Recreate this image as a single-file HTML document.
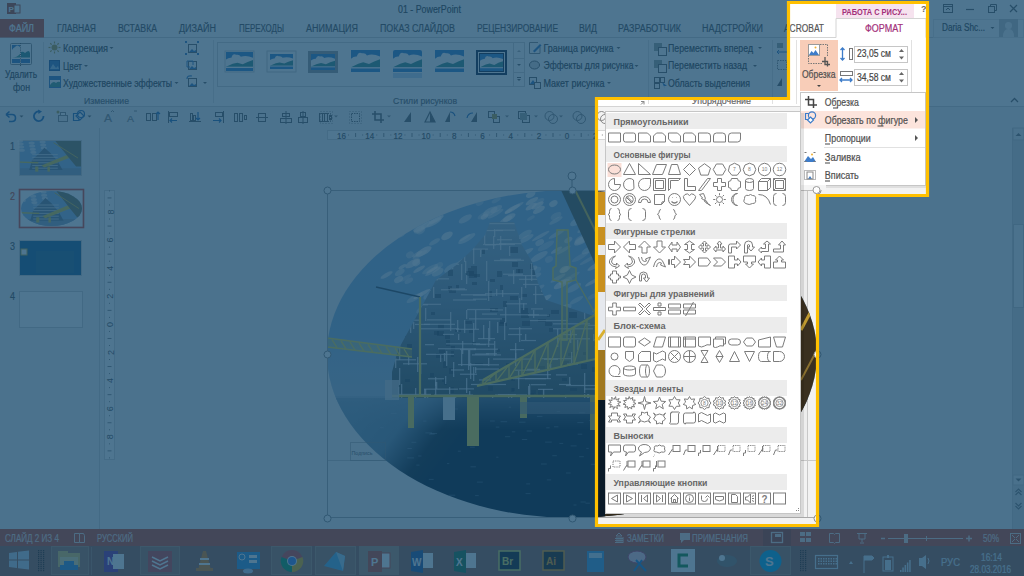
<!DOCTYPE html>
<html><head><meta charset="utf-8"><style>
html,body{margin:0;padding:0;width:1024px;height:576px;overflow:hidden;background:#4e7590}
svg{display:block}
</style></head><body>
<svg width="1024" height="576" viewBox="0 0 1024 576">
<defs>
<clipPath id="ell"><ellipse cx="572" cy="354" rx="245" ry="164"/></clipPath>
<linearGradient id="sky" x1="0" y1="0" x2="0" y2="1"><stop offset="0" stop-color="#86b2dc"/><stop offset="0.7" stop-color="#8ab2d6"/><stop offset="1" stop-color="#9cbcd6"/></linearGradient>
<linearGradient id="haze" x1="0" y1="0" x2="0" y2="1"><stop offset="0" stop-color="#b0c4d8" stop-opacity="0"/><stop offset="1" stop-color="#a8bcd0" stop-opacity="0.7"/></linearGradient>
<linearGradient id="sea" gradientUnits="userSpaceOnUse" x1="360" y1="405" x2="440" y2="465"><stop offset="0" stop-color="#7898b0"/><stop offset="0.45" stop-color="#6a88a0"/><stop offset="0.8" stop-color="#16222c"/><stop offset="1" stop-color="#0a1a28"/></linearGradient>
<linearGradient id="haze2" x1="0" y1="0" x2="0" y2="1"><stop offset="0" stop-color="#90a8c0" stop-opacity="0.55"/><stop offset="1" stop-color="#7890a8" stop-opacity="0"/></linearGradient>
<linearGradient id="towerg" x1="0" y1="0" x2="0" y2="1"><stop offset="0" stop-color="#98b0c4"/><stop offset="0.45" stop-color="#7a8ea0"/><stop offset="1" stop-color="#4a5450"/></linearGradient>
</defs>
<rect x="0" y="0" width="1024" height="576" fill="#e6e6e6" />
<rect x="0" y="0" width="1024" height="107" fill="#ffffff" />
<line x1="0" y1="37.5" x2="1024" y2="37.5" stroke="#d4d4d4" stroke-width="1" />
<line x1="0" y1="106.5" x2="1024" y2="106.5" stroke="#d4d4d4" stroke-width="1" />
<rect x="0" y="107" width="1024" height="21" fill="#f3f3f3" />
<rect x="0" y="128" width="100" height="401" fill="#f2f2f2" />
<line x1="99.5" y1="128" x2="99.5" y2="529" stroke="#d4d4d4" stroke-width="1" />
<rect x="100" y="128" width="924" height="401" fill="#f2f2f2" />
<rect x="7" y="3" width="9" height="11" fill="#b7472a" />
<rect x="14" y="5" width="6" height="8" fill="#ffffff" stroke="#b7472a" stroke-width="1" />
<text x="8.5" y="12" font-family="Liberation Sans" font-size="8" fill="#ffffff" font-weight="700" >P</text>
<text x="398" y="12.9" font-family="Liberation Sans" font-size="11" fill="#444444" textLength="63" lengthAdjust="spacingAndGlyphs" stroke="#444444" stroke-width="0.2" >01 - PowerPoint</text>
<text x="921" y="12" font-family="Liberation Sans" font-size="9" fill="#666" font-weight="700" >?</text>
<rect x="943.5" y="4.5" width="9" height="8" fill="none" stroke="#666" stroke-width="1" />
<line x1="943.5" y1="6.5" x2="952.5" y2="6.5" stroke="#666" stroke-width="1" />
<path d="M946,10 L948,8 L950,10" fill="none" stroke="#666" stroke-width="1" />
<line x1="966" y1="9.5" x2="974" y2="9.5" stroke="#666" stroke-width="1.2" />
<rect x="988.5" y="6.5" width="6" height="6" fill="none" stroke="#666" stroke-width="1" />
<path d="M990.5,6.5 V4.5 H996.5 V10.5 H994.5" fill="none" stroke="#666" stroke-width="1" />
<path d="M1010,5 L1017,12 M1017,5 L1010,12" fill="none" stroke="#666" stroke-width="1.3" />
<rect x="0" y="19" width="44" height="18.5" fill="#d24726" />
<text x="9" y="31.5" font-family="Liberation Sans" font-size="10" fill="#ffffff" textLength="25" lengthAdjust="spacingAndGlyphs" stroke="#ffffff" stroke-width="0.2" >ФАЙЛ</text>
<text x="57" y="31.5" font-family="Liberation Sans" font-size="10" fill="#555555" textLength="39" lengthAdjust="spacingAndGlyphs" stroke="#555555" stroke-width="0.2" >ГЛАВНАЯ</text>
<text x="118" y="31.5" font-family="Liberation Sans" font-size="10" fill="#555555" textLength="39" lengthAdjust="spacingAndGlyphs" stroke="#555555" stroke-width="0.2" >ВСТАВКА</text>
<text x="179" y="31.5" font-family="Liberation Sans" font-size="10" fill="#555555" textLength="37" lengthAdjust="spacingAndGlyphs" stroke="#555555" stroke-width="0.2" >ДИЗАЙН</text>
<text x="239" y="31.5" font-family="Liberation Sans" font-size="10" fill="#555555" textLength="45" lengthAdjust="spacingAndGlyphs" stroke="#555555" stroke-width="0.2" >ПЕРЕХОДЫ</text>
<text x="306" y="31.5" font-family="Liberation Sans" font-size="10" fill="#555555" textLength="52" lengthAdjust="spacingAndGlyphs" stroke="#555555" stroke-width="0.2" >АНИМАЦИЯ</text>
<text x="380" y="31.5" font-family="Liberation Sans" font-size="10" fill="#555555" textLength="75" lengthAdjust="spacingAndGlyphs" stroke="#555555" stroke-width="0.2" >ПОКАЗ СЛАЙДОВ</text>
<text x="477" y="31.5" font-family="Liberation Sans" font-size="10" fill="#555555" textLength="81" lengthAdjust="spacingAndGlyphs" stroke="#555555" stroke-width="0.2" >РЕЦЕНЗИРОВАНИЕ</text>
<text x="579" y="31.5" font-family="Liberation Sans" font-size="10" fill="#555555" textLength="18" lengthAdjust="spacingAndGlyphs" stroke="#555555" stroke-width="0.2" >ВИД</text>
<text x="618" y="31.5" font-family="Liberation Sans" font-size="10" fill="#555555" textLength="63" lengthAdjust="spacingAndGlyphs" stroke="#555555" stroke-width="0.2" >РАЗРАБОТЧИК</text>
<text x="702" y="31.5" font-family="Liberation Sans" font-size="10" fill="#555555" textLength="61" lengthAdjust="spacingAndGlyphs" stroke="#555555" stroke-width="0.2" >НАДСТРОЙКИ</text>
<text x="784" y="31.5" font-family="Liberation Sans" font-size="10" fill="#555555" textLength="40" lengthAdjust="spacingAndGlyphs" stroke="#555555" stroke-width="0.2" >ACROBAT</text>
<rect x="836" y="4" width="78" height="14.5" fill="#f6e3ef" />
<text x="842" y="15" font-family="Liberation Sans" font-size="8.5" fill="#a3307a" font-weight="700" textLength="65" lengthAdjust="spacingAndGlyphs" >РАБОТА С РИСУ...</text>
<path d="M836,37.5 V18.5 H926 V37.5" fill="#ffffff" stroke="#d4d4d4" stroke-width="1" />
<line x1="836.5" y1="37.5" x2="925.5" y2="37.5" stroke="#ffffff" stroke-width="1" />
<text x="865" y="31.5" font-family="Liberation Sans" font-size="10" fill="#a3307a" textLength="38" lengthAdjust="spacingAndGlyphs" stroke="#a3307a" stroke-width="0.2" >ФОРМАТ</text>
<rect x="933.5" y="19.5" width="90" height="18" fill="none" stroke="#e8e8e8" stroke-width="1" />
<text x="942" y="31" font-family="Liberation Sans" font-size="10" fill="#444444" textLength="43" lengthAdjust="spacingAndGlyphs" stroke="#444444" stroke-width="0.2" >Daria Shc...</text>
<path d="M990.5,27 L994.5,27 L992.5,29 Z" fill="#666" />
<rect x="999" y="19" width="19" height="18" fill="#c8c8c8" />
<path d="M1003,37 Q1003,29 1008.5,29 Q1014,29 1014,37 Z" fill="#f4f4f4" />
<circle cx="1008.5" cy="25.5" r="3.5" fill="#f4f4f4"/>
<rect x="10.5" y="43.5" width="21" height="21" fill="#ffffff" stroke="#8a8a8a" stroke-width="1" rx="1" />
<path d="M12,45 H20 V47 Q17,44 15,47 Q13,48 12,50 Z" fill="#3c7cc0" />
<path d="M12,57.5 Q17,57.5 20,54 V57.5 Z" fill="#4c9a8c" />
<path d="M21,57.5 V52 Q23,51 25,53 Q27,51 29,51 L30,53 V57.5 Z" fill="#3a8a8a" />
<rect x="12" y="59" width="8" height="4" fill="#3c7cc0" />
<rect x="21" y="59" width="9" height="4" fill="#3c7cc0" />
<line x1="20.5" y1="43" x2="20.5" y2="66" stroke="#555" stroke-width="1" stroke-dasharray="1,1.2"/>
<text x="5" y="78" font-family="Liberation Sans" font-size="10.5" fill="#444444" textLength="32" lengthAdjust="spacingAndGlyphs" stroke="#444444" stroke-width="0.2" >Удалить</text>
<text x="13" y="91" font-family="Liberation Sans" font-size="10.5" fill="#444444" textLength="17" lengthAdjust="spacingAndGlyphs" stroke="#444444" stroke-width="0.2" >фон</text>
<line x1="43.5" y1="42" x2="43.5" y2="103" stroke="#e1e1e1" stroke-width="1" />
<circle cx="54.5" cy="47.5" r="3" fill="#b5a14a"/>
<line x1="58.5" y1="47.5" x2="60.5" y2="47.5" stroke="#b5a14a" stroke-width="1.2" />
<line x1="57.32842712474619" y1="50.32842712474619" x2="58.742640687119284" y2="51.742640687119284" stroke="#b5a14a" stroke-width="1.2" />
<line x1="54.5" y1="51.5" x2="54.5" y2="53.5" stroke="#b5a14a" stroke-width="1.2" />
<line x1="51.67157287525381" y1="50.32842712474619" x2="50.257359312880716" y2="51.742640687119284" stroke="#b5a14a" stroke-width="1.2" />
<line x1="50.5" y1="47.5" x2="48.5" y2="47.5" stroke="#b5a14a" stroke-width="1.2" />
<line x1="51.67157287525381" y1="44.67157287525381" x2="50.257359312880716" y2="43.257359312880716" stroke="#b5a14a" stroke-width="1.2" />
<line x1="54.5" y1="43.5" x2="54.5" y2="41.5" stroke="#b5a14a" stroke-width="1.2" />
<line x1="57.32842712474619" y1="44.67157287525381" x2="58.742640687119284" y2="43.257359312880716" stroke="#b5a14a" stroke-width="1.2" />
<text x="63" y="52" font-family="Liberation Sans" font-size="10" fill="#444444" textLength="45" lengthAdjust="spacingAndGlyphs" stroke="#444444" stroke-width="0.2" >Коррекция</text>
<path d="M109.5,47 L113.5,47 L111.5,49 Z" fill="#666" />
<rect x="49.5" y="60.5" width="10" height="10" fill="#3c7cc0" stroke="#2a5c9a" stroke-width="1" />
<path d="M50,69 L53,64 L56,68 L58,66 L59,69 Z" fill="#9cc7ea" />
<text x="63" y="69.5" font-family="Liberation Sans" font-size="10" fill="#444444" textLength="19" lengthAdjust="spacingAndGlyphs" stroke="#444444" stroke-width="0.2" >Цвет</text>
<path d="M84,65 L88,65 L86,67 Z" fill="#666" />
<rect x="49.5" y="76.5" width="11" height="11" fill="#ffffff" stroke="#3c7cc0" stroke-width="1" />
<path d="M50,85 Q53,80 56,83 Q58,81 60,82 V87 H50 Z" fill="#4c9a8c" />
<rect x="50" y="77" width="10" height="3" fill="#3c7cc0" />
<text x="63" y="87" font-family="Liberation Sans" font-size="10" fill="#444444" textLength="109" lengthAdjust="spacingAndGlyphs" stroke="#444444" stroke-width="0.2" >Художественные эффекты</text>
<path d="M174.5,82 L178.5,82 L176.5,84 Z" fill="#666" />
<rect x="188.5" y="44.5" width="8" height="8" fill="#ffffff" stroke="#666" stroke-width="1" />
<path d="M189,52 L192,49 L194,51 L196,50 V52 Z" fill="#3c7cc0" />
<rect x="188.5" y="61.5" width="8" height="8" fill="#ffffff" stroke="#666" stroke-width="1" />
<path d="M189,69 L192,66 L194,68 L196,67 V69 Z" fill="#3c7cc0" />
<rect x="188.5" y="78.5" width="8" height="8" fill="#ffffff" stroke="#666" stroke-width="1" />
<path d="M189,86 L192,83 L194,85 L196,84 V86 Z" fill="#3c7cc0" />
<rect x="185" y="41" width="2" height="2" fill="#3c7cc0" />
<rect x="197" y="41" width="2" height="2" fill="#3c7cc0" />
<rect x="185" y="53" width="2" height="2" fill="#3c7cc0" />
<rect x="197" y="53" width="2" height="2" fill="#3c7cc0" />
<path d="M187,61 h6 v4 M187,61 v6 h3" fill="none" stroke="#3c7cc0" stroke-width="1" />
<path d="M187,79 q0,-4 5,-3" fill="none" stroke="#3c7cc0" stroke-width="1.2" />
<path d="M203,82 L207,82 L205,84 Z" fill="#666" />
<text x="84" y="103.5" font-family="Liberation Sans" font-size="9.5" fill="#666666" textLength="45" lengthAdjust="spacingAndGlyphs" stroke="#666666" stroke-width="0.2" >Изменение</text>
<line x1="213.5" y1="40" x2="213.5" y2="103" stroke="#e1e1e1" stroke-width="1" />
<rect x="217.5" y="42.5" width="307" height="44" fill="#ffffff" stroke="#d4d4d4" stroke-width="1" />
<rect x="225" y="51" width="29" height="21" fill="#ffffff" stroke="#d0d0d0" stroke-width="1" />
<rect x="226" y="52" width="27" height="19" fill="#3a86d0" />
<path d="M226,59.6 Q228.7,57.32 231.4,57.7 Q232.75,52.95 236.26,54.85 Q239.5,54.28 240.85,56.75 Q246.25,54.85 253,57.7 V66.82 H226 Z" fill="#ffffff" />
<path d="M226,66.82 L232.75,63.78 L237.34,62.64 L242.74,64.16 L247.6,61.88 L253,59.98 V66.82 Z" fill="#3f8f8a" />
<rect x="226" y="66.82" width="27" height="1.33" fill="#ffffff" />
<rect x="226" y="68.15" width="27" height="2.85" fill="#3a86d0" />
<rect x="267" y="51" width="29" height="21" fill="#ffffff" stroke="#c8c8c8" stroke-width="1" />
<rect x="270" y="54" width="23" height="15" fill="#3a86d0" />
<path d="M270,60.0 Q272.3,58.2 274.6,58.5 Q275.75,54.75 278.74,56.25 Q281.5,55.8 282.65,57.75 Q287.25,56.25 293,58.5 V65.7 H270 Z" fill="#ffffff" />
<path d="M270,65.7 L275.75,63.3 L279.66,62.4 L284.26,63.6 L288.4,61.8 L293,60.3 V65.7 Z" fill="#3f8f8a" />
<rect x="270" y="65.7" width="23" height="1.05" fill="#ffffff" />
<rect x="270" y="66.75" width="23" height="2.25" fill="#3a86d0" />
<rect x="308" y="51" width="30" height="22" fill="#9a9a9a" />
<rect x="311" y="54" width="24" height="16" fill="#3a86d0" />
<path d="M311,60.4 Q313.4,58.480000000000004 315.8,58.8 Q317.0,54.8 320.12,56.4 Q323.0,55.92 324.2,58.0 Q329.0,56.4 335,58.8 V66.48 H311 Z" fill="#ffffff" />
<path d="M311,66.48 L317.0,63.92 L321.08,62.96 L325.88,64.24 L330.2,62.32 L335,60.72 V66.48 Z" fill="#3f8f8a" />
<rect x="311" y="66.48" width="24" height="1.12" fill="#ffffff" />
<rect x="311" y="67.6" width="24" height="2.4" fill="#3a86d0" />
<rect x="351" y="50" width="29" height="22" fill="#3a86d0" />
<path d="M351,58.8 Q353.9,56.16 356.8,56.6 Q358.25,51.1 362.02,53.3 Q365.5,52.64 366.95,55.5 Q372.75,53.3 380,56.6 V67.16 H351 Z" fill="#ffffff" />
<path d="M351,67.16 L358.25,63.64 L363.18,62.32 L368.98,64.08 L374.2,61.44 L380,59.24 V67.16 Z" fill="#3f8f8a" />
<rect x="351" y="67.16" width="29" height="1.54" fill="#ffffff" />
<rect x="351" y="68.7" width="29" height="3.3" fill="#3a86d0" />
<rect x="393" y="73" width="29" height="5" fill="#3a86d0" opacity="0.3"/>
<rect x="393" y="50" width="29" height="22" fill="#3a86d0" rx="2" />
<path d="M393,58.8 Q395.9,56.16 398.8,56.6 Q400.25,51.1 404.02,53.3 Q407.5,52.64 408.95,55.5 Q414.75,53.3 422,56.6 V67.16 H393 Z" fill="#ffffff" />
<path d="M393,67.16 L400.25,63.64 L405.18,62.32 L410.98,64.08 L416.2,61.44 L422,59.24 V67.16 Z" fill="#3f8f8a" />
<rect x="393" y="67.16" width="29" height="1.54" fill="#ffffff" />
<rect x="393" y="68.7" width="29" height="3.3" fill="#3a86d0" />
<rect x="435" y="50" width="29" height="22" fill="#3a86d0" />
<path d="M435,58.8 Q437.9,56.16 440.8,56.6 Q442.25,51.1 446.02,53.3 Q449.5,52.64 450.95,55.5 Q456.75,53.3 464,56.6 V67.16 H435 Z" fill="#ffffff" />
<path d="M435,67.16 L442.25,63.64 L447.18,62.32 L452.98,64.08 L458.2,61.44 L464,59.24 V67.16 Z" fill="#3f8f8a" />
<rect x="435" y="67.16" width="29" height="1.54" fill="#ffffff" />
<rect x="435" y="68.7" width="29" height="3.3" fill="#3a86d0" />
<rect x="476" y="50" width="31" height="25" fill="#142440" />
<rect x="478" y="52" width="27" height="21" fill="#ffffff" />
<rect x="479" y="53" width="25" height="19" fill="#142440" />
<rect x="480" y="54" width="23" height="17" fill="#3a86d0" />
<path d="M480,60.8 Q482.3,58.76 484.6,59.1 Q485.75,54.85 488.74,56.55 Q491.5,56.04 492.65,58.25 Q497.25,56.55 503,59.1 V67.26 H480 Z" fill="#ffffff" />
<path d="M480,67.26 L485.75,64.53999999999999 L489.66,63.52 L494.26,64.88 L498.4,62.84 L503,61.14 V67.26 Z" fill="#3f8f8a" />
<rect x="480" y="67.26" width="23" height="1.1900000000000002" fill="#ffffff" />
<rect x="480" y="68.45" width="23" height="2.55" fill="#3a86d0" />
<line x1="513.5" y1="42.5" x2="513.5" y2="86.5" stroke="#d4d4d4" stroke-width="1" />
<line x1="513.5" y1="58.5" x2="524.5" y2="58.5" stroke="#d4d4d4" stroke-width="1" />
<line x1="513.5" y1="72.5" x2="524.5" y2="72.5" stroke="#d4d4d4" stroke-width="1" />
<path d="M517,52 L519,50 L521,52 Z" fill="#aaa" />
<path d="M517,64 L521,64 L519,66 Z" fill="#666" />
<line x1="517" y1="77.5" x2="521" y2="77.5" stroke="#666" stroke-width="1" />
<path d="M517,79 L521,79 L519,81 Z" fill="#666" />
<text x="393" y="103.5" font-family="Liberation Sans" font-size="9.5" fill="#666666" textLength="64" lengthAdjust="spacingAndGlyphs" stroke="#666666" stroke-width="0.2" >Стили рисунков</text>
<path d="M529.5,53.5 V42.5 H538 M540,47 V53.5 H529.5" fill="none" stroke="#888" stroke-width="1" />
<path d="M533,51 L540,44 L541.5,45.5 L534.5,52.5 Z" fill="#3c7cc0" />
<text x="543.5" y="51.7" font-family="Liberation Sans" font-size="10" fill="#444444" textLength="70" lengthAdjust="spacingAndGlyphs" stroke="#444444" stroke-width="0.2" >Граница рисунка</text>
<path d="M616.5,47 L620.5,47 L618.5,49 Z" fill="#666" />
<ellipse cx="534.5" cy="65" rx="5" ry="4" fill="#dcdcdc" stroke="#666"/>
<text x="543.5" y="69.2" font-family="Liberation Sans" font-size="10" fill="#444444" textLength="90" lengthAdjust="spacingAndGlyphs" stroke="#444444" stroke-width="0.2" >Эффекты для рисунка</text>
<path d="M634.5,65 L638.5,65 L636.5,67 Z" fill="#666" />
<rect x="529.5" y="77.5" width="7" height="7" fill="#ffffff" stroke="#666" stroke-width="1" />
<path d="M530,84 L533,80 L536,84 Z" fill="#3c7cc0" />
<rect x="534.5" y="82.5" width="6" height="6" fill="#ffffff" stroke="#666" stroke-width="1" />
<text x="543.5" y="86.6" font-family="Liberation Sans" font-size="10" fill="#444444" textLength="61" lengthAdjust="spacingAndGlyphs" stroke="#444444" stroke-width="0.2" >Макет рисунка</text>
<path d="M607,82 L611,82 L609,84 Z" fill="#666" />
<line x1="648.5" y1="40" x2="648.5" y2="104" stroke="#e1e1e1" stroke-width="1" />
<rect x="654" y="43" width="8" height="8" fill="#a0a8a0" />
<rect x="658.5" y="47.5" width="8" height="8" fill="#ffffff" stroke="#666" stroke-width="1" />
<text x="668" y="51.7" font-family="Liberation Sans" font-size="10" fill="#444444" textLength="85" lengthAdjust="spacingAndGlyphs" stroke="#444444" stroke-width="0.2" >Переместить вперед</text>
<path d="M758,47 L762,47 L760,49 Z" fill="#666" />
<rect x="654" y="60" width="8" height="8" fill="#a0a8a0" />
<rect x="658.5" y="64.5" width="8" height="8" fill="#ffffff" stroke="#666" stroke-width="1" />
<text x="668" y="69.2" font-family="Liberation Sans" font-size="10" fill="#444444" textLength="79" lengthAdjust="spacingAndGlyphs" stroke="#444444" stroke-width="0.2" >Переместить назад</text>
<path d="M753,65 L757,65 L755,67 Z" fill="#666" />
<rect x="654.5" y="77.5" width="5" height="5" fill="none" stroke="#666" stroke-width="1" />
<rect x="654.5" y="83.5" width="5" height="5" fill="none" stroke="#666" stroke-width="1" />
<rect x="660.5" y="77.5" width="4" height="5" fill="none" stroke="#666" stroke-width="1" />
<path d="M662,82 L667,86 L664,86 L665,89 Z" fill="#3c7cc0" />
<text x="668" y="86.6" font-family="Liberation Sans" font-size="10" fill="#444444" textLength="82" lengthAdjust="spacingAndGlyphs" stroke="#444444" stroke-width="0.2" >Область выделения</text>
<text x="692" y="103.5" font-family="Liberation Sans" font-size="9.5" fill="#666666" textLength="59" lengthAdjust="spacingAndGlyphs" stroke="#666666" stroke-width="0.2" >Упорядочение</text>
<path d="M641,101.5 h3 v3" fill="none" stroke="#888" stroke-width="1" />
<line x1="641" y1="104.5" x2="644" y2="101.5" stroke="#888" stroke-width="1" />
<line x1="772.5" y1="40" x2="772.5" y2="104" stroke="#e1e1e1" stroke-width="1" />
<rect x="777" y="43" width="6" height="5" fill="#a0a8a0" />
<path d="M777,52 h10 M779,54 l-2,-2 2,-2" fill="none" stroke="#3c7cc0" stroke-width="1" />
<rect x="777.5" y="60.5" width="9" height="9" fill="none" stroke="#888" stroke-width="1" stroke-dasharray="1.5,1"/>
<path d="M777,86 L782,78 L782,86 Z" fill="#666" />
<path d="M6,114.5 L9.5,111.5 M6,114.5 L9.5,117.5 M6,114.5 H12 Q15.5,114.5 15.5,118 Q15.5,121.5 12,121.5 H9" fill="none" stroke="#2f6fb5" stroke-width="1.6" />
<path d="M19.5,115.5 L23.5,115.5 L21.5,117.5 Z" fill="#666666" />
<path d="M43.5,116 A4.8,4.8 0 1 1 39.5,111.5" fill="none" stroke="#2f6fb5" stroke-width="1.8" />
<path d="M38,109.5 L42,111.5 L38.5,114 Z" fill="#2f6fb5" />
<rect x="58.5" y="115.5" width="9" height="6" fill="#f0f0f0" stroke="#888" stroke-width="1" />
<rect x="60.5" y="112.5" width="5" height="3" fill="#ffffff" stroke="#888" stroke-width="1" />
<circle cx="58" cy="112" r="1.5" fill="#b5a14a"/>
<path d="M73.5,113.5 H79 V120.5 H73.5 Z" fill="none" stroke="#2f6fb5" stroke-width="1.2" />
<path d="M80,112 L84,116 L80,120 L76,116 Z" fill="#ffffff" stroke="#2f6fb5" stroke-width="1.2" />
<circle cx="81" cy="114" r="3.5" fill="none" stroke="#2f6fb5" stroke-width="1.2"/>
<path d="M87.5,115.5 L91.5,115.5 L89.5,117.5 Z" fill="#666666" />
<text x="104" y="121.5" font-family="Liberation Sans" font-size="11" fill="#888" textLength="8" lengthAdjust="spacingAndGlyphs" stroke="#888" stroke-width="0.2" >A</text>
<path d="M111,112 L112.5,110.5 L114,112" fill="none" stroke="#888" stroke-width="1" />
<text x="127" y="122" font-family="Liberation Sans" font-size="9" fill="#888" textLength="7" lengthAdjust="spacingAndGlyphs" stroke="#888" stroke-width="0.2" >A</text>
<path d="M134,111 h3" fill="none" stroke="#888" stroke-width="1" />
<rect x="146.5" y="113.5" width="4" height="7" fill="none" stroke="#666666" stroke-width="1" />
<rect x="152.5" y="113.5" width="4" height="7" fill="none" stroke="#666666" stroke-width="1" />
<path d="M158,120 V112 M156,114 L158,112 L160,114" fill="none" stroke="#2f6fb5" stroke-width="1.2" />
<line x1="168.5" y1="111" x2="168.5" y2="123" stroke="#666666" stroke-width="1" />
<rect x="169.5" y="112.5" width="8" height="4" fill="none" stroke="#666666" stroke-width="1" />
<path d="M177,120.5 H170 M172,118.5 L170,120.5 L172,122.5" fill="none" stroke="#2f6fb5" stroke-width="1.2" />
<line x1="189" y1="121.5" x2="201" y2="121.5" stroke="#666666" stroke-width="1" />
<rect x="190.5" y="113.5" width="2" height="7" fill="none" stroke="#666666" stroke-width="1" />
<rect x="193.5" y="115.5" width="2" height="5" fill="none" stroke="#666666" stroke-width="1" />
<path d="M198,112 V120 M196,118 L198,120 L200,118" fill="none" stroke="#2f6fb5" stroke-width="1.2" />
<line x1="223.5" y1="111" x2="223.5" y2="123" stroke="#666666" stroke-width="1" />
<rect x="215.5" y="112.5" width="7" height="4" fill="none" stroke="#666666" stroke-width="1" />
<path d="M213,120.5 H221 M219,118.5 L221,120.5 L219,122.5" fill="none" stroke="#2f6fb5" stroke-width="1.2" />
<rect x="234.5" y="113.5" width="3" height="8" fill="none" stroke="#666666" stroke-width="1" />
<rect x="239.5" y="113.5" width="3" height="8" fill="none" stroke="#666666" stroke-width="1" />
<rect x="244.5" y="115.5" width="2" height="4" fill="none" stroke="#666666" stroke-width="1" />
<line x1="256" y1="117.5" x2="268" y2="117.5" stroke="#666666" stroke-width="1" />
<rect x="258.5" y="113.5" width="7" height="8" fill="none" stroke="#666666" stroke-width="1" />
<line x1="286" y1="111" x2="286" y2="124" stroke="#666666" stroke-width="1" />
<rect x="282.5" y="113.5" width="7" height="3" fill="none" stroke="#666666" stroke-width="1" />
<rect x="280.5" y="118.5" width="11" height="4" fill="none" stroke="#666666" stroke-width="1" />
<line x1="303" y1="111" x2="303" y2="124" stroke="#666666" stroke-width="1" />
<rect x="300.5" y="112.5" width="5" height="4" fill="none" stroke="#666666" stroke-width="1" />
<rect x="298.5" y="117.5" width="9" height="5" fill="none" stroke="#666666" stroke-width="1" />
<rect x="319.5" y="113.5" width="3" height="8" fill="none" stroke="#666666" stroke-width="1" />
<rect x="324.5" y="113.5" width="3" height="8" fill="none" stroke="#666666" stroke-width="1" />
<rect x="329.5" y="115.5" width="2" height="4" fill="none" stroke="#666666" stroke-width="1" />
<rect x="322.5" y="113.5" width="8" height="8" fill="none" stroke="#666666" stroke-width="1" stroke-dasharray="1.5,1"/>
<rect x="320.5" y="111.5" width="12" height="12" fill="none" stroke="#999" stroke-width="1" stroke-dasharray="1,2"/>
<rect x="351.5" y="113.5" width="8" height="8" fill="none" stroke="#666666" stroke-width="1" stroke-dasharray="1.5,1"/>
<rect x="349.5" y="111.5" width="12" height="12" fill="none" stroke="#999" stroke-width="1" stroke-dasharray="1,2"/>
<path d="M375,111 V120 H384 M372,114 H381 V123" fill="none" stroke="#666666" stroke-width="1.6" />
<path d="M404,122 L411,112 L411,122 Z" fill="#666666" />
<path d="M425,122 L430,112 L435,122 Z" fill="none" stroke="#666666" stroke-width="1.2" />
<path d="M430,112 L430,122 L435,122 Z" fill="#666666" />
<path d="M445,122 L450,112 L450,122 Z" fill="#666666" />
<path d="M450,112 Q454,112 455,116" fill="none" stroke="#2f6fb5" stroke-width="1.2" />
<path d="M471,122 L477,112 L477,122 Z" fill="#666666" />
<path d="M467,118 Q468,113 473,113" fill="none" stroke="#2f6fb5" stroke-width="1.2" />
<rect x="488.5" y="111.5" width="6" height="6" fill="none" stroke="#666666" stroke-width="1" />
<rect x="493.5" y="116.5" width="6" height="6" fill="none" stroke="#666666" stroke-width="1" />
<rect x="492" y="114" width="5" height="5" fill="#b5a14a" />
<rect x="518.5" y="111.5" width="7" height="7" fill="none" stroke="#666666" stroke-width="1" />
<rect x="522.5" y="115.5" width="7" height="7" fill="none" stroke="#666666" stroke-width="1" />
<rect x="520" y="113" width="7" height="7" fill="#a0a8a0" />
<circle cx="549.5" cy="116" r="4.5" fill="none" stroke="#888"/>
<circle cx="553" cy="119" r="4.5" fill="none" stroke="#888"/>
<circle cx="577.5" cy="116" r="4.5" fill="none" stroke="#888"/>
<circle cx="581" cy="119" r="4.5" fill="none" stroke="#888"/>
<circle cx="601.5" cy="116" r="4.5" fill="none" stroke="#888"/>
<circle cx="605" cy="119" r="4.5" fill="none" stroke="#888"/>
<path d="M334,115.5 L338,115.5 L336,117.5 Z" fill="#888" />
<path d="M387,115.5 L391,115.5 L389,117.5 Z" fill="#888" />
<path d="M505,115.5 L509,115.5 L507,117.5 Z" fill="#888" />
<path d="M534,115.5 L538,115.5 L536,117.5 Z" fill="#888" />
<path d="M559,115.5 L563,115.5 L561,117.5 Z" fill="#888" />
<text x="10" y="150" font-family="Liberation Sans" font-size="11" fill="#555" textLength="5" lengthAdjust="spacingAndGlyphs" stroke="#555" stroke-width="0.2" >1</text>
<rect x="19.5" y="140.5" width="62" height="35" fill="#ffffff" stroke="#d0d0d0" stroke-width="1" />
<g >
<rect x="20" y="141" width="61" height="34" fill="#90b8e0" />
<ellipse cx="20.0" cy="141.0" rx="3" ry="1.5" fill="#ffffff" opacity="0.6"/>
<ellipse cx="42.6" cy="142.0" rx="3" ry="1.5" fill="#ffffff" opacity="0.6"/>
<ellipse cx="31.6" cy="143.0" rx="3" ry="1.5" fill="#ffffff" opacity="0.6"/>
<ellipse cx="20.6" cy="144.1" rx="3" ry="1.5" fill="#ffffff" opacity="0.6"/>
<ellipse cx="43.2" cy="145.1" rx="3" ry="1.5" fill="#ffffff" opacity="0.6"/>
<ellipse cx="32.2" cy="146.1" rx="3" ry="1.5" fill="#ffffff" opacity="0.6"/>
<ellipse cx="21.2" cy="147.1" rx="3" ry="1.5" fill="#ffffff" opacity="0.6"/>
<ellipse cx="43.8" cy="148.1" rx="3" ry="1.5" fill="#ffffff" opacity="0.6"/>
<ellipse cx="32.8" cy="149.2" rx="3" ry="1.5" fill="#ffffff" opacity="0.6"/>
<ellipse cx="21.8" cy="150.2" rx="3" ry="1.5" fill="#ffffff" opacity="0.6"/>
<ellipse cx="44.4" cy="151.2" rx="3" ry="1.5" fill="#ffffff" opacity="0.6"/>
<ellipse cx="33.4" cy="152.2" rx="3" ry="1.5" fill="#ffffff" opacity="0.6"/>
<rect x="20" y="168.2" width="61" height="6.800000000000001" fill="#8aa4bc" />
<path d="M29.15,169.9 L32.2,159.7 L39.519999999999996,152.9 L44.400000000000006,147.8 L50.5,152.9 L57.82,161.4 L62.699999999999996,169.9 Z" fill="#6a7e90" />
<line x1="32.2" y1="154.6" x2="57.82" y2="154.6" stroke="#dde6ee" stroke-width="0.8" />
<line x1="32.2" y1="157.32" x2="57.82" y2="157.32" stroke="#dde6ee" stroke-width="0.8" />
<line x1="32.2" y1="160.04" x2="57.82" y2="160.04" stroke="#dde6ee" stroke-width="0.8" />
<line x1="32.2" y1="162.76" x2="57.82" y2="162.76" stroke="#dde6ee" stroke-width="0.8" />
<line x1="32.2" y1="165.48" x2="57.82" y2="165.48" stroke="#dde6ee" stroke-width="0.8" />
<line x1="32.2" y1="168.2" x2="57.82" y2="168.2" stroke="#dde6ee" stroke-width="0.8" />
<path d="M20,161.4 L38.3,162.07999999999998 L38.3,163.44 L20,162.76 Z" fill="#e0cc40" />
<path d="M41.349999999999994,165.48 L71.85,152.9 L73.68,156.3 L44.400000000000006,167.52 Z" fill="#e0cc40" />
<path d="M55.379999999999995,141 L81,141 L81,166.5 L76.12,166.5 L67.58,156.3 Z" fill="#7a7858" />
<path d="M53.550000000000004,142.7 L77.94999999999999,158.0" fill="none" stroke="#d0b840" stroke-width="1" />
<rect x="35.25" y="166.5" width="3.0500000000000003" height="5.1" fill="#e0cc40" />
<rect x="47.45" y="166.5" width="2.44" height="5.1" fill="#e0cc40" />
</g>
<text x="10" y="200" font-family="Liberation Sans" font-size="11" fill="#d24726" textLength="5" lengthAdjust="spacingAndGlyphs" stroke="#d24726" stroke-width="0.2" >2</text>
<rect x="19.5" y="189.5" width="64" height="38" fill="none" stroke="#e04a30" stroke-width="1.6" />
<rect x="21" y="191" width="61" height="35" fill="#ffffff" />
<clipPath id="e21191"><ellipse cx="51.5" cy="208.5" rx="30.5" ry="17.5"/></clipPath>
<g clip-path="url(#e21191)">
<rect x="21" y="191" width="61" height="35" fill="#90b8e0" />
<ellipse cx="21.0" cy="191.0" rx="3" ry="1.5" fill="#ffffff" opacity="0.6"/>
<ellipse cx="43.6" cy="192.1" rx="3" ry="1.5" fill="#ffffff" opacity="0.6"/>
<ellipse cx="32.6" cy="193.1" rx="3" ry="1.5" fill="#ffffff" opacity="0.6"/>
<ellipse cx="21.6" cy="194.2" rx="3" ry="1.5" fill="#ffffff" opacity="0.6"/>
<ellipse cx="44.2" cy="195.2" rx="3" ry="1.5" fill="#ffffff" opacity="0.6"/>
<ellipse cx="33.2" cy="196.2" rx="3" ry="1.5" fill="#ffffff" opacity="0.6"/>
<ellipse cx="22.2" cy="197.3" rx="3" ry="1.5" fill="#ffffff" opacity="0.6"/>
<ellipse cx="44.8" cy="198.3" rx="3" ry="1.5" fill="#ffffff" opacity="0.6"/>
<ellipse cx="33.8" cy="199.4" rx="3" ry="1.5" fill="#ffffff" opacity="0.6"/>
<ellipse cx="22.8" cy="200.4" rx="3" ry="1.5" fill="#ffffff" opacity="0.6"/>
<ellipse cx="45.4" cy="201.5" rx="3" ry="1.5" fill="#ffffff" opacity="0.6"/>
<ellipse cx="34.4" cy="202.6" rx="3" ry="1.5" fill="#ffffff" opacity="0.6"/>
<rect x="21" y="219.0" width="61" height="7.0" fill="#8aa4bc" />
<path d="M30.15,220.75 L33.2,210.25 L40.519999999999996,203.25 L45.400000000000006,198.0 L51.5,203.25 L58.82,212.0 L63.699999999999996,220.75 Z" fill="#6a7e90" />
<line x1="33.2" y1="205.0" x2="58.82" y2="205.0" stroke="#dde6ee" stroke-width="0.8" />
<line x1="33.2" y1="207.8" x2="58.82" y2="207.8" stroke="#dde6ee" stroke-width="0.8" />
<line x1="33.2" y1="210.6" x2="58.82" y2="210.6" stroke="#dde6ee" stroke-width="0.8" />
<line x1="33.2" y1="213.4" x2="58.82" y2="213.4" stroke="#dde6ee" stroke-width="0.8" />
<line x1="33.2" y1="216.2" x2="58.82" y2="216.2" stroke="#dde6ee" stroke-width="0.8" />
<line x1="33.2" y1="219.0" x2="58.82" y2="219.0" stroke="#dde6ee" stroke-width="0.8" />
<path d="M21,212.0 L39.3,212.7 L39.3,214.1 L21,213.4 Z" fill="#e0cc40" />
<path d="M42.349999999999994,216.2 L72.85,203.25 L74.68,206.75 L45.400000000000006,218.3 Z" fill="#e0cc40" />
<path d="M56.379999999999995,191 L82,191 L82,217.25 L77.12,217.25 L68.58,206.75 Z" fill="#7a7858" />
<path d="M54.550000000000004,192.75 L78.94999999999999,208.5" fill="none" stroke="#d0b840" stroke-width="1" />
<rect x="36.25" y="217.25" width="3.0500000000000003" height="5.25" fill="#e0cc40" />
<rect x="48.45" y="217.25" width="2.44" height="5.25" fill="#e0cc40" />
</g>
<text x="10" y="250" font-family="Liberation Sans" font-size="11" fill="#555" textLength="5" lengthAdjust="spacingAndGlyphs" stroke="#555" stroke-width="0.2" >3</text>
<rect x="19.5" y="240.5" width="62" height="35" fill="#1f5f8e" stroke="#d0d0d0" stroke-width="1" />
<rect x="36" y="251" width="38" height="22" fill="#2a6a8a" />
<rect x="21" y="249" width="6" height="6" fill="#ffffff" stroke="#c8b040" stroke-width="1" />
<text x="10" y="300" font-family="Liberation Sans" font-size="11" fill="#555" textLength="5" lengthAdjust="spacingAndGlyphs" stroke="#555" stroke-width="0.2" >4</text>
<rect x="19.5" y="291.5" width="63" height="36" fill="#ffffff" stroke="#d0d0d0" stroke-width="1" />
<rect x="327.5" y="130.5" width="490" height="9" fill="#ffffff" stroke="#d8d8d8" stroke-width="1" />
<text x="341.5" y="138.5" font-family="Liberation Sans" font-size="9" fill="#555" text-anchor="middle" textLength="9" lengthAdjust="spacingAndGlyphs" stroke="#555" stroke-width="0.2" >16</text>
<line x1="348.55" y1="134.5" x2="348.55" y2="135.5" stroke="#888" stroke-width="1" />
<line x1="355.6" y1="133" x2="355.6" y2="137" stroke="#888" stroke-width="1" />
<line x1="362.65" y1="134.5" x2="362.65" y2="135.5" stroke="#888" stroke-width="1" />
<text x="369.7" y="138.5" font-family="Liberation Sans" font-size="9" fill="#555" text-anchor="middle" textLength="9" lengthAdjust="spacingAndGlyphs" stroke="#555" stroke-width="0.2" >14</text>
<line x1="376.75" y1="134.5" x2="376.75" y2="135.5" stroke="#888" stroke-width="1" />
<line x1="383.8" y1="133" x2="383.8" y2="137" stroke="#888" stroke-width="1" />
<line x1="390.84999999999997" y1="134.5" x2="390.84999999999997" y2="135.5" stroke="#888" stroke-width="1" />
<text x="397.9" y="138.5" font-family="Liberation Sans" font-size="9" fill="#555" text-anchor="middle" textLength="9" lengthAdjust="spacingAndGlyphs" stroke="#555" stroke-width="0.2" >12</text>
<line x1="404.95" y1="134.5" x2="404.95" y2="135.5" stroke="#888" stroke-width="1" />
<line x1="412.0" y1="133" x2="412.0" y2="137" stroke="#888" stroke-width="1" />
<line x1="419.04999999999995" y1="134.5" x2="419.04999999999995" y2="135.5" stroke="#888" stroke-width="1" />
<text x="426.1" y="138.5" font-family="Liberation Sans" font-size="9" fill="#555" text-anchor="middle" textLength="9" lengthAdjust="spacingAndGlyphs" stroke="#555" stroke-width="0.2" >10</text>
<line x1="433.15000000000003" y1="134.5" x2="433.15000000000003" y2="135.5" stroke="#888" stroke-width="1" />
<line x1="440.20000000000005" y1="133" x2="440.20000000000005" y2="137" stroke="#888" stroke-width="1" />
<line x1="447.25" y1="134.5" x2="447.25" y2="135.5" stroke="#888" stroke-width="1" />
<text x="454.3" y="138.5" font-family="Liberation Sans" font-size="9" fill="#555" text-anchor="middle" textLength="4.5" lengthAdjust="spacingAndGlyphs" stroke="#555" stroke-width="0.2" >8</text>
<line x1="461.35" y1="134.5" x2="461.35" y2="135.5" stroke="#888" stroke-width="1" />
<line x1="468.40000000000003" y1="133" x2="468.40000000000003" y2="137" stroke="#888" stroke-width="1" />
<line x1="475.45" y1="134.5" x2="475.45" y2="135.5" stroke="#888" stroke-width="1" />
<text x="482.5" y="138.5" font-family="Liberation Sans" font-size="9" fill="#555" text-anchor="middle" textLength="4.5" lengthAdjust="spacingAndGlyphs" stroke="#555" stroke-width="0.2" >6</text>
<line x1="489.55" y1="134.5" x2="489.55" y2="135.5" stroke="#888" stroke-width="1" />
<line x1="496.6" y1="133" x2="496.6" y2="137" stroke="#888" stroke-width="1" />
<line x1="503.65" y1="134.5" x2="503.65" y2="135.5" stroke="#888" stroke-width="1" />
<text x="510.7" y="138.5" font-family="Liberation Sans" font-size="9" fill="#555" text-anchor="middle" textLength="4.5" lengthAdjust="spacingAndGlyphs" stroke="#555" stroke-width="0.2" >4</text>
<line x1="517.75" y1="134.5" x2="517.75" y2="135.5" stroke="#888" stroke-width="1" />
<line x1="524.8" y1="133" x2="524.8" y2="137" stroke="#888" stroke-width="1" />
<line x1="531.85" y1="134.5" x2="531.85" y2="135.5" stroke="#888" stroke-width="1" />
<text x="538.9" y="138.5" font-family="Liberation Sans" font-size="9" fill="#555" text-anchor="middle" textLength="4.5" lengthAdjust="spacingAndGlyphs" stroke="#555" stroke-width="0.2" >2</text>
<line x1="545.9499999999999" y1="134.5" x2="545.9499999999999" y2="135.5" stroke="#888" stroke-width="1" />
<line x1="553.0" y1="133" x2="553.0" y2="137" stroke="#888" stroke-width="1" />
<line x1="560.05" y1="134.5" x2="560.05" y2="135.5" stroke="#888" stroke-width="1" />
<text x="567.1" y="138.5" font-family="Liberation Sans" font-size="9" fill="#555" text-anchor="middle" textLength="4.5" lengthAdjust="spacingAndGlyphs" stroke="#555" stroke-width="0.2" >0</text>
<line x1="574.15" y1="134.5" x2="574.15" y2="135.5" stroke="#888" stroke-width="1" />
<line x1="581.2" y1="133" x2="581.2" y2="137" stroke="#888" stroke-width="1" />
<line x1="588.25" y1="134.5" x2="588.25" y2="135.5" stroke="#888" stroke-width="1" />
<text x="595.3" y="138.5" font-family="Liberation Sans" font-size="9" fill="#555" text-anchor="middle" textLength="4.5" lengthAdjust="spacingAndGlyphs" stroke="#555" stroke-width="0.2" >2</text>
<line x1="602.3499999999999" y1="134.5" x2="602.3499999999999" y2="135.5" stroke="#888" stroke-width="1" />
<line x1="609.4" y1="133" x2="609.4" y2="137" stroke="#888" stroke-width="1" />
<line x1="616.4499999999999" y1="134.5" x2="616.4499999999999" y2="135.5" stroke="#888" stroke-width="1" />
<text x="623.5" y="138.5" font-family="Liberation Sans" font-size="9" fill="#555" text-anchor="middle" textLength="4.5" lengthAdjust="spacingAndGlyphs" stroke="#555" stroke-width="0.2" >4</text>
<line x1="630.55" y1="134.5" x2="630.55" y2="135.5" stroke="#888" stroke-width="1" />
<line x1="637.6" y1="133" x2="637.6" y2="137" stroke="#888" stroke-width="1" />
<line x1="644.65" y1="134.5" x2="644.65" y2="135.5" stroke="#888" stroke-width="1" />
<text x="651.7" y="138.5" font-family="Liberation Sans" font-size="9" fill="#555" text-anchor="middle" textLength="4.5" lengthAdjust="spacingAndGlyphs" stroke="#555" stroke-width="0.2" >6</text>
<line x1="658.75" y1="134.5" x2="658.75" y2="135.5" stroke="#888" stroke-width="1" />
<line x1="665.8000000000001" y1="133" x2="665.8000000000001" y2="137" stroke="#888" stroke-width="1" />
<line x1="672.85" y1="134.5" x2="672.85" y2="135.5" stroke="#888" stroke-width="1" />
<text x="679.9" y="138.5" font-family="Liberation Sans" font-size="9" fill="#555" text-anchor="middle" textLength="4.5" lengthAdjust="spacingAndGlyphs" stroke="#555" stroke-width="0.2" >8</text>
<line x1="686.9499999999999" y1="134.5" x2="686.9499999999999" y2="135.5" stroke="#888" stroke-width="1" />
<line x1="694.0" y1="133" x2="694.0" y2="137" stroke="#888" stroke-width="1" />
<line x1="701.05" y1="134.5" x2="701.05" y2="135.5" stroke="#888" stroke-width="1" />
<text x="708.0999999999999" y="138.5" font-family="Liberation Sans" font-size="9" fill="#555" text-anchor="middle" textLength="9" lengthAdjust="spacingAndGlyphs" stroke="#555" stroke-width="0.2" >10</text>
<line x1="715.1499999999999" y1="134.5" x2="715.1499999999999" y2="135.5" stroke="#888" stroke-width="1" />
<line x1="722.1999999999999" y1="133" x2="722.1999999999999" y2="137" stroke="#888" stroke-width="1" />
<line x1="729.2499999999999" y1="134.5" x2="729.2499999999999" y2="135.5" stroke="#888" stroke-width="1" />
<text x="736.3" y="138.5" font-family="Liberation Sans" font-size="9" fill="#555" text-anchor="middle" textLength="9" lengthAdjust="spacingAndGlyphs" stroke="#555" stroke-width="0.2" >12</text>
<line x1="743.3499999999999" y1="134.5" x2="743.3499999999999" y2="135.5" stroke="#888" stroke-width="1" />
<line x1="750.4" y1="133" x2="750.4" y2="137" stroke="#888" stroke-width="1" />
<line x1="757.4499999999999" y1="134.5" x2="757.4499999999999" y2="135.5" stroke="#888" stroke-width="1" />
<text x="764.5" y="138.5" font-family="Liberation Sans" font-size="9" fill="#555" text-anchor="middle" textLength="9" lengthAdjust="spacingAndGlyphs" stroke="#555" stroke-width="0.2" >14</text>
<line x1="771.55" y1="134.5" x2="771.55" y2="135.5" stroke="#888" stroke-width="1" />
<line x1="778.6" y1="133" x2="778.6" y2="137" stroke="#888" stroke-width="1" />
<line x1="785.65" y1="134.5" x2="785.65" y2="135.5" stroke="#888" stroke-width="1" />
<text x="792.7" y="138.5" font-family="Liberation Sans" font-size="9" fill="#555" text-anchor="middle" textLength="9" lengthAdjust="spacingAndGlyphs" stroke="#555" stroke-width="0.2" >16</text>
<line x1="799.75" y1="134.5" x2="799.75" y2="135.5" stroke="#888" stroke-width="1" />
<line x1="806.8000000000001" y1="133" x2="806.8000000000001" y2="137" stroke="#888" stroke-width="1" />
<line x1="813.85" y1="134.5" x2="813.85" y2="135.5" stroke="#888" stroke-width="1" />
<rect x="104.5" y="190.5" width="10" height="269" fill="#ffffff" stroke="#d8d8d8" stroke-width="1" />
<text x="110.5" y="212.0" font-family="Liberation Sans" font-size="9" fill="#555" text-anchor="middle" transform="rotate(-90 110.5 212.0) translate(0 3)">8</text>
<line x1="109" y1="219.03" x2="110" y2="219.03" stroke="#888" stroke-width="1" />
<line x1="107.5" y1="226.06" x2="111.5" y2="226.06" stroke="#888" stroke-width="1" />
<line x1="109" y1="233.09" x2="110" y2="233.09" stroke="#888" stroke-width="1" />
<text x="110.5" y="240.1" font-family="Liberation Sans" font-size="9" fill="#555" text-anchor="middle" transform="rotate(-90 110.5 240.1) translate(0 3)">6</text>
<line x1="109" y1="247.13" x2="110" y2="247.13" stroke="#888" stroke-width="1" />
<line x1="107.5" y1="254.16" x2="111.5" y2="254.16" stroke="#888" stroke-width="1" />
<line x1="109" y1="261.19" x2="110" y2="261.19" stroke="#888" stroke-width="1" />
<text x="110.5" y="268.2" font-family="Liberation Sans" font-size="9" fill="#555" text-anchor="middle" transform="rotate(-90 110.5 268.2) translate(0 3)">4</text>
<line x1="109" y1="275.22999999999996" x2="110" y2="275.22999999999996" stroke="#888" stroke-width="1" />
<line x1="107.5" y1="282.26" x2="111.5" y2="282.26" stroke="#888" stroke-width="1" />
<line x1="109" y1="289.28999999999996" x2="110" y2="289.28999999999996" stroke="#888" stroke-width="1" />
<text x="110.5" y="296.3" font-family="Liberation Sans" font-size="9" fill="#555" text-anchor="middle" transform="rotate(-90 110.5 296.3) translate(0 3)">2</text>
<line x1="109" y1="303.33" x2="110" y2="303.33" stroke="#888" stroke-width="1" />
<line x1="107.5" y1="310.36" x2="111.5" y2="310.36" stroke="#888" stroke-width="1" />
<line x1="109" y1="317.39" x2="110" y2="317.39" stroke="#888" stroke-width="1" />
<text x="110.5" y="324.4" font-family="Liberation Sans" font-size="9" fill="#555" text-anchor="middle" transform="rotate(-90 110.5 324.4) translate(0 3)">0</text>
<line x1="109" y1="331.42999999999995" x2="110" y2="331.42999999999995" stroke="#888" stroke-width="1" />
<line x1="107.5" y1="338.46" x2="111.5" y2="338.46" stroke="#888" stroke-width="1" />
<line x1="109" y1="345.48999999999995" x2="110" y2="345.48999999999995" stroke="#888" stroke-width="1" />
<text x="110.5" y="352.5" font-family="Liberation Sans" font-size="9" fill="#555" text-anchor="middle" transform="rotate(-90 110.5 352.5) translate(0 3)">2</text>
<line x1="109" y1="359.53" x2="110" y2="359.53" stroke="#888" stroke-width="1" />
<line x1="107.5" y1="366.56" x2="111.5" y2="366.56" stroke="#888" stroke-width="1" />
<line x1="109" y1="373.59" x2="110" y2="373.59" stroke="#888" stroke-width="1" />
<text x="110.5" y="380.6" font-family="Liberation Sans" font-size="9" fill="#555" text-anchor="middle" transform="rotate(-90 110.5 380.6) translate(0 3)">4</text>
<line x1="109" y1="387.63" x2="110" y2="387.63" stroke="#888" stroke-width="1" />
<line x1="107.5" y1="394.66" x2="111.5" y2="394.66" stroke="#888" stroke-width="1" />
<line x1="109" y1="401.69" x2="110" y2="401.69" stroke="#888" stroke-width="1" />
<text x="110.5" y="408.70000000000005" font-family="Liberation Sans" font-size="9" fill="#555" text-anchor="middle" transform="rotate(-90 110.5 408.70000000000005) translate(0 3)">6</text>
<line x1="109" y1="415.73" x2="110" y2="415.73" stroke="#888" stroke-width="1" />
<line x1="107.5" y1="422.76000000000005" x2="111.5" y2="422.76000000000005" stroke="#888" stroke-width="1" />
<line x1="109" y1="429.79" x2="110" y2="429.79" stroke="#888" stroke-width="1" />
<text x="110.5" y="436.8" font-family="Liberation Sans" font-size="9" fill="#555" text-anchor="middle" transform="rotate(-90 110.5 436.8) translate(0 3)">8</text>
<line x1="109" y1="443.83" x2="110" y2="443.83" stroke="#888" stroke-width="1" />
<line x1="107.5" y1="450.86" x2="111.5" y2="450.86" stroke="#888" stroke-width="1" />
<line x1="109" y1="457.89" x2="110" y2="457.89" stroke="#888" stroke-width="1" />
<line x1="109" y1="204.97" x2="110" y2="204.97" stroke="#888" stroke-width="1" />
<line x1="107.5" y1="197.94" x2="111.5" y2="197.94" stroke="#888" stroke-width="1" />
<line x1="109" y1="190.91" x2="110" y2="190.91" stroke="#888" stroke-width="1" />
<rect x="327" y="190" width="480" height="270" fill="#ededed" />
<line x1="327" y1="460.5" x2="817" y2="460.5" stroke="#c8c8c8" stroke-width="1" />
<line x1="807.5" y1="190" x2="807.5" y2="518" stroke="#c8c8c8" stroke-width="1" />
<clipPath id="tower"><path d="M490,222 L514,222 L522,245 L532,262 L538,283 L546,300 L600,318 L600,398 L392,398 L392,372 L398,350 L420,310 L436,280 L455,266 L472,250 L485,235 Z"/></clipPath>
<g clip-path="url(#ell)">
<rect x="327" y="190" width="490" height="210" fill="url(#sky)" />
<ellipse cx="479.5" cy="269.2" rx="9.5" ry="2.4" fill="#ffffff" opacity="0.50" transform="rotate(-30 479.5 269.2)"/>
<ellipse cx="509.2" cy="217.5" rx="7.1" ry="2.8" fill="#ffffff" opacity="0.62" transform="rotate(-30 509.2 217.5)"/>
<ellipse cx="400.7" cy="233.9" rx="4.5" ry="3.1" fill="#ffffff" opacity="0.58" transform="rotate(-30 400.7 233.9)"/>
<ellipse cx="592.2" cy="282.2" rx="7.7" ry="1.8" fill="#ffffff" opacity="0.31" transform="rotate(-30 592.2 282.2)"/>
<ellipse cx="496.2" cy="200.2" rx="5.1" ry="2.0" fill="#ffffff" opacity="0.31" transform="rotate(-30 496.2 200.2)"/>
<ellipse cx="482.1" cy="252.8" rx="9.1" ry="2.5" fill="#ffffff" opacity="0.56" transform="rotate(-30 482.1 252.8)"/>
<ellipse cx="490.0" cy="283.4" rx="6.7" ry="2.1" fill="#ffffff" opacity="0.70" transform="rotate(-30 490.0 283.4)"/>
<ellipse cx="599.1" cy="307.9" rx="8.2" ry="2.1" fill="#ffffff" opacity="0.39" transform="rotate(-30 599.1 307.9)"/>
<ellipse cx="443.6" cy="201.7" rx="8.6" ry="2.3" fill="#ffffff" opacity="0.64" transform="rotate(-30 443.6 201.7)"/>
<ellipse cx="465.0" cy="324.2" rx="9.1" ry="1.5" fill="#ffffff" opacity="0.38" transform="rotate(-30 465.0 324.2)"/>
<ellipse cx="580.3" cy="256.9" rx="9.9" ry="2.3" fill="#ffffff" opacity="0.33" transform="rotate(-30 580.3 256.9)"/>
<ellipse cx="518.5" cy="299.4" rx="5.6" ry="1.7" fill="#ffffff" opacity="0.43" transform="rotate(-30 518.5 299.4)"/>
<ellipse cx="592.1" cy="296.6" rx="4.7" ry="2.0" fill="#ffffff" opacity="0.34" transform="rotate(-30 592.1 296.6)"/>
<ellipse cx="419.1" cy="269.2" rx="6.7" ry="1.9" fill="#ffffff" opacity="0.59" transform="rotate(-30 419.1 269.2)"/>
<ellipse cx="408.8" cy="280.8" rx="4.7" ry="2.3" fill="#ffffff" opacity="0.39" transform="rotate(-30 408.8 280.8)"/>
<ellipse cx="556.8" cy="234.0" rx="9.3" ry="1.9" fill="#ffffff" opacity="0.46" transform="rotate(-30 556.8 234.0)"/>
<ellipse cx="568.0" cy="280.6" rx="4.6" ry="3.5" fill="#ffffff" opacity="0.39" transform="rotate(-30 568.0 280.6)"/>
<ellipse cx="436.8" cy="298.6" rx="6.0" ry="2.1" fill="#ffffff" opacity="0.33" transform="rotate(-30 436.8 298.6)"/>
<ellipse cx="399.8" cy="272.4" rx="5.5" ry="2.7" fill="#ffffff" opacity="0.45" transform="rotate(-30 399.8 272.4)"/>
<ellipse cx="479.7" cy="324.4" rx="6.9" ry="2.6" fill="#ffffff" opacity="0.65" transform="rotate(-30 479.7 324.4)"/>
<ellipse cx="420.2" cy="213.3" rx="9.5" ry="3.1" fill="#ffffff" opacity="0.40" transform="rotate(-30 420.2 213.3)"/>
<ellipse cx="421.8" cy="294.0" rx="9.6" ry="1.9" fill="#ffffff" opacity="0.68" transform="rotate(-30 421.8 294.0)"/>
<ellipse cx="574.1" cy="275.3" rx="6.5" ry="1.7" fill="#ffffff" opacity="0.32" transform="rotate(-30 574.1 275.3)"/>
<ellipse cx="591.8" cy="224.9" rx="8.2" ry="2.0" fill="#ffffff" opacity="0.63" transform="rotate(-30 591.8 224.9)"/>
<ellipse cx="511.2" cy="232.5" rx="5.1" ry="2.9" fill="#ffffff" opacity="0.33" transform="rotate(-30 511.2 232.5)"/>
<ellipse cx="430.2" cy="269.2" rx="9.1" ry="2.7" fill="#ffffff" opacity="0.41" transform="rotate(-30 430.2 269.2)"/>
<ellipse cx="581.8" cy="220.1" rx="4.1" ry="2.0" fill="#ffffff" opacity="0.48" transform="rotate(-30 581.8 220.1)"/>
<ellipse cx="393.3" cy="216.3" rx="6.2" ry="2.6" fill="#ffffff" opacity="0.35" transform="rotate(-30 393.3 216.3)"/>
<ellipse cx="459.7" cy="314.9" rx="9.9" ry="2.8" fill="#ffffff" opacity="0.58" transform="rotate(-30 459.7 314.9)"/>
<ellipse cx="508.6" cy="211.4" rx="4.2" ry="1.5" fill="#ffffff" opacity="0.66" transform="rotate(-30 508.6 211.4)"/>
<ellipse cx="534.2" cy="324.9" rx="4.1" ry="2.8" fill="#ffffff" opacity="0.49" transform="rotate(-30 534.2 324.9)"/>
<ellipse cx="540.7" cy="236.0" rx="10.0" ry="1.7" fill="#ffffff" opacity="0.52" transform="rotate(-30 540.7 236.0)"/>
<ellipse cx="542.1" cy="316.2" rx="8.4" ry="2.9" fill="#ffffff" opacity="0.62" transform="rotate(-30 542.1 316.2)"/>
<ellipse cx="581.3" cy="240.6" rx="8.1" ry="3.3" fill="#ffffff" opacity="0.65" transform="rotate(-30 581.3 240.6)"/>
<ellipse cx="471.8" cy="301.1" rx="9.2" ry="2.6" fill="#ffffff" opacity="0.55" transform="rotate(-30 471.8 301.1)"/>
<ellipse cx="464.1" cy="272.4" rx="7.7" ry="1.7" fill="#ffffff" opacity="0.56" transform="rotate(-30 464.1 272.4)"/>
<ellipse cx="598.5" cy="313.4" rx="8.4" ry="2.3" fill="#ffffff" opacity="0.59" transform="rotate(-30 598.5 313.4)"/>
<ellipse cx="507.8" cy="252.8" rx="9.0" ry="1.7" fill="#ffffff" opacity="0.60" transform="rotate(-30 507.8 252.8)"/>
<ellipse cx="386.6" cy="275.0" rx="6.9" ry="2.0" fill="#ffffff" opacity="0.58" transform="rotate(-30 386.6 275.0)"/>
<ellipse cx="489.4" cy="276.8" rx="9.5" ry="2.0" fill="#ffffff" opacity="0.30" transform="rotate(-30 489.4 276.8)"/>
<ellipse cx="446.2" cy="285.6" rx="5.2" ry="1.8" fill="#ffffff" opacity="0.66" transform="rotate(-30 446.2 285.6)"/>
<ellipse cx="525.2" cy="253.0" rx="9.4" ry="2.2" fill="#ffffff" opacity="0.57" transform="rotate(-30 525.2 253.0)"/>
<ellipse cx="423.7" cy="251.5" rx="8.8" ry="3.3" fill="#ffffff" opacity="0.65" transform="rotate(-30 423.7 251.5)"/>
<ellipse cx="464.6" cy="272.5" rx="5.9" ry="1.8" fill="#ffffff" opacity="0.50" transform="rotate(-30 464.6 272.5)"/>
<ellipse cx="564.2" cy="309.1" rx="8.3" ry="3.4" fill="#ffffff" opacity="0.41" transform="rotate(-30 564.2 309.1)"/>
<ellipse cx="417.2" cy="254.2" rx="5.7" ry="1.9" fill="#ffffff" opacity="0.47" transform="rotate(-30 417.2 254.2)"/>
<ellipse cx="517.7" cy="260.2" rx="5.9" ry="3.2" fill="#ffffff" opacity="0.69" transform="rotate(-30 517.7 260.2)"/>
<ellipse cx="479.5" cy="202.3" rx="4.2" ry="3.2" fill="#ffffff" opacity="0.32" transform="rotate(-30 479.5 202.3)"/>
<ellipse cx="535.9" cy="270.7" rx="5.9" ry="3.1" fill="#ffffff" opacity="0.31" transform="rotate(-30 535.9 270.7)"/>
<ellipse cx="409.9" cy="254.8" rx="4.1" ry="3.2" fill="#ffffff" opacity="0.39" transform="rotate(-30 409.9 254.8)"/>
<ellipse cx="411.0" cy="198.5" rx="7.8" ry="2.4" fill="#ffffff" opacity="0.55" transform="rotate(-30 411.0 198.5)"/>
<ellipse cx="524.1" cy="303.4" rx="9.8" ry="2.9" fill="#ffffff" opacity="0.38" transform="rotate(-30 524.1 303.4)"/>
<ellipse cx="484.5" cy="216.7" rx="4.1" ry="2.4" fill="#ffffff" opacity="0.59" transform="rotate(-30 484.5 216.7)"/>
<ellipse cx="419.4" cy="229.6" rx="6.1" ry="2.9" fill="#ffffff" opacity="0.51" transform="rotate(-30 419.4 229.6)"/>
<ellipse cx="515.2" cy="296.4" rx="6.4" ry="3.1" fill="#ffffff" opacity="0.66" transform="rotate(-30 515.2 296.4)"/>
<ellipse cx="538.9" cy="209.9" rx="6.7" ry="2.8" fill="#ffffff" opacity="0.66" transform="rotate(-30 538.9 209.9)"/>
<ellipse cx="462.9" cy="270.5" rx="9.3" ry="3.1" fill="#ffffff" opacity="0.68" transform="rotate(-30 462.9 270.5)"/>
<ellipse cx="482.0" cy="281.9" rx="5.2" ry="2.9" fill="#ffffff" opacity="0.63" transform="rotate(-30 482.0 281.9)"/>
<ellipse cx="521.2" cy="291.0" rx="5.3" ry="3.3" fill="#ffffff" opacity="0.69" transform="rotate(-30 521.2 291.0)"/>
<ellipse cx="595.0" cy="266.1" rx="8.7" ry="2.1" fill="#ffffff" opacity="0.66" transform="rotate(-30 595.0 266.1)"/>
<ellipse cx="568.3" cy="240.1" rx="4.5" ry="2.4" fill="#ffffff" opacity="0.52" transform="rotate(-30 568.3 240.1)"/>
<ellipse cx="549.0" cy="259.3" rx="4.2" ry="3.1" fill="#ffffff" opacity="0.33" transform="rotate(-30 549.0 259.3)"/>
<ellipse cx="556.0" cy="215.9" rx="6.0" ry="3.1" fill="#ffffff" opacity="0.36" transform="rotate(-30 556.0 215.9)"/>
<ellipse cx="412.7" cy="263.3" rx="8.3" ry="3.2" fill="#ffffff" opacity="0.58" transform="rotate(-30 412.7 263.3)"/>
<ellipse cx="588.1" cy="260.0" rx="9.7" ry="1.7" fill="#ffffff" opacity="0.39" transform="rotate(-30 588.1 260.0)"/>
<ellipse cx="495.9" cy="232.0" rx="8.4" ry="2.8" fill="#ffffff" opacity="0.51" transform="rotate(-30 495.9 232.0)"/>
<ellipse cx="565.6" cy="269.3" rx="5.9" ry="2.3" fill="#ffffff" opacity="0.64" transform="rotate(-30 565.6 269.3)"/>
<ellipse cx="578.1" cy="220.7" rx="9.1" ry="3.4" fill="#ffffff" opacity="0.51" transform="rotate(-30 578.1 220.7)"/>
<ellipse cx="506.1" cy="219.7" rx="7.2" ry="2.5" fill="#ffffff" opacity="0.54" transform="rotate(-30 506.1 219.7)"/>
<ellipse cx="493.5" cy="247.3" rx="8.8" ry="2.6" fill="#ffffff" opacity="0.50" transform="rotate(-30 493.5 247.3)"/>
<ellipse cx="532.0" cy="201.1" rx="7.2" ry="2.3" fill="#ffffff" opacity="0.68" transform="rotate(-30 532.0 201.1)"/>
<ellipse cx="583.2" cy="229.2" rx="6.8" ry="1.8" fill="#ffffff" opacity="0.47" transform="rotate(-30 583.2 229.2)"/>
<ellipse cx="559.5" cy="316.3" rx="6.9" ry="2.1" fill="#ffffff" opacity="0.38" transform="rotate(-30 559.5 316.3)"/>
<ellipse cx="515.9" cy="319.7" rx="4.8" ry="3.1" fill="#ffffff" opacity="0.31" transform="rotate(-30 515.9 319.7)"/>
<ellipse cx="422.7" cy="223.4" rx="8.1" ry="2.1" fill="#ffffff" opacity="0.44" transform="rotate(-30 422.7 223.4)"/>
<ellipse cx="516.3" cy="206.5" rx="8.4" ry="1.7" fill="#ffffff" opacity="0.50" transform="rotate(-30 516.3 206.5)"/>
<ellipse cx="435.1" cy="219.3" rx="7.2" ry="2.4" fill="#ffffff" opacity="0.45" transform="rotate(-30 435.1 219.3)"/>
<ellipse cx="470.9" cy="265.0" rx="5.0" ry="1.9" fill="#ffffff" opacity="0.55" transform="rotate(-30 470.9 265.0)"/>
<ellipse cx="520.5" cy="265.1" rx="9.1" ry="2.7" fill="#ffffff" opacity="0.64" transform="rotate(-30 520.5 265.1)"/>
<ellipse cx="431.2" cy="294.2" rx="8.9" ry="3.3" fill="#ffffff" opacity="0.43" transform="rotate(-30 431.2 294.2)"/>
<ellipse cx="449.3" cy="319.3" rx="5.3" ry="3.5" fill="#ffffff" opacity="0.66" transform="rotate(-30 449.3 319.3)"/>
<ellipse cx="409.5" cy="225.0" rx="8.4" ry="2.0" fill="#ffffff" opacity="0.34" transform="rotate(-30 409.5 225.0)"/>
<ellipse cx="563.1" cy="250.2" rx="8.7" ry="1.8" fill="#ffffff" opacity="0.46" transform="rotate(-30 563.1 250.2)"/>
<ellipse cx="530.7" cy="194.5" rx="5.2" ry="2.9" fill="#ffffff" opacity="0.66" transform="rotate(-30 530.7 194.5)"/>
<ellipse cx="593.0" cy="207.9" rx="7.0" ry="3.0" fill="#ffffff" opacity="0.50" transform="rotate(-30 593.0 207.9)"/>
<ellipse cx="530.9" cy="218.1" rx="4.4" ry="1.7" fill="#ffffff" opacity="0.31" transform="rotate(-30 530.9 218.1)"/>
<ellipse cx="501.4" cy="263.0" rx="7.4" ry="1.8" fill="#ffffff" opacity="0.37" transform="rotate(-30 501.4 263.0)"/>
<ellipse cx="424.9" cy="307.9" rx="9.9" ry="3.4" fill="#ffffff" opacity="0.34" transform="rotate(-30 424.9 307.9)"/>
<ellipse cx="481.7" cy="297.5" rx="6.0" ry="2.4" fill="#ffffff" opacity="0.51" transform="rotate(-30 481.7 297.5)"/>
<ellipse cx="474.6" cy="274.9" rx="4.1" ry="2.9" fill="#ffffff" opacity="0.64" transform="rotate(-30 474.6 274.9)"/>
<ellipse cx="419.9" cy="254.6" rx="8.4" ry="2.3" fill="#ffffff" opacity="0.38" transform="rotate(-30 419.9 254.6)"/>
<ellipse cx="416.3" cy="262.7" rx="4.1" ry="3.3" fill="#ffffff" opacity="0.62" transform="rotate(-30 416.3 262.7)"/>
<ellipse cx="535.0" cy="310.8" rx="7.8" ry="2.3" fill="#ffffff" opacity="0.54" transform="rotate(-30 535.0 310.8)"/>
<ellipse cx="490.9" cy="327.6" rx="8.8" ry="2.0" fill="#ffffff" opacity="0.66" transform="rotate(-30 490.9 327.6)"/>
<ellipse cx="543.8" cy="299.4" rx="8.9" ry="2.3" fill="#ffffff" opacity="0.66" transform="rotate(-30 543.8 299.4)"/>
<ellipse cx="573.6" cy="287.9" rx="8.6" ry="3.0" fill="#ffffff" opacity="0.46" transform="rotate(-30 573.6 287.9)"/>
<ellipse cx="539.0" cy="201.7" rx="6.1" ry="2.4" fill="#ffffff" opacity="0.30" transform="rotate(-30 539.0 201.7)"/>
<ellipse cx="458.2" cy="280.1" rx="7.7" ry="2.0" fill="#ffffff" opacity="0.68" transform="rotate(-30 458.2 280.1)"/>
<ellipse cx="526.5" cy="238.6" rx="8.0" ry="2.6" fill="#ffffff" opacity="0.51" transform="rotate(-30 526.5 238.6)"/>
<ellipse cx="465.7" cy="330.0" rx="7.9" ry="2.9" fill="#ffffff" opacity="0.60" transform="rotate(-30 465.7 330.0)"/>
<ellipse cx="595.6" cy="195.1" rx="7.7" ry="3.0" fill="#ffffff" opacity="0.40" transform="rotate(-30 595.6 195.1)"/>
<ellipse cx="468.3" cy="199.0" rx="5.2" ry="2.3" fill="#ffffff" opacity="0.34" transform="rotate(-30 468.3 199.0)"/>
<ellipse cx="435.2" cy="317.0" rx="7.3" ry="2.5" fill="#ffffff" opacity="0.69" transform="rotate(-30 435.2 317.0)"/>
<ellipse cx="505.0" cy="329.3" rx="7.8" ry="3.1" fill="#ffffff" opacity="0.33" transform="rotate(-30 505.0 329.3)"/>
<ellipse cx="511.5" cy="296.8" rx="4.3" ry="3.4" fill="#ffffff" opacity="0.36" transform="rotate(-30 511.5 296.8)"/>
<ellipse cx="483.8" cy="215.3" rx="7.0" ry="2.7" fill="#ffffff" opacity="0.32" transform="rotate(-30 483.8 215.3)"/>
<ellipse cx="588.0" cy="250.1" rx="7.2" ry="2.7" fill="#ffffff" opacity="0.45" transform="rotate(-30 588.0 250.1)"/>
<ellipse cx="442.9" cy="282.4" rx="7.4" ry="2.1" fill="#ffffff" opacity="0.59" transform="rotate(-30 442.9 282.4)"/>
<ellipse cx="445.1" cy="193.9" rx="5.5" ry="1.6" fill="#ffffff" opacity="0.36" transform="rotate(-30 445.1 193.9)"/>
<ellipse cx="546.0" cy="245.8" rx="9.4" ry="3.0" fill="#ffffff" opacity="0.32" transform="rotate(-30 546.0 245.8)"/>
<ellipse cx="597.5" cy="322.3" rx="4.4" ry="3.3" fill="#ffffff" opacity="0.47" transform="rotate(-30 597.5 322.3)"/>
<ellipse cx="485.1" cy="326.3" rx="5.5" ry="2.5" fill="#ffffff" opacity="0.67" transform="rotate(-30 485.1 326.3)"/>
<ellipse cx="539.0" cy="256.6" rx="9.9" ry="3.1" fill="#ffffff" opacity="0.54" transform="rotate(-30 539.0 256.6)"/>
<ellipse cx="405.3" cy="278.1" rx="6.7" ry="1.9" fill="#ffffff" opacity="0.32" transform="rotate(-30 405.3 278.1)"/>
<ellipse cx="496.2" cy="209.2" rx="6.7" ry="2.8" fill="#ffffff" opacity="0.48" transform="rotate(-30 496.2 209.2)"/>
<ellipse cx="437.7" cy="272.3" rx="6.5" ry="3.1" fill="#ffffff" opacity="0.51" transform="rotate(-30 437.7 272.3)"/>
<ellipse cx="599.5" cy="323.5" rx="8.4" ry="2.0" fill="#ffffff" opacity="0.35" transform="rotate(-30 599.5 323.5)"/>
<ellipse cx="576.4" cy="300.2" rx="7.7" ry="2.2" fill="#ffffff" opacity="0.41" transform="rotate(-30 576.4 300.2)"/>
<ellipse cx="530.7" cy="270.0" rx="7.6" ry="2.8" fill="#ffffff" opacity="0.60" transform="rotate(-30 530.7 270.0)"/>
<ellipse cx="421.8" cy="226.4" rx="9.9" ry="3.3" fill="#ffffff" opacity="0.65" transform="rotate(-30 421.8 226.4)"/>
<ellipse cx="388.7" cy="200.4" rx="5.6" ry="2.4" fill="#ffffff" opacity="0.55" transform="rotate(-30 388.7 200.4)"/>
<ellipse cx="402.5" cy="266.7" rx="4.4" ry="1.7" fill="#ffffff" opacity="0.57" transform="rotate(-30 402.5 266.7)"/>
<ellipse cx="501.1" cy="279.1" rx="6.2" ry="2.5" fill="#ffffff" opacity="0.38" transform="rotate(-30 501.1 279.1)"/>
<ellipse cx="455.6" cy="294.8" rx="9.0" ry="1.6" fill="#ffffff" opacity="0.35" transform="rotate(-30 455.6 294.8)"/>
<ellipse cx="558.0" cy="278.1" rx="8.6" ry="1.9" fill="#ffffff" opacity="0.47" transform="rotate(-30 558.0 278.1)"/>
<ellipse cx="436.8" cy="303.8" rx="6.2" ry="2.8" fill="#ffffff" opacity="0.70" transform="rotate(-30 436.8 303.8)"/>
<ellipse cx="451.6" cy="267.7" rx="8.5" ry="3.3" fill="#ffffff" opacity="0.47" transform="rotate(-30 451.6 267.7)"/>
<ellipse cx="461.2" cy="205.4" rx="9.3" ry="1.7" fill="#ffffff" opacity="0.33" transform="rotate(-30 461.2 205.4)"/>
<ellipse cx="504.1" cy="258.9" rx="8.1" ry="2.1" fill="#ffffff" opacity="0.61" transform="rotate(-30 504.1 258.9)"/>
<ellipse cx="396.7" cy="221.4" rx="8.0" ry="1.7" fill="#ffffff" opacity="0.42" transform="rotate(-30 396.7 221.4)"/>
<ellipse cx="539.5" cy="287.8" rx="5.7" ry="1.8" fill="#ffffff" opacity="0.44" transform="rotate(-30 539.5 287.8)"/>
<ellipse cx="539.7" cy="242.6" rx="4.7" ry="2.9" fill="#ffffff" opacity="0.53" transform="rotate(-30 539.7 242.6)"/>
<ellipse cx="582.1" cy="321.7" rx="9.5" ry="2.4" fill="#ffffff" opacity="0.62" transform="rotate(-30 582.1 321.7)"/>
<ellipse cx="447.0" cy="235.8" rx="6.4" ry="3.4" fill="#ffffff" opacity="0.66" transform="rotate(-30 447.0 235.8)"/>
<ellipse cx="434.6" cy="241.9" rx="6.2" ry="2.2" fill="#ffffff" opacity="0.46" transform="rotate(-30 434.6 241.9)"/>
<ellipse cx="465.3" cy="218.9" rx="7.4" ry="3.1" fill="#ffffff" opacity="0.52" transform="rotate(-30 465.3 218.9)"/>
<ellipse cx="564.0" cy="269.7" rx="5.1" ry="3.0" fill="#ffffff" opacity="0.65" transform="rotate(-30 564.0 269.7)"/>
<ellipse cx="441.9" cy="195.1" rx="7.1" ry="2.6" fill="#ffffff" opacity="0.53" transform="rotate(-30 441.9 195.1)"/>
<ellipse cx="592.6" cy="281.9" rx="8.8" ry="1.6" fill="#ffffff" opacity="0.52" transform="rotate(-30 592.6 281.9)"/>
<ellipse cx="553.4" cy="203.6" rx="4.5" ry="3.0" fill="#ffffff" opacity="0.66" transform="rotate(-30 553.4 203.6)"/>
<ellipse cx="398.6" cy="279.5" rx="4.9" ry="3.0" fill="#ffffff" opacity="0.56" transform="rotate(-30 398.6 279.5)"/>
<ellipse cx="434.0" cy="222.4" rx="8.6" ry="2.5" fill="#ffffff" opacity="0.61" transform="rotate(-30 434.0 222.4)"/>
<ellipse cx="466.8" cy="238.6" rx="9.8" ry="2.8" fill="#ffffff" opacity="0.50" transform="rotate(-30 466.8 238.6)"/>
<ellipse cx="498.2" cy="291.5" rx="8.2" ry="3.3" fill="#ffffff" opacity="0.46" transform="rotate(-30 498.2 291.5)"/>
<ellipse cx="561.8" cy="284.0" rx="9.1" ry="3.1" fill="#ffffff" opacity="0.63" transform="rotate(-30 561.8 284.0)"/>
<ellipse cx="575.5" cy="324.2" rx="7.8" ry="2.5" fill="#ffffff" opacity="0.58" transform="rotate(-30 575.5 324.2)"/>
<ellipse cx="556.5" cy="250.2" rx="6.5" ry="1.8" fill="#ffffff" opacity="0.60" transform="rotate(-30 556.5 250.2)"/>
<ellipse cx="598.0" cy="243.8" rx="5.0" ry="1.9" fill="#ffffff" opacity="0.47" transform="rotate(-30 598.0 243.8)"/>
<ellipse cx="444.2" cy="325.8" rx="4.4" ry="2.1" fill="#ffffff" opacity="0.35" transform="rotate(-30 444.2 325.8)"/>
<ellipse cx="522.6" cy="299.1" rx="5.1" ry="1.6" fill="#ffffff" opacity="0.48" transform="rotate(-30 522.6 299.1)"/>
<ellipse cx="508.5" cy="317.5" rx="4.2" ry="1.7" fill="#ffffff" opacity="0.37" transform="rotate(-30 508.5 317.5)"/>
<ellipse cx="427.8" cy="224.5" rx="8.3" ry="2.7" fill="#ffffff" opacity="0.39" transform="rotate(-30 427.8 224.5)"/>
<ellipse cx="420.7" cy="230.8" rx="5.0" ry="3.0" fill="#ffffff" opacity="0.42" transform="rotate(-30 420.7 230.8)"/>
<ellipse cx="500.6" cy="304.8" rx="6.9" ry="2.0" fill="#ffffff" opacity="0.65" transform="rotate(-30 500.6 304.8)"/>
<ellipse cx="581.1" cy="239.2" rx="7.3" ry="3.4" fill="#ffffff" opacity="0.49" transform="rotate(-30 581.1 239.2)"/>
<ellipse cx="428.6" cy="198.9" rx="9.7" ry="3.1" fill="#ffffff" opacity="0.45" transform="rotate(-30 428.6 198.9)"/>
<ellipse cx="496.1" cy="263.2" rx="5.6" ry="3.5" fill="#ffffff" opacity="0.56" transform="rotate(-30 496.1 263.2)"/>
<ellipse cx="432.3" cy="193.5" rx="6.8" ry="2.2" fill="#ffffff" opacity="0.62" transform="rotate(-30 432.3 193.5)"/>
<ellipse cx="536.9" cy="275.6" rx="4.9" ry="1.8" fill="#ffffff" opacity="0.43" transform="rotate(-30 536.9 275.6)"/>
<ellipse cx="437.1" cy="312.0" rx="7.1" ry="2.8" fill="#ffffff" opacity="0.70" transform="rotate(-30 437.1 312.0)"/>
<ellipse cx="438.6" cy="265.8" rx="4.9" ry="3.0" fill="#ffffff" opacity="0.30" transform="rotate(-30 438.6 265.8)"/>
<ellipse cx="560.7" cy="308.8" rx="8.9" ry="1.7" fill="#ffffff" opacity="0.41" transform="rotate(-30 560.7 308.8)"/>
<ellipse cx="537.6" cy="205.4" rx="6.9" ry="2.4" fill="#ffffff" opacity="0.68" transform="rotate(-30 537.6 205.4)"/>
<ellipse cx="509.1" cy="310.3" rx="5.8" ry="3.1" fill="#ffffff" opacity="0.47" transform="rotate(-30 509.1 310.3)"/>
<ellipse cx="581.7" cy="204.6" rx="9.0" ry="1.9" fill="#ffffff" opacity="0.52" transform="rotate(-30 581.7 204.6)"/>
<ellipse cx="495.6" cy="213.7" rx="9.0" ry="2.1" fill="#ffffff" opacity="0.42" transform="rotate(-30 495.6 213.7)"/>
<ellipse cx="396.7" cy="234.2" rx="6.8" ry="2.9" fill="#ffffff" opacity="0.44" transform="rotate(-30 396.7 234.2)"/>
<ellipse cx="531.2" cy="206.6" rx="6.4" ry="2.4" fill="#ffffff" opacity="0.69" transform="rotate(-30 531.2 206.6)"/>
<ellipse cx="562.5" cy="282.2" rx="4.1" ry="2.3" fill="#ffffff" opacity="0.58" transform="rotate(-30 562.5 282.2)"/>
<ellipse cx="432.2" cy="269.8" rx="6.7" ry="1.5" fill="#ffffff" opacity="0.70" transform="rotate(-30 432.2 269.8)"/>
<ellipse cx="555.9" cy="220.5" rx="7.7" ry="2.1" fill="#ffffff" opacity="0.45" transform="rotate(-30 555.9 220.5)"/>
<ellipse cx="498.7" cy="233.2" rx="6.0" ry="2.3" fill="#ffffff" opacity="0.57" transform="rotate(-30 498.7 233.2)"/>
<ellipse cx="436.4" cy="219.6" rx="8.4" ry="2.2" fill="#ffffff" opacity="0.68" transform="rotate(-30 436.4 219.6)"/>
<ellipse cx="503.8" cy="291.9" rx="6.0" ry="3.2" fill="#ffffff" opacity="0.34" transform="rotate(-30 503.8 291.9)"/>
<ellipse cx="411.0" cy="205.0" rx="8.1" ry="2.9" fill="#ffffff" opacity="0.37" transform="rotate(-30 411.0 205.0)"/>
<ellipse cx="468.5" cy="307.5" rx="7.6" ry="1.7" fill="#ffffff" opacity="0.39" transform="rotate(-30 468.5 307.5)"/>
<ellipse cx="414.6" cy="209.1" rx="6.4" ry="1.6" fill="#ffffff" opacity="0.67" transform="rotate(-30 414.6 209.1)"/>
<ellipse cx="473.9" cy="262.6" rx="7.9" ry="3.0" fill="#ffffff" opacity="0.63" transform="rotate(-30 473.9 262.6)"/>
<ellipse cx="464.9" cy="237.7" rx="6.5" ry="1.5" fill="#ffffff" opacity="0.46" transform="rotate(-30 464.9 237.7)"/>
<ellipse cx="534.0" cy="327.5" rx="8.7" ry="2.8" fill="#ffffff" opacity="0.54" transform="rotate(-30 534.0 327.5)"/>
<ellipse cx="384.1" cy="237.7" rx="6.1" ry="2.8" fill="#ffffff" opacity="0.34" transform="rotate(-30 384.1 237.7)"/>
<ellipse cx="463.1" cy="262.3" rx="8.7" ry="3.2" fill="#ffffff" opacity="0.54" transform="rotate(-30 463.1 262.3)"/>
<ellipse cx="414.8" cy="297.8" rx="9.4" ry="2.6" fill="#ffffff" opacity="0.44" transform="rotate(-30 414.8 297.8)"/>
<ellipse cx="490.1" cy="211.6" rx="8.3" ry="3.5" fill="#ffffff" opacity="0.51" transform="rotate(-30 490.1 211.6)"/>
<ellipse cx="537.4" cy="307.3" rx="5.2" ry="3.4" fill="#ffffff" opacity="0.55" transform="rotate(-30 537.4 307.3)"/>
<ellipse cx="423.5" cy="203.5" rx="5.5" ry="2.7" fill="#ffffff" opacity="0.58" transform="rotate(-30 423.5 203.5)"/>
<ellipse cx="452.4" cy="320.2" rx="6.2" ry="2.4" fill="#ffffff" opacity="0.35" transform="rotate(-30 452.4 320.2)"/>
<ellipse cx="594.2" cy="210.7" rx="9.4" ry="2.6" fill="#ffffff" opacity="0.52" transform="rotate(-30 594.2 210.7)"/>
<ellipse cx="503.3" cy="228.5" rx="9.5" ry="3.5" fill="#ffffff" opacity="0.63" transform="rotate(-30 503.3 228.5)"/>
<ellipse cx="512.3" cy="208.9" rx="8.9" ry="2.1" fill="#ffffff" opacity="0.66" transform="rotate(-30 512.3 208.9)"/>
<ellipse cx="433.0" cy="271.2" rx="9.0" ry="1.9" fill="#ffffff" opacity="0.52" transform="rotate(-30 433.0 271.2)"/>
<ellipse cx="396.8" cy="196.4" rx="5.1" ry="3.5" fill="#ffffff" opacity="0.68" transform="rotate(-30 396.8 196.4)"/>
<ellipse cx="524.8" cy="234.5" rx="8.0" ry="3.0" fill="#ffffff" opacity="0.45" transform="rotate(-30 524.8 234.5)"/>
<ellipse cx="510.2" cy="302.9" rx="4.1" ry="1.9" fill="#ffffff" opacity="0.49" transform="rotate(-30 510.2 302.9)"/>
<rect x="327" y="330" width="490" height="70" fill="url(#haze)"/>
<rect x="327" y="398" width="490" height="130" fill="url(#sea)" />
<rect x="327" y="396" width="490" height="34" fill="url(#haze2)"/>
<rect x="411.5" y="441.8" width="4.8" height="1" fill="#9ab4d0" opacity="0.35"/>
<rect x="418.2" y="455.5" width="3.3" height="1" fill="#9ab4d0" opacity="0.35"/>
<rect x="505.0" y="436.2" width="5.2" height="1" fill="#9ab4d0" opacity="0.35"/>
<rect x="388.3" y="471.1" width="2.7" height="1" fill="#9ab4d0" opacity="0.35"/>
<rect x="591.1" y="463.8" width="4.3" height="1" fill="#9ab4d0" opacity="0.35"/>
<rect x="470.5" y="466.3" width="5.4" height="1" fill="#9ab4d0" opacity="0.35"/>
<rect x="546.8" y="479.4" width="4.4" height="1" fill="#9ab4d0" opacity="0.35"/>
<rect x="598.8" y="488.3" width="6.3" height="1" fill="#9ab4d0" opacity="0.35"/>
<rect x="470.0" y="446.7" width="4.8" height="1" fill="#9ab4d0" opacity="0.35"/>
<rect x="579.2" y="456.2" width="4.6" height="1" fill="#9ab4d0" opacity="0.35"/>
<rect x="475.1" y="495.1" width="3.6" height="1" fill="#9ab4d0" opacity="0.35"/>
<rect x="392.0" y="476.7" width="6.5" height="1" fill="#9ab4d0" opacity="0.35"/>
<rect x="541.0" y="463.5" width="5.8" height="1" fill="#9ab4d0" opacity="0.35"/>
<rect x="447.0" y="463.1" width="2.3" height="1" fill="#9ab4d0" opacity="0.35"/>
<rect x="407.4" y="448.0" width="4.5" height="1" fill="#9ab4d0" opacity="0.35"/>
<rect x="467.3" y="407.4" width="5.5" height="1" fill="#9ab4d0" opacity="0.35"/>
<rect x="495.8" y="426.6" width="3.5" height="1" fill="#9ab4d0" opacity="0.35"/>
<rect x="467.0" y="426.3" width="2.3" height="1" fill="#9ab4d0" opacity="0.35"/>
<rect x="580.5" y="501.5" width="5.3" height="1" fill="#9ab4d0" opacity="0.35"/>
<rect x="570.6" y="445.4" width="6.0" height="1" fill="#9ab4d0" opacity="0.35"/>
<rect x="428.8" y="478.9" width="4.8" height="1" fill="#9ab4d0" opacity="0.35"/>
<rect x="578.8" y="412.2" width="6.0" height="1" fill="#9ab4d0" opacity="0.35"/>
<rect x="407.2" y="457.4" width="6.8" height="1" fill="#9ab4d0" opacity="0.35"/>
<rect x="380.1" y="427.1" width="3.5" height="1" fill="#9ab4d0" opacity="0.35"/>
<rect x="451.4" y="408.5" width="6.5" height="1" fill="#9ab4d0" opacity="0.35"/>
<rect x="559.4" y="442.9" width="3.8" height="1" fill="#9ab4d0" opacity="0.35"/>
<rect x="508.8" y="406.7" width="2.2" height="1" fill="#9ab4d0" opacity="0.35"/>
<rect x="577.7" y="433.7" width="4.5" height="1" fill="#9ab4d0" opacity="0.35"/>
<rect x="585.5" y="502.7" width="4.4" height="1" fill="#9ab4d0" opacity="0.35"/>
<rect x="425.4" y="432.4" width="6.6" height="1" fill="#9ab4d0" opacity="0.35"/>
<rect x="577.3" y="422.1" width="6.2" height="1" fill="#9ab4d0" opacity="0.35"/>
<rect x="457.9" y="450.7" width="2.9" height="1" fill="#9ab4d0" opacity="0.35"/>
<rect x="573.5" y="504.5" width="3.0" height="1" fill="#9ab4d0" opacity="0.35"/>
<rect x="519.1" y="421.7" width="6.4" height="1" fill="#9ab4d0" opacity="0.35"/>
<rect x="391.0" y="412.9" width="5.6" height="1" fill="#9ab4d0" opacity="0.35"/>
<rect x="448.9" y="494.7" width="6.3" height="1" fill="#9ab4d0" opacity="0.35"/>
<rect x="536.9" y="415.9" width="5.5" height="1" fill="#9ab4d0" opacity="0.35"/>
<rect x="586.3" y="447.9" width="2.4" height="1" fill="#9ab4d0" opacity="0.35"/>
<rect x="429.1" y="433.6" width="5.6" height="1" fill="#9ab4d0" opacity="0.35"/>
<rect x="423.2" y="420.6" width="3.2" height="1" fill="#9ab4d0" opacity="0.35"/>
<rect x="526.2" y="483.4" width="3.9" height="1" fill="#9ab4d0" opacity="0.35"/>
<rect x="525.6" y="493.1" width="4.9" height="1" fill="#9ab4d0" opacity="0.35"/>
<rect x="430.4" y="433.0" width="6.6" height="1" fill="#9ab4d0" opacity="0.35"/>
<rect x="526.7" y="430.5" width="5.2" height="1" fill="#9ab4d0" opacity="0.35"/>
<rect x="399.8" y="503.3" width="4.2" height="1" fill="#9ab4d0" opacity="0.35"/>
<rect x="496.2" y="456.7" width="2.2" height="1" fill="#9ab4d0" opacity="0.35"/>
<rect x="511.9" y="431.3" width="3.3" height="1" fill="#9ab4d0" opacity="0.35"/>
<rect x="556.7" y="411.0" width="3.4" height="1" fill="#9ab4d0" opacity="0.35"/>
<rect x="546.2" y="427.3" width="3.4" height="1" fill="#9ab4d0" opacity="0.35"/>
<rect x="500.6" y="421.2" width="6.5" height="1" fill="#9ab4d0" opacity="0.35"/>
<rect x="597.3" y="405.5" width="4.3" height="1" fill="#9ab4d0" opacity="0.35"/>
<rect x="545.1" y="441.6" width="6.6" height="1" fill="#9ab4d0" opacity="0.35"/>
<rect x="490.0" y="420.5" width="4.8" height="1" fill="#9ab4d0" opacity="0.35"/>
<rect x="521.9" y="439.0" width="5.3" height="1" fill="#9ab4d0" opacity="0.35"/>
<rect x="552.3" y="455.2" width="4.5" height="1" fill="#9ab4d0" opacity="0.35"/>
<rect x="566.0" y="472.5" width="4.6" height="1" fill="#9ab4d0" opacity="0.35"/>
<rect x="589.3" y="419.9" width="5.9" height="1" fill="#9ab4d0" opacity="0.35"/>
<rect x="416.3" y="464.6" width="3.2" height="1" fill="#9ab4d0" opacity="0.35"/>
<rect x="476.9" y="481.6" width="5.9" height="1" fill="#9ab4d0" opacity="0.35"/>
<rect x="554.0" y="426.3" width="4.4" height="1" fill="#9ab4d0" opacity="0.35"/>
<g clip-path="url(#tower)">
<rect x="392" y="222" width="208" height="176" fill="url(#towerg)" />
<rect x="438" y="324" width="6" height="5" fill="#283440" opacity="0.45"/>
<rect x="399" y="327" width="8" height="3" fill="#283440" opacity="0.45"/>
<rect x="511" y="376" width="4" height="5" fill="#283440" opacity="0.45"/>
<rect x="424" y="225" width="6" height="6" fill="#283440" opacity="0.45"/>
<rect x="497" y="349" width="3" height="3" fill="#283440" opacity="0.45"/>
<rect x="416" y="253" width="8" height="4" fill="#283440" opacity="0.45"/>
<rect x="522" y="232" width="6" height="3" fill="#283440" opacity="0.45"/>
<rect x="537" y="366" width="8" height="5" fill="#283440" opacity="0.45"/>
<rect x="551" y="310" width="8" height="4" fill="#283440" opacity="0.45"/>
<rect x="471" y="266" width="6" height="6" fill="#283440" opacity="0.45"/>
<rect x="405" y="294" width="5" height="4" fill="#283440" opacity="0.45"/>
<rect x="538" y="390" width="4" height="6" fill="#283440" opacity="0.45"/>
<rect x="549" y="328" width="4" height="4" fill="#283440" opacity="0.45"/>
<rect x="547" y="314" width="3" height="3" fill="#283440" opacity="0.45"/>
<rect x="442" y="379" width="4" height="3" fill="#283440" opacity="0.45"/>
<rect x="474" y="274" width="6" height="3" fill="#283440" opacity="0.45"/>
<rect x="594" y="342" width="8" height="4" fill="#283440" opacity="0.45"/>
<rect x="454" y="243" width="4" height="6" fill="#283440" opacity="0.45"/>
<rect x="488" y="386" width="5" height="5" fill="#283440" opacity="0.45"/>
<rect x="462" y="395" width="7" height="4" fill="#283440" opacity="0.45"/>
<rect x="400" y="293" width="8" height="3" fill="#283440" opacity="0.45"/>
<rect x="545" y="322" width="7" height="4" fill="#283440" opacity="0.45"/>
<rect x="488" y="291" width="4" height="6" fill="#283440" opacity="0.45"/>
<rect x="471" y="231" width="6" height="5" fill="#283440" opacity="0.45"/>
<rect x="443" y="362" width="4" height="6" fill="#283440" opacity="0.45"/>
<rect x="434" y="260" width="6" height="5" fill="#283440" opacity="0.45"/>
<rect x="490" y="308" width="8" height="4" fill="#283440" opacity="0.45"/>
<rect x="571" y="258" width="6" height="6" fill="#283440" opacity="0.45"/>
<rect x="407" y="344" width="5" height="5" fill="#283440" opacity="0.45"/>
<rect x="521" y="313" width="8" height="5" fill="#283440" opacity="0.45"/>
<rect x="499" y="322" width="8" height="4" fill="#283440" opacity="0.45"/>
<rect x="448" y="286" width="4" height="5" fill="#283440" opacity="0.45"/>
<rect x="421" y="264" width="3" height="3" fill="#283440" opacity="0.45"/>
<rect x="600" y="370" width="6" height="3" fill="#283440" opacity="0.45"/>
<rect x="570" y="289" width="5" height="3" fill="#283440" opacity="0.45"/>
<rect x="455" y="329" width="6" height="3" fill="#283440" opacity="0.45"/>
<rect x="431" y="312" width="4" height="3" fill="#283440" opacity="0.45"/>
<rect x="435" y="294" width="6" height="4" fill="#283440" opacity="0.45"/>
<rect x="500" y="318" width="5" height="6" fill="#283440" opacity="0.45"/>
<rect x="531" y="248" width="4" height="5" fill="#283440" opacity="0.45"/>
<rect x="503" y="301" width="4" height="6" fill="#283440" opacity="0.45"/>
<rect x="500" y="285" width="3" height="5" fill="#283440" opacity="0.45"/>
<rect x="469" y="330" width="4" height="3" fill="#283440" opacity="0.45"/>
<rect x="568" y="353" width="6" height="3" fill="#283440" opacity="0.45"/>
<rect x="560" y="394" width="5" height="3" fill="#283440" opacity="0.45"/>
<rect x="583" y="260" width="8" height="5" fill="#283440" opacity="0.45"/>
<rect x="531" y="390" width="5" height="4" fill="#283440" opacity="0.45"/>
<rect x="555" y="268" width="6" height="3" fill="#283440" opacity="0.45"/>
<rect x="474" y="233" width="6" height="5" fill="#283440" opacity="0.45"/>
<rect x="451" y="346" width="4" height="4" fill="#283440" opacity="0.45"/>
<rect x="585" y="258" width="4" height="5" fill="#283440" opacity="0.45"/>
<rect x="530" y="264" width="3" height="5" fill="#283440" opacity="0.45"/>
<rect x="581" y="364" width="6" height="5" fill="#283440" opacity="0.45"/>
<rect x="538" y="319" width="8" height="3" fill="#283440" opacity="0.45"/>
<rect x="580" y="243" width="3" height="6" fill="#283440" opacity="0.45"/>
<rect x="449" y="288" width="7" height="5" fill="#283440" opacity="0.45"/>
<rect x="490" y="279" width="5" height="3" fill="#283440" opacity="0.45"/>
<rect x="397" y="283" width="5" height="5" fill="#283440" opacity="0.45"/>
<rect x="446" y="340" width="4" height="6" fill="#283440" opacity="0.45"/>
<rect x="472" y="282" width="5" height="3" fill="#283440" opacity="0.45"/>
<rect x="512" y="388" width="3" height="3" fill="#283440" opacity="0.45"/>
<rect x="521" y="294" width="6" height="3" fill="#283440" opacity="0.45"/>
<rect x="449" y="368" width="6" height="6" fill="#283440" opacity="0.45"/>
<rect x="593" y="290" width="4" height="5" fill="#283440" opacity="0.45"/>
<rect x="456" y="285" width="3" height="4" fill="#283440" opacity="0.45"/>
<rect x="518" y="269" width="5" height="4" fill="#283440" opacity="0.45"/>
<rect x="441" y="222" width="7" height="6" fill="#283440" opacity="0.45"/>
<rect x="393" y="318" width="8" height="3" fill="#283440" opacity="0.45"/>
<rect x="522" y="321" width="8" height="5" fill="#283440" opacity="0.45"/>
<rect x="447" y="240" width="3" height="5" fill="#283440" opacity="0.45"/>
<rect x="560" y="259" width="6" height="4" fill="#283440" opacity="0.45"/>
<rect x="592" y="367" width="4" height="5" fill="#283440" opacity="0.45"/>
<rect x="521" y="308" width="7" height="5" fill="#283440" opacity="0.45"/>
<rect x="469" y="272" width="8" height="6" fill="#283440" opacity="0.45"/>
<rect x="441" y="266" width="5" height="4" fill="#283440" opacity="0.45"/>
<rect x="583" y="352" width="3" height="3" fill="#283440" opacity="0.45"/>
<rect x="562" y="378" width="5" height="3" fill="#283440" opacity="0.45"/>
<rect x="569" y="312" width="8" height="6" fill="#283440" opacity="0.45"/>
<rect x="400" y="331" width="6" height="6" fill="#283440" opacity="0.45"/>
<rect x="403" y="267" width="7" height="6" fill="#283440" opacity="0.45"/>
<rect x="445" y="334" width="5" height="5" fill="#283440" opacity="0.45"/>
<rect x="430" y="373" width="4" height="4" fill="#283440" opacity="0.45"/>
<rect x="510" y="296" width="8" height="4" fill="#283440" opacity="0.45"/>
<rect x="522" y="368" width="4" height="4" fill="#283440" opacity="0.45"/>
<rect x="434" y="331" width="5" height="4" fill="#283440" opacity="0.45"/>
<rect x="528" y="393" width="6" height="4" fill="#283440" opacity="0.45"/>
<rect x="448" y="270" width="5" height="6" fill="#283440" opacity="0.45"/>
<rect x="472" y="342" width="4" height="3" fill="#283440" opacity="0.45"/>
<rect x="425" y="398" width="3" height="4" fill="#283440" opacity="0.45"/>
<rect x="451" y="351" width="3" height="6" fill="#283440" opacity="0.45"/>
<rect x="461" y="227" width="7" height="6" fill="#283440" opacity="0.45"/>
<rect x="428" y="234" width="6" height="5" fill="#283440" opacity="0.45"/>
<rect x="439" y="349" width="6" height="4" fill="#283440" opacity="0.45"/>
<rect x="596" y="291" width="8" height="4" fill="#283440" opacity="0.45"/>
<rect x="506" y="363" width="4" height="6" fill="#283440" opacity="0.45"/>
<rect x="428" y="241" width="5" height="6" fill="#283440" opacity="0.45"/>
<rect x="482" y="249" width="3" height="5" fill="#283440" opacity="0.45"/>
<rect x="510" y="247" width="8" height="6" fill="#283440" opacity="0.45"/>
<rect x="449" y="262" width="6" height="4" fill="#283440" opacity="0.45"/>
<rect x="468" y="268" width="3" height="4" fill="#283440" opacity="0.45"/>
<rect x="405" y="379" width="5" height="3" fill="#283440" opacity="0.45"/>
<rect x="393" y="281" width="4" height="4" fill="#283440" opacity="0.45"/>
<rect x="598" y="294" width="3" height="6" fill="#283440" opacity="0.45"/>
<rect x="465" y="321" width="7" height="3" fill="#283440" opacity="0.45"/>
<rect x="437" y="331" width="7" height="5" fill="#283440" opacity="0.45"/>
<rect x="450" y="387" width="4" height="6" fill="#283440" opacity="0.45"/>
<rect x="511" y="388" width="3" height="4" fill="#283440" opacity="0.45"/>
<rect x="570" y="388" width="7" height="3" fill="#283440" opacity="0.45"/>
<rect x="532" y="270" width="3" height="5" fill="#283440" opacity="0.45"/>
<rect x="405" y="304" width="4" height="3" fill="#283440" opacity="0.45"/>
<rect x="592" y="224" width="7" height="5" fill="#283440" opacity="0.45"/>
<rect x="561" y="361" width="8" height="6" fill="#283440" opacity="0.45"/>
<rect x="475" y="363" width="8" height="3" fill="#283440" opacity="0.45"/>
<rect x="587" y="307" width="8" height="6" fill="#283440" opacity="0.45"/>
<rect x="444" y="382" width="3" height="3" fill="#283440" opacity="0.45"/>
<rect x="512" y="262" width="6" height="5" fill="#283440" opacity="0.45"/>
<rect x="497" y="271" width="5" height="6" fill="#283440" opacity="0.45"/>
<rect x="466" y="271" width="8" height="5" fill="#283440" opacity="0.45"/>
<rect x="516" y="269" width="4" height="4" fill="#283440" opacity="0.45"/>
<rect x="436" y="353" width="7" height="5" fill="#283440" opacity="0.45"/>
<rect x="533" y="223.35458858828957" width="14" height="1.2" fill="#e8eef4" opacity="0.75"/>
<rect x="424" y="223.74559845552352" width="19" height="1.2" fill="#e8eef4" opacity="0.75"/>
<rect x="482" y="223.01888268291543" width="40" height="1.2" fill="#e8eef4" opacity="0.75"/>
<rect x="403" y="223.18947604777662" width="21" height="1.2" fill="#e8eef4" opacity="0.75"/>
<rect x="396" y="228.349125285758" width="12" height="1.2" fill="#e8eef4" opacity="0.75"/>
<rect x="549" y="228.21671683458675" width="28" height="1.2" fill="#e8eef4" opacity="0.75"/>
<rect x="481" y="229.92533144263467" width="22" height="1.2" fill="#e8eef4" opacity="0.75"/>
<rect x="496" y="229.56083160200782" width="19" height="1.2" fill="#e8eef4" opacity="0.75"/>
<rect x="561" y="233.1398996960702" width="32" height="1.2" fill="#e8eef4" opacity="0.75"/>
<rect x="589" y="233.64445107998645" width="19" height="1.2" fill="#e8eef4" opacity="0.75"/>
<rect x="554" y="234.05017517491385" width="8" height="1.2" fill="#e8eef4" opacity="0.75"/>
<rect x="423" y="234.26945262644435" width="32" height="1.2" fill="#e8eef4" opacity="0.75"/>
<rect x="582" y="238.11060357410145" width="30" height="1.2" fill="#e8eef4" opacity="0.75"/>
<rect x="577" y="239.71271518937513" width="35" height="1.2" fill="#e8eef4" opacity="0.75"/>
<rect x="497" y="239.13547062761802" width="15" height="1.2" fill="#e8eef4" opacity="0.75"/>
<rect x="417" y="239.4773499174392" width="37" height="1.2" fill="#e8eef4" opacity="0.75"/>
<rect x="483" y="243.93448819844974" width="32" height="1.2" fill="#e8eef4" opacity="0.75"/>
<rect x="496" y="243.7509123027424" width="10" height="1.2" fill="#e8eef4" opacity="0.75"/>
<rect x="499" y="243.06441550743898" width="36" height="1.2" fill="#e8eef4" opacity="0.75"/>
<rect x="485" y="244.18673043021798" width="11" height="1.2" fill="#e8eef4" opacity="0.75"/>
<rect x="586" y="248.3038583626892" width="37" height="1.2" fill="#e8eef4" opacity="0.75"/>
<rect x="460" y="248.51196337845911" width="28" height="1.2" fill="#e8eef4" opacity="0.75"/>
<rect x="431" y="248.93788298948732" width="33" height="1.2" fill="#e8eef4" opacity="0.75"/>
<rect x="403" y="249.93627503703073" width="39" height="1.2" fill="#e8eef4" opacity="0.75"/>
<rect x="415" y="253.3738553798231" width="17" height="1.2" fill="#e8eef4" opacity="0.75"/>
<rect x="564" y="254.5953485236197" width="40" height="1.2" fill="#e8eef4" opacity="0.75"/>
<rect x="444" y="253.52297359801565" width="19" height="1.2" fill="#e8eef4" opacity="0.75"/>
<rect x="573" y="254.42327552053968" width="24" height="1.2" fill="#e8eef4" opacity="0.75"/>
<rect x="500" y="258.6975451179455" width="21" height="1.2" fill="#e8eef4" opacity="0.75"/>
<rect x="504" y="259.73109870294985" width="20" height="1.2" fill="#e8eef4" opacity="0.75"/>
<rect x="494" y="259.92346734767716" width="23" height="1.2" fill="#e8eef4" opacity="0.75"/>
<rect x="407" y="259.1099932110381" width="39" height="1.2" fill="#e8eef4" opacity="0.75"/>
<rect x="574" y="263.1443200081582" width="39" height="1.2" fill="#e8eef4" opacity="0.75"/>
<rect x="570" y="264.541606245487" width="12" height="1.2" fill="#e8eef4" opacity="0.75"/>
<rect x="558" y="263.30353837924696" width="31" height="1.2" fill="#e8eef4" opacity="0.75"/>
<rect x="429" y="263.66749835069186" width="30" height="1.2" fill="#e8eef4" opacity="0.75"/>
<rect x="591" y="268.4391725634616" width="26" height="1.2" fill="#e8eef4" opacity="0.75"/>
<rect x="416" y="268.36340708456004" width="32" height="1.2" fill="#e8eef4" opacity="0.75"/>
<rect x="398" y="269.36376857186934" width="37" height="1.2" fill="#e8eef4" opacity="0.75"/>
<rect x="580" y="268.14376926553683" width="21" height="1.2" fill="#e8eef4" opacity="0.75"/>
<rect x="503" y="273.6328099947656" width="20" height="1.2" fill="#e8eef4" opacity="0.75"/>
<rect x="508" y="274.98877886579584" width="32" height="1.2" fill="#e8eef4" opacity="0.75"/>
<rect x="395" y="273.67915547936946" width="28" height="1.2" fill="#e8eef4" opacity="0.75"/>
<rect x="568" y="274.89186200914577" width="21" height="1.2" fill="#e8eef4" opacity="0.75"/>
<rect x="537" y="278.36134691188306" width="16" height="1.2" fill="#e8eef4" opacity="0.75"/>
<rect x="428" y="279.16107251445146" width="10" height="1.2" fill="#e8eef4" opacity="0.75"/>
<rect x="419" y="278.23204778520153" width="30" height="1.2" fill="#e8eef4" opacity="0.75"/>
<rect x="519" y="278.71507668953" width="20" height="1.2" fill="#e8eef4" opacity="0.75"/>
<rect x="394" y="283.1380457236119" width="21" height="1.2" fill="#e8eef4" opacity="0.75"/>
<rect x="545" y="283.72064806327893" width="27" height="1.2" fill="#e8eef4" opacity="0.75"/>
<rect x="552" y="283.4003819398026" width="12" height="1.2" fill="#e8eef4" opacity="0.75"/>
<rect x="523" y="283.8494433518442" width="34" height="1.2" fill="#e8eef4" opacity="0.75"/>
<rect x="450" y="288.26754982034095" width="15" height="1.2" fill="#e8eef4" opacity="0.75"/>
<rect x="588" y="288.69270632436627" width="34" height="1.2" fill="#e8eef4" opacity="0.75"/>
<rect x="441" y="289.15853732999506" width="26" height="1.2" fill="#e8eef4" opacity="0.75"/>
<rect x="418" y="289.7535738540663" width="13" height="1.2" fill="#e8eef4" opacity="0.75"/>
<rect x="533" y="293.9098576638942" width="38" height="1.2" fill="#e8eef4" opacity="0.75"/>
<rect x="473" y="294.48658139130526" width="22" height="1.2" fill="#e8eef4" opacity="0.75"/>
<rect x="485" y="293.1283826137641" width="34" height="1.2" fill="#e8eef4" opacity="0.75"/>
<rect x="461" y="294.16858366788773" width="25" height="1.2" fill="#e8eef4" opacity="0.75"/>
<rect x="453" y="299.3898150028689" width="23" height="1.2" fill="#e8eef4" opacity="0.75"/>
<rect x="395" y="298.74966541129606" width="24" height="1.2" fill="#e8eef4" opacity="0.75"/>
<rect x="473" y="298.55664279075813" width="14" height="1.2" fill="#e8eef4" opacity="0.75"/>
<rect x="563" y="299.70054691685783" width="14" height="1.2" fill="#e8eef4" opacity="0.75"/>
<rect x="506" y="303.19885755260475" width="21" height="1.2" fill="#e8eef4" opacity="0.75"/>
<rect x="410" y="303.7271639111065" width="31" height="1.2" fill="#e8eef4" opacity="0.75"/>
<rect x="398" y="304.18045027061083" width="30" height="1.2" fill="#e8eef4" opacity="0.75"/>
<rect x="598" y="304.631375028933" width="9" height="1.2" fill="#e8eef4" opacity="0.75"/>
<rect x="531" y="308.3114088843642" width="12" height="1.2" fill="#e8eef4" opacity="0.75"/>
<rect x="467" y="308.9296830520891" width="28" height="1.2" fill="#e8eef4" opacity="0.75"/>
<rect x="492" y="309.3038413465849" width="11" height="1.2" fill="#e8eef4" opacity="0.75"/>
<rect x="594" y="309.95291458101553" width="33" height="1.2" fill="#e8eef4" opacity="0.75"/>
<rect x="482" y="313.459906945377" width="15" height="1.2" fill="#e8eef4" opacity="0.75"/>
<rect x="600" y="313.1331027299128" width="37" height="1.2" fill="#e8eef4" opacity="0.75"/>
<rect x="528" y="314.5804953672896" width="21" height="1.2" fill="#e8eef4" opacity="0.75"/>
<rect x="500" y="314.16858814968805" width="39" height="1.2" fill="#e8eef4" opacity="0.75"/>
<rect x="469" y="318.28592582815236" width="33" height="1.2" fill="#e8eef4" opacity="0.75"/>
<rect x="412" y="319.58925627296475" width="8" height="1.2" fill="#e8eef4" opacity="0.75"/>
<rect x="427" y="319.2978972300278" width="24" height="1.2" fill="#e8eef4" opacity="0.75"/>
<rect x="530" y="319.93977799610605" width="38" height="1.2" fill="#e8eef4" opacity="0.75"/>
<rect x="553" y="323.2393760745695" width="37" height="1.2" fill="#e8eef4" opacity="0.75"/>
<rect x="424" y="323.741831851895" width="31" height="1.2" fill="#e8eef4" opacity="0.75"/>
<rect x="588" y="324.7916340959378" width="9" height="1.2" fill="#e8eef4" opacity="0.75"/>
<rect x="415" y="323.8258879562599" width="15" height="1.2" fill="#e8eef4" opacity="0.75"/>
<rect x="553" y="328.1885384664172" width="40" height="1.2" fill="#e8eef4" opacity="0.75"/>
<rect x="509" y="328.1354781920891" width="23" height="1.2" fill="#e8eef4" opacity="0.75"/>
<rect x="419" y="328.1767212377445" width="40" height="1.2" fill="#e8eef4" opacity="0.75"/>
<rect x="456" y="328.70552612509545" width="23" height="1.2" fill="#e8eef4" opacity="0.75"/>
<rect x="443" y="333.827845327055" width="11" height="1.2" fill="#e8eef4" opacity="0.75"/>
<rect x="598" y="334.17774305420653" width="18" height="1.2" fill="#e8eef4" opacity="0.75"/>
<rect x="508" y="333.918761613036" width="14" height="1.2" fill="#e8eef4" opacity="0.75"/>
<rect x="560" y="334.0075231962628" width="17" height="1.2" fill="#e8eef4" opacity="0.75"/>
<rect x="594" y="339.0499319758063" width="34" height="1.2" fill="#e8eef4" opacity="0.75"/>
<rect x="521" y="339.92685967480907" width="15" height="1.2" fill="#e8eef4" opacity="0.75"/>
<rect x="478" y="338.0214141492379" width="17" height="1.2" fill="#e8eef4" opacity="0.75"/>
<rect x="558" y="338.2190572281843" width="32" height="1.2" fill="#e8eef4" opacity="0.75"/>
<rect x="425" y="344.0621490570696" width="9" height="1.2" fill="#e8eef4" opacity="0.75"/>
<rect x="476" y="343.9868755236381" width="10" height="1.2" fill="#e8eef4" opacity="0.75"/>
<rect x="473" y="343.59896706161425" width="21" height="1.2" fill="#e8eef4" opacity="0.75"/>
<rect x="446" y="343.2234961488419" width="34" height="1.2" fill="#e8eef4" opacity="0.75"/>
<rect x="460" y="348.9779869646381" width="16" height="1.2" fill="#e8eef4" opacity="0.75"/>
<rect x="510" y="349.00189211855934" width="14" height="1.2" fill="#e8eef4" opacity="0.75"/>
<rect x="474" y="348.59869559507695" width="24" height="1.2" fill="#e8eef4" opacity="0.75"/>
<rect x="438" y="348.1689128492661" width="38" height="1.2" fill="#e8eef4" opacity="0.75"/>
<rect x="472" y="354.2974354390874" width="29" height="1.2" fill="#e8eef4" opacity="0.75"/>
<rect x="486" y="353.0991364316815" width="11" height="1.2" fill="#e8eef4" opacity="0.75"/>
<rect x="426" y="353.7643411092094" width="28" height="1.2" fill="#e8eef4" opacity="0.75"/>
<rect x="475" y="353.44533882550957" width="14" height="1.2" fill="#e8eef4" opacity="0.75"/>
<rect x="540" y="358.06480512491487" width="31" height="1.2" fill="#e8eef4" opacity="0.75"/>
<rect x="493" y="358.4606303203087" width="39" height="1.2" fill="#e8eef4" opacity="0.75"/>
<rect x="544" y="358.7468500495941" width="14" height="1.2" fill="#e8eef4" opacity="0.75"/>
<rect x="393" y="359.1867235654178" width="23" height="1.2" fill="#e8eef4" opacity="0.75"/>
<rect x="468" y="364.1961158766418" width="31" height="1.2" fill="#e8eef4" opacity="0.75"/>
<rect x="567" y="363.4195892752587" width="11" height="1.2" fill="#e8eef4" opacity="0.75"/>
<rect x="458" y="363.9952644127295" width="30" height="1.2" fill="#e8eef4" opacity="0.75"/>
<rect x="403" y="363.1856639715031" width="24" height="1.2" fill="#e8eef4" opacity="0.75"/>
<rect x="515" y="369.61538690024094" width="35" height="1.2" fill="#e8eef4" opacity="0.75"/>
<rect x="527" y="368.7467089355333" width="13" height="1.2" fill="#e8eef4" opacity="0.75"/>
<rect x="451" y="369.35977913584196" width="13" height="1.2" fill="#e8eef4" opacity="0.75"/>
<rect x="475" y="368.45060556875967" width="24" height="1.2" fill="#e8eef4" opacity="0.75"/>
<rect x="460" y="373.6347231738176" width="17" height="1.2" fill="#e8eef4" opacity="0.75"/>
<rect x="556" y="374.2845407021401" width="11" height="1.2" fill="#e8eef4" opacity="0.75"/>
<rect x="600" y="373.9806607223742" width="33" height="1.2" fill="#e8eef4" opacity="0.75"/>
<rect x="522" y="374.1041807254926" width="29" height="1.2" fill="#e8eef4" opacity="0.75"/>
<rect x="525" y="378.0446900966316" width="21" height="1.2" fill="#e8eef4" opacity="0.75"/>
<rect x="513" y="378.01115831470185" width="38" height="1.2" fill="#e8eef4" opacity="0.75"/>
<rect x="479" y="379.35928823985785" width="12" height="1.2" fill="#e8eef4" opacity="0.75"/>
<rect x="428" y="378.1669232165891" width="16" height="1.2" fill="#e8eef4" opacity="0.75"/>
<rect x="471" y="383.8953554731188" width="35" height="1.2" fill="#e8eef4" opacity="0.75"/>
<rect x="559" y="383.89000186800837" width="12" height="1.2" fill="#e8eef4" opacity="0.75"/>
<rect x="566" y="384.9131412928405" width="30" height="1.2" fill="#e8eef4" opacity="0.75"/>
<rect x="531" y="384.09623579251723" width="15" height="1.2" fill="#e8eef4" opacity="0.75"/>
<rect x="538" y="388.7943406896302" width="15" height="1.2" fill="#e8eef4" opacity="0.75"/>
<rect x="584" y="388.4222989245803" width="34" height="1.2" fill="#e8eef4" opacity="0.75"/>
<rect x="459" y="388.27997585891575" width="15" height="1.2" fill="#e8eef4" opacity="0.75"/>
<rect x="424" y="388.5480599175751" width="34" height="1.2" fill="#e8eef4" opacity="0.75"/>
<rect x="399" y="393.8638839711318" width="32" height="1.2" fill="#e8eef4" opacity="0.75"/>
<rect x="434" y="394.4058117259766" width="39" height="1.2" fill="#e8eef4" opacity="0.75"/>
<rect x="495" y="394.37913146315026" width="32" height="1.2" fill="#e8eef4" opacity="0.75"/>
<rect x="498" y="393.9634375587884" width="18" height="1.2" fill="#e8eef4" opacity="0.75"/>
<rect x="553" y="279" width="1.3" height="6" fill="#e8eef4" opacity="0.75"/>
<rect x="464" y="251" width="1.3" height="11" fill="#e8eef4" opacity="0.75"/>
<rect x="470" y="363" width="1.3" height="16" fill="#e8eef4" opacity="0.75"/>
<rect x="473" y="323" width="1.3" height="19" fill="#e8eef4" opacity="0.75"/>
<rect x="488" y="358" width="1.3" height="8" fill="#e8eef4" opacity="0.75"/>
<rect x="492" y="395" width="1.3" height="11" fill="#e8eef4" opacity="0.75"/>
<rect x="411" y="308" width="1.3" height="16" fill="#e8eef4" opacity="0.75"/>
<rect x="446" y="351" width="1.3" height="15" fill="#e8eef4" opacity="0.75"/>
<rect x="401" y="384" width="1.3" height="18" fill="#e8eef4" opacity="0.75"/>
<rect x="564" y="288" width="1.3" height="17" fill="#e8eef4" opacity="0.75"/>
<rect x="436" y="382" width="1.3" height="7" fill="#e8eef4" opacity="0.75"/>
<rect x="508" y="394" width="1.3" height="20" fill="#e8eef4" opacity="0.75"/>
<rect x="502" y="290" width="1.3" height="7" fill="#e8eef4" opacity="0.75"/>
<rect x="440" y="355" width="1.3" height="7" fill="#e8eef4" opacity="0.75"/>
<rect x="533" y="310" width="1.3" height="8" fill="#e8eef4" opacity="0.75"/>
<rect x="399" y="345" width="1.3" height="15" fill="#e8eef4" opacity="0.75"/>
<rect x="425" y="308" width="1.3" height="13" fill="#e8eef4" opacity="0.75"/>
<rect x="424" y="389" width="1.3" height="18" fill="#e8eef4" opacity="0.75"/>
<rect x="466" y="275" width="1.3" height="9" fill="#e8eef4" opacity="0.75"/>
<rect x="555" y="260" width="1.3" height="9" fill="#e8eef4" opacity="0.75"/>
<rect x="571" y="352" width="1.3" height="11" fill="#e8eef4" opacity="0.75"/>
<rect x="417" y="357" width="1.3" height="15" fill="#e8eef4" opacity="0.75"/>
<rect x="427" y="397" width="1.3" height="11" fill="#e8eef4" opacity="0.75"/>
<rect x="535" y="286" width="1.3" height="18" fill="#e8eef4" opacity="0.75"/>
<rect x="541" y="273" width="1.3" height="19" fill="#e8eef4" opacity="0.75"/>
<rect x="565" y="395" width="1.3" height="7" fill="#e8eef4" opacity="0.75"/>
<rect x="444" y="226" width="1.3" height="14" fill="#e8eef4" opacity="0.75"/>
<rect x="577" y="340" width="1.3" height="10" fill="#e8eef4" opacity="0.75"/>
<rect x="445" y="245" width="1.3" height="13" fill="#e8eef4" opacity="0.75"/>
<rect x="408" y="227" width="1.3" height="18" fill="#e8eef4" opacity="0.75"/>
<rect x="450" y="312" width="1.3" height="19" fill="#e8eef4" opacity="0.75"/>
<rect x="473" y="367" width="1.3" height="14" fill="#e8eef4" opacity="0.75"/>
<rect x="570" y="329" width="1.3" height="14" fill="#e8eef4" opacity="0.75"/>
<rect x="558" y="251" width="1.3" height="18" fill="#e8eef4" opacity="0.75"/>
<rect x="529" y="384" width="1.3" height="18" fill="#e8eef4" opacity="0.75"/>
<rect x="525" y="276" width="1.3" height="12" fill="#e8eef4" opacity="0.75"/>
<rect x="587" y="286" width="1.3" height="18" fill="#e8eef4" opacity="0.75"/>
<rect x="505" y="307" width="1.3" height="16" fill="#e8eef4" opacity="0.75"/>
<rect x="469" y="350" width="1.3" height="16" fill="#e8eef4" opacity="0.75"/>
<rect x="497" y="322" width="1.3" height="11" fill="#e8eef4" opacity="0.75"/>
<rect x="576" y="235" width="1.3" height="14" fill="#e8eef4" opacity="0.75"/>
<rect x="415" y="388" width="1.3" height="16" fill="#e8eef4" opacity="0.75"/>
<rect x="546" y="275" width="1.3" height="6" fill="#e8eef4" opacity="0.75"/>
<rect x="413" y="322" width="1.3" height="7" fill="#e8eef4" opacity="0.75"/>
<rect x="433" y="287" width="1.3" height="11" fill="#e8eef4" opacity="0.75"/>
<rect x="573" y="233" width="1.3" height="16" fill="#e8eef4" opacity="0.75"/>
<rect x="530" y="247" width="1.3" height="12" fill="#e8eef4" opacity="0.75"/>
<rect x="511" y="395" width="1.3" height="16" fill="#e8eef4" opacity="0.75"/>
<rect x="595" y="394" width="1.3" height="20" fill="#e8eef4" opacity="0.75"/>
<rect x="500" y="236" width="1.3" height="14" fill="#e8eef4" opacity="0.75"/>
<rect x="533" y="237" width="1.3" height="17" fill="#e8eef4" opacity="0.75"/>
<rect x="466" y="310" width="1.3" height="9" fill="#e8eef4" opacity="0.75"/>
<rect x="575" y="240" width="1.3" height="8" fill="#e8eef4" opacity="0.75"/>
<rect x="493" y="236" width="1.3" height="13" fill="#e8eef4" opacity="0.75"/>
<rect x="398" y="387" width="1.3" height="20" fill="#e8eef4" opacity="0.75"/>
<rect x="509" y="246" width="1.3" height="10" fill="#e8eef4" opacity="0.75"/>
<rect x="445" y="261" width="1.3" height="10" fill="#e8eef4" opacity="0.75"/>
<rect x="587" y="394" width="1.3" height="19" fill="#e8eef4" opacity="0.75"/>
<rect x="584" y="373" width="1.3" height="20" fill="#e8eef4" opacity="0.75"/>
<rect x="557" y="329" width="1.3" height="18" fill="#e8eef4" opacity="0.75"/>
<rect x="515" y="343" width="1.3" height="15" fill="#e8eef4" opacity="0.75"/>
<rect x="579" y="278" width="1.3" height="8" fill="#e8eef4" opacity="0.75"/>
<rect x="410" y="313" width="1.3" height="20" fill="#e8eef4" opacity="0.75"/>
<rect x="399" y="242" width="1.3" height="19" fill="#e8eef4" opacity="0.75"/>
<rect x="455" y="396" width="1.3" height="12" fill="#e8eef4" opacity="0.75"/>
<rect x="399" y="368" width="1.3" height="17" fill="#e8eef4" opacity="0.75"/>
<rect x="518" y="371" width="1.3" height="18" fill="#e8eef4" opacity="0.75"/>
<rect x="550" y="364" width="1.3" height="6" fill="#e8eef4" opacity="0.75"/>
<rect x="469" y="391" width="1.3" height="9" fill="#e8eef4" opacity="0.75"/>
<rect x="595" y="369" width="1.3" height="12" fill="#e8eef4" opacity="0.75"/>
<rect x="465" y="261" width="1.3" height="12" fill="#e8eef4" opacity="0.75"/>
<rect x="395" y="358" width="1.3" height="10" fill="#e8eef4" opacity="0.75"/>
<rect x="402" y="287" width="1.3" height="17" fill="#e8eef4" opacity="0.75"/>
<rect x="462" y="341" width="1.3" height="13" fill="#e8eef4" opacity="0.75"/>
<rect x="528" y="386" width="1.3" height="12" fill="#e8eef4" opacity="0.75"/>
<rect x="429" y="248" width="1.3" height="10" fill="#e8eef4" opacity="0.75"/>
<rect x="486" y="261" width="1.3" height="20" fill="#e8eef4" opacity="0.75"/>
<rect x="461" y="264" width="1.3" height="16" fill="#e8eef4" opacity="0.75"/>
<rect x="519" y="327" width="1.3" height="15" fill="#e8eef4" opacity="0.75"/>
<rect x="445" y="376" width="1.3" height="8" fill="#e8eef4" opacity="0.75"/>
<rect x="457" y="234" width="1.3" height="14" fill="#e8eef4" opacity="0.75"/>
<rect x="461" y="350" width="1.3" height="16" fill="#e8eef4" opacity="0.75"/>
<rect x="399" y="266" width="1.3" height="7" fill="#e8eef4" opacity="0.75"/>
<rect x="408" y="356" width="1.3" height="9" fill="#e8eef4" opacity="0.75"/>
<rect x="484" y="230" width="1.3" height="14" fill="#e8eef4" opacity="0.75"/>
<rect x="598" y="287" width="1.3" height="11" fill="#e8eef4" opacity="0.75"/>
<rect x="407" y="235" width="1.3" height="19" fill="#e8eef4" opacity="0.75"/>
<rect x="473" y="246" width="1.3" height="18" fill="#e8eef4" opacity="0.75"/>
<rect x="531" y="263" width="1.3" height="18" fill="#e8eef4" opacity="0.75"/>
<rect x="435" y="382" width="1.3" height="14" fill="#e8eef4" opacity="0.75"/>
<rect x="515" y="353" width="1.3" height="13" fill="#e8eef4" opacity="0.75"/>
<rect x="595" y="382" width="1.3" height="6" fill="#e8eef4" opacity="0.75"/>
<rect x="496" y="289" width="1.3" height="7" fill="#e8eef4" opacity="0.75"/>
<rect x="480" y="250" width="1.3" height="7" fill="#e8eef4" opacity="0.75"/>
<rect x="435" y="377" width="1.3" height="9" fill="#e8eef4" opacity="0.75"/>
<rect x="586" y="282" width="1.3" height="20" fill="#e8eef4" opacity="0.75"/>
<rect x="420" y="363" width="1.3" height="11" fill="#e8eef4" opacity="0.75"/>
<rect x="589" y="256" width="1.3" height="8" fill="#e8eef4" opacity="0.75"/>
<rect x="538" y="264" width="1.3" height="19" fill="#e8eef4" opacity="0.75"/>
<rect x="543" y="389" width="1.3" height="13" fill="#e8eef4" opacity="0.75"/>
<rect x="468" y="350" width="1.3" height="20" fill="#e8eef4" opacity="0.75"/>
<rect x="449" y="387" width="1.3" height="7" fill="#e8eef4" opacity="0.75"/>
<rect x="597" y="350" width="1.3" height="16" fill="#e8eef4" opacity="0.75"/>
<rect x="402" y="276" width="1.3" height="8" fill="#e8eef4" opacity="0.75"/>
<rect x="513" y="270" width="1.3" height="14" fill="#e8eef4" opacity="0.75"/>
<rect x="504" y="322" width="1.3" height="18" fill="#e8eef4" opacity="0.75"/>
<rect x="559" y="268" width="1.3" height="7" fill="#e8eef4" opacity="0.75"/>
<rect x="409" y="261" width="1.3" height="7" fill="#e8eef4" opacity="0.75"/>
<rect x="584" y="394" width="1.3" height="20" fill="#e8eef4" opacity="0.75"/>
<rect x="584" y="311" width="1.3" height="8" fill="#e8eef4" opacity="0.75"/>
<rect x="593" y="334" width="1.3" height="7" fill="#e8eef4" opacity="0.75"/>
<rect x="453" y="362" width="1.3" height="15" fill="#e8eef4" opacity="0.75"/>
<rect x="488" y="328" width="1.3" height="19" fill="#e8eef4" opacity="0.75"/>
<rect x="494" y="229" width="1.3" height="8" fill="#e8eef4" opacity="0.75"/>
<rect x="588" y="394" width="1.3" height="6" fill="#e8eef4" opacity="0.75"/>
<rect x="483" y="325" width="1.3" height="14" fill="#e8eef4" opacity="0.75"/>
<rect x="403" y="251" width="1.3" height="8" fill="#e8eef4" opacity="0.75"/>
<rect x="475" y="367" width="1.3" height="6" fill="#e8eef4" opacity="0.75"/>
<rect x="397" y="297" width="1.3" height="13" fill="#e8eef4" opacity="0.75"/>
<rect x="519" y="233" width="1.3" height="6" fill="#e8eef4" opacity="0.75"/>
<rect x="430" y="225" width="1.3" height="10" fill="#e8eef4" opacity="0.75"/>
<rect x="594" y="281" width="1.3" height="19" fill="#e8eef4" opacity="0.75"/>
<rect x="521" y="287" width="1.3" height="13" fill="#e8eef4" opacity="0.75"/>
<rect x="444" y="353" width="1.3" height="8" fill="#e8eef4" opacity="0.75"/>
<rect x="466" y="378" width="1.3" height="15" fill="#e8eef4" opacity="0.75"/>
<rect x="519" y="298" width="1.3" height="15" fill="#e8eef4" opacity="0.75"/>
<rect x="488" y="281" width="1.3" height="20" fill="#e8eef4" opacity="0.75"/>
<rect x="494" y="341" width="1.3" height="15" fill="#e8eef4" opacity="0.75"/>
<rect x="569" y="377" width="1.3" height="8" fill="#e8eef4" opacity="0.75"/>
<rect x="489" y="321" width="1.3" height="20" fill="#e8eef4" opacity="0.75"/>
<rect x="452" y="252" width="1.3" height="17" fill="#e8eef4" opacity="0.75"/>
<rect x="457" y="320" width="1.3" height="12" fill="#e8eef4" opacity="0.75"/>
<rect x="425" y="389" width="1.3" height="10" fill="#e8eef4" opacity="0.75"/>
<rect x="525" y="334" width="1.3" height="6" fill="#e8eef4" opacity="0.75"/>
<rect x="464" y="320" width="1.3" height="13" fill="#e8eef4" opacity="0.75"/>
<rect x="547" y="363" width="1.3" height="16" fill="#e8eef4" opacity="0.75"/>
<rect x="471" y="222" width="1.3" height="13" fill="#e8eef4" opacity="0.75"/>
<rect x="475" y="310" width="1.3" height="19" fill="#e8eef4" opacity="0.75"/>
<rect x="523" y="303" width="1.3" height="7" fill="#e8eef4" opacity="0.75"/>
<rect x="458" y="334" width="1.3" height="6" fill="#e8eef4" opacity="0.75"/>
</g>
<rect x="467" y="396" width="12" height="50" fill="#f0dc40" />
<rect x="520" y="396" width="7" height="22" fill="#e8d440" />
<rect x="408" y="396" width="6" height="32" fill="#e8d440" />
<rect x="590" y="396" width="6" height="34" fill="#d8c440" />
<rect x="443" y="396" width="12" height="24" fill="#e0e6ec" />
<rect x="520" y="402" width="80" height="12" fill="#8a9098" opacity="0.6"/>
<line x1="392" y1="396" x2="600" y2="396" stroke="#e8d440" stroke-width="2.5" />
<rect x="385" y="380" width="14" height="20" fill="#d0d4d8" opacity="0.8"/>
<path d="M327,338 L412,349 L412,357 L327,347 Z" fill="#f0dc40" opacity="0.3"/>
<path d="M327,338 L412,349 M327,347 L412,357" fill="none" stroke="#f0dc40" stroke-width="1.6" />
<line x1="332" y1="339.65" x2="337" y2="347.65" stroke="#f0dc40" stroke-width="1.2" />
<line x1="341" y1="340.82" x2="346" y2="348.82" stroke="#f0dc40" stroke-width="1.2" />
<line x1="350" y1="341.99" x2="355" y2="349.99" stroke="#f0dc40" stroke-width="1.2" />
<line x1="359" y1="343.16" x2="364" y2="351.16" stroke="#f0dc40" stroke-width="1.2" />
<line x1="368" y1="344.33" x2="373" y2="352.33" stroke="#f0dc40" stroke-width="1.2" />
<line x1="377" y1="345.5" x2="382" y2="353.5" stroke="#f0dc40" stroke-width="1.2" />
<line x1="386" y1="346.67" x2="391" y2="354.67" stroke="#f0dc40" stroke-width="1.2" />
<line x1="395" y1="347.84" x2="400" y2="355.84" stroke="#f0dc40" stroke-width="1.2" />
<line x1="404" y1="349.01" x2="409" y2="357.01" stroke="#f0dc40" stroke-width="1.2" />
<line x1="376" y1="287" x2="420" y2="297" stroke="#3a4a58" stroke-width="1.5" />
<line x1="420" y1="297" x2="420" y2="396" stroke="#f0dc40" stroke-width="2.2" />
<path d="M557,230 L568,230 L570,266 L576,268 L576,280 L567,282 L567,340 L562,340 L562,282 L553,280 L553,268 L556,266 Z" fill="#f0dc40" opacity="0.25"/>
<path d="M557,230 L568,230 L570,266 L576,268 L576,280 L567,282 L567,340 L562,340 L562,282 L553,280 L553,268 L556,266 Z" fill="none" stroke="#f0dc40" stroke-width="1.5" />
<line x1="576" y1="280" x2="600" y2="322" stroke="#f0dc40" stroke-width="1.2" />
<path d="M483,380 L600,312 L600,358 L477,386 Z" fill="#f0dc40" opacity="0.3"/>
<path d="M483,380 L600,312 M477,386 L600,358" fill="none" stroke="#f0dc40" stroke-width="2.2" />
<line x1="483" y1="380.0" x2="483" y2="384.632" stroke="#f0dc40" stroke-width="1.3" />
<line x1="483" y1="384.632" x2="496" y2="372.46" stroke="#f0dc40" stroke-width="1.3" />
<line x1="496" y1="372.46" x2="496" y2="381.668" stroke="#f0dc40" stroke-width="1.3" />
<line x1="496" y1="381.668" x2="509" y2="364.92" stroke="#f0dc40" stroke-width="1.3" />
<line x1="509" y1="364.92" x2="509" y2="378.704" stroke="#f0dc40" stroke-width="1.3" />
<line x1="509" y1="378.704" x2="522" y2="357.38" stroke="#f0dc40" stroke-width="1.3" />
<line x1="522" y1="357.38" x2="522" y2="375.74" stroke="#f0dc40" stroke-width="1.3" />
<line x1="522" y1="375.74" x2="535" y2="349.84000000000003" stroke="#f0dc40" stroke-width="1.3" />
<line x1="535" y1="349.84000000000003" x2="535" y2="372.776" stroke="#f0dc40" stroke-width="1.3" />
<line x1="535" y1="372.776" x2="548" y2="342.3" stroke="#f0dc40" stroke-width="1.3" />
<line x1="548" y1="342.3" x2="548" y2="369.812" stroke="#f0dc40" stroke-width="1.3" />
<line x1="548" y1="369.812" x2="561" y2="334.76" stroke="#f0dc40" stroke-width="1.3" />
<line x1="561" y1="334.76" x2="561" y2="366.848" stroke="#f0dc40" stroke-width="1.3" />
<line x1="561" y1="366.848" x2="574" y2="327.22" stroke="#f0dc40" stroke-width="1.3" />
<line x1="574" y1="327.22" x2="574" y2="363.884" stroke="#f0dc40" stroke-width="1.3" />
<line x1="574" y1="363.884" x2="587" y2="319.68" stroke="#f0dc40" stroke-width="1.3" />
<line x1="587" y1="319.68" x2="587" y2="360.92" stroke="#f0dc40" stroke-width="1.3" />
<path d="M561,190 L600,190 L600,268 L596,266 Z" fill="#5a5848" />
<line x1="575" y1="190" x2="600" y2="240" stroke="#d8b830" stroke-width="2" />
<rect x="600" y="190" width="217" height="338" fill="#3a3020" />
<line x1="801" y1="330" x2="817" y2="300" stroke="#c09a30" stroke-width="3" />
<line x1="801" y1="380" x2="817" y2="350" stroke="#8a7030" stroke-width="2" />
</g>
<g clip-path="url(#ell)">
<rect x="598" y="192" width="7" height="100" fill="#c89020" />
<rect x="598" y="215" width="7" height="12" fill="#f0f0f0" />
<rect x="598" y="245" width="7" height="10" fill="#e8e8e8" />
<rect x="598" y="292" width="7" height="58" fill="#e6e9ee" />
<line x1="598" y1="340" x2="605" y2="330" stroke="#d8b030" stroke-width="3" />
<rect x="598" y="350" width="7" height="50" fill="#a07820" />
<rect x="598" y="400" width="7" height="118" fill="url(#sea)" />
</g>
<rect x="350.5" y="442.5" width="35" height="18" fill="none" stroke="#888" stroke-width="1" stroke-dasharray="1,1"/>
<text x="351.5" y="455" font-family="Liberation Sans" font-size="6" fill="#666" textLength="21" lengthAdjust="spacingAndGlyphs" >Подпись</text>
<rect x="327.5" y="190.5" width="489" height="327" fill="none" stroke="#a8a8a8" stroke-width="1" />
<line x1="572" y1="175" x2="572" y2="190" stroke="#8a8a8a" stroke-width="1" />
<circle cx="572" cy="176" r="4" fill="#ffffff" stroke="#8a8a8a"/>
<circle cx="327.5" cy="190.5" r="3.5" fill="#ffffff" stroke="#8a8a8a"/>
<circle cx="572.5" cy="190.5" r="3.5" fill="#ffffff" stroke="#8a8a8a"/>
<circle cx="817.5" cy="190.5" r="3.5" fill="#ffffff" stroke="#8a8a8a"/>
<circle cx="327.5" cy="354.5" r="3.5" fill="#ffffff" stroke="#8a8a8a"/>
<circle cx="817.5" cy="354.5" r="3.5" fill="#ffffff" stroke="#8a8a8a"/>
<circle cx="327.5" cy="518.5" r="3.5" fill="#ffffff" stroke="#8a8a8a"/>
<circle cx="572.5" cy="518.5" r="3.5" fill="#ffffff" stroke="#8a8a8a"/>
<circle cx="817.5" cy="518.5" r="3.5" fill="#ffffff" stroke="#8a8a8a"/>
<rect x="1012.5" y="128" width="11.5" height="401" fill="#dcdcdc" />
<line x1="1012.5" y1="128" x2="1012.5" y2="529" stroke="#d0d0d0" stroke-width="1" />
<rect x="1013" y="128" width="11" height="12" fill="#f0f0f0" stroke="#c8c8c8" stroke-width="1" />
<path d="M1015.5,136 L1018.5,133 L1021.5,136 Z" fill="#777" />
<rect x="1013.5" y="224.5" width="10" height="83" fill="#f4f4f4" stroke="#c8c8c8" stroke-width="1" />
<rect x="1013" y="475" width="11" height="10" fill="#f0f0f0" stroke="#c8c8c8" stroke-width="1" />
<path d="M1015.5,478.5 L1018.5,481.5 L1021.5,478.5 Z" fill="#777" />
<path d="M1015.5,492 L1018.5,489 L1021.5,492 M1015.5,495 L1018.5,492 L1021.5,495" fill="none" stroke="#777" stroke-width="1.2" />
<path d="M1015.5,503 L1018.5,506 L1021.5,503 M1015.5,506 L1018.5,509 L1021.5,506" fill="none" stroke="#777" stroke-width="1.2" />
<path d="M1011,102 L1014.5,98.5 L1018,102" fill="none" stroke="#666" stroke-width="1.3" />
<rect x="0" y="529" width="1024" height="17" fill="#d24726" />
<text x="5" y="542" font-family="Liberation Sans" font-size="10" fill="#f6d9cf" textLength="54" lengthAdjust="spacingAndGlyphs" stroke="#f6d9cf" stroke-width="0.2" >СЛАЙД 2 ИЗ 4</text>
<path d="M74.5,533.5 h5 v9 h-5 Z M79.5,533.5 h4 l1,2 v7 h-5" fill="none" stroke="#f6d9cf" stroke-width="1" />
<text x="97" y="542" font-family="Liberation Sans" font-size="10" fill="#f6d9cf" textLength="36" lengthAdjust="spacingAndGlyphs" stroke="#f6d9cf" stroke-width="0.2" >РУССКИЙ</text>
<path d="M616,536 L619,533 L622,536 Z M615,538.5 h8 M615,540.5 h8 M615,542.5 h8" fill="none" stroke="#f6d9cf" stroke-width="1" />
<path d="M616,538 h8 M616,540 h8 M616,542 h8" fill="none" stroke="#f6d9cf" stroke-width="1" />
<text x="627" y="542" font-family="Liberation Sans" font-size="10" fill="#f6d9cf" textLength="37" lengthAdjust="spacingAndGlyphs" stroke="#f6d9cf" stroke-width="0.2" >ЗАМЕТКИ</text>
<path d="M680,533 h10 v7 h-6 l-3,3 v-3 h-1 Z" fill="#f6d9cf" />
<text x="692" y="542" font-family="Liberation Sans" font-size="10" fill="#f6d9cf" textLength="56" lengthAdjust="spacingAndGlyphs" stroke="#f6d9cf" stroke-width="0.2" >ПРИМЕЧАНИЯ</text>
<rect x="763" y="529" width="28" height="17" fill="#b53c1e" />
<rect x="771.5" y="532.5" width="11" height="10" fill="none" stroke="#f6d9cf" stroke-width="1.3" />
<rect x="775" y="534" width="6" height="3" fill="#f6d9cf" />
<rect x="800" y="532" width="5" height="4" fill="#f6d9cf" />
<rect x="806" y="532" width="5" height="4" fill="#f6d9cf" />
<rect x="800" y="538" width="5" height="4" fill="#f6d9cf" />
<rect x="806" y="538" width="5" height="4" fill="#f6d9cf" />
<path d="M829.5,533.5 h4 l1,1 l1,-1 h4 v9 h-4 l-1,1 l-1,-1 h-4 Z" fill="none" stroke="#f6d9cf" stroke-width="1" />
<path d="M857,533.5 h10 M859,534 v5 h6 v-5 M862,539 v3 M860,543 h4" fill="none" stroke="#f6d9cf" stroke-width="1" />
<line x1="881" y1="538.5" x2="885" y2="538.5" stroke="#f6d9cf" stroke-width="1.5" />
<line x1="888" y1="538.5" x2="963" y2="538.5" stroke="#f6d9cf" stroke-width="1" />
<rect x="904" y="534" width="4" height="9" fill="#f6d9cf" />
<line x1="926.5" y1="536" x2="926.5" y2="541" stroke="#f6d9cf" stroke-width="1" />
<path d="M966,538.5 h6 M969,535.5 v6" fill="none" stroke="#f6d9cf" stroke-width="1.5" />
<text x="983" y="542" font-family="Liberation Sans" font-size="10" fill="#f6d9cf" textLength="16" lengthAdjust="spacingAndGlyphs" stroke="#f6d9cf" stroke-width="0.2" >50%</text>
<rect x="1010.5" y="533.5" width="10" height="10" fill="none" stroke="#f6d9cf" stroke-width="1" />
<path d="M1012,535 l3,3 M1019,535 l-3,3 M1012,542 l3,-3 M1019,542 l-3,-3" fill="none" stroke="#f6d9cf" stroke-width="1" />
<rect x="0" y="546" width="1024" height="30" fill="#9b5f47" />
<path d="M9,553 L17,552 V559.5 H9 Z M18,551.8 L29,550.5 V559.5 H18 Z M9,560.5 H17 V568 L9,567 Z M18,560.5 H29 V569.5 L18,568.2 Z" fill="#c8d8e8" />
<rect x="38" y="550" width="1.2" height="1.2" fill="#402010" />
<rect x="40.5" y="550" width="1.2" height="1.2" fill="#402010" />
<rect x="43" y="550" width="1.2" height="1.2" fill="#402010" />
<rect x="38" y="552" width="1.2" height="1.2" fill="#402010" />
<rect x="40.5" y="552" width="1.2" height="1.2" fill="#402010" />
<rect x="43" y="552" width="1.2" height="1.2" fill="#402010" />
<rect x="38" y="554" width="1.2" height="1.2" fill="#402010" />
<rect x="40.5" y="554" width="1.2" height="1.2" fill="#402010" />
<rect x="43" y="554" width="1.2" height="1.2" fill="#402010" />
<rect x="38" y="556" width="1.2" height="1.2" fill="#402010" />
<rect x="40.5" y="556" width="1.2" height="1.2" fill="#402010" />
<rect x="43" y="556" width="1.2" height="1.2" fill="#402010" />
<rect x="38" y="558" width="1.2" height="1.2" fill="#402010" />
<rect x="40.5" y="558" width="1.2" height="1.2" fill="#402010" />
<rect x="43" y="558" width="1.2" height="1.2" fill="#402010" />
<rect x="38" y="560" width="1.2" height="1.2" fill="#402010" />
<rect x="40.5" y="560" width="1.2" height="1.2" fill="#402010" />
<rect x="43" y="560" width="1.2" height="1.2" fill="#402010" />
<rect x="38" y="562" width="1.2" height="1.2" fill="#402010" />
<rect x="40.5" y="562" width="1.2" height="1.2" fill="#402010" />
<rect x="43" y="562" width="1.2" height="1.2" fill="#402010" />
<rect x="38" y="564" width="1.2" height="1.2" fill="#402010" />
<rect x="40.5" y="564" width="1.2" height="1.2" fill="#402010" />
<rect x="43" y="564" width="1.2" height="1.2" fill="#402010" />
<rect x="38" y="566" width="1.2" height="1.2" fill="#402010" />
<rect x="40.5" y="566" width="1.2" height="1.2" fill="#402010" />
<rect x="43" y="566" width="1.2" height="1.2" fill="#402010" />
<rect x="38" y="568" width="1.2" height="1.2" fill="#402010" />
<rect x="40.5" y="568" width="1.2" height="1.2" fill="#402010" />
<rect x="43" y="568" width="1.2" height="1.2" fill="#402010" />
<rect x="38" y="570" width="1.2" height="1.2" fill="#402010" />
<rect x="40.5" y="570" width="1.2" height="1.2" fill="#402010" />
<rect x="43" y="570" width="1.2" height="1.2" fill="#402010" />
<rect x="51.5" y="546.5" width="37" height="28" fill="#a87358" stroke="#b88a6e" stroke-width="1" />
<line x1="91.5" y1="547" x2="91.5" y2="575" stroke="#b08068" stroke-width="1" />
<rect x="58" y="553" width="22" height="14" fill="#e8c860" />
<rect x="58" y="551" width="10" height="3" fill="#e8c860" />
<rect x="60" y="557" width="18" height="9" fill="#f0e0a0" />
<path d="M60,565 h18 v5 h-18 Z" fill="#3c8ed8" />
<rect x="64" y="561" width="10" height="6" fill="#3c8ed8" />
<rect x="104" y="551" width="14" height="21" fill="#7030a0" />
<rect x="113" y="554" width="11" height="15" fill="#ffffff" />
<text x="107" y="565" font-family="Liberation Sans" font-size="10" fill="#ffffff" font-weight="700" >N</text>
<rect x="140.5" y="546.5" width="39" height="28" fill="#a87358" stroke="#b88a6e" stroke-width="1" />
<rect x="148" y="551" width="24" height="21" fill="#d44438" />
<path d="M152,557 l8,4 l8,-4 M152,561 l8,4 l8,-4 M152,565 l8,4 l8,-4" fill="none" stroke="#ffffff" stroke-width="1.5" />
<path d="M198,570 L203,551 L206,551 L211,570 Z" fill="#f08010" />
<rect x="196" y="568" width="17" height="3" fill="#f08010" />
<rect x="200" y="558" width="9" height="2" fill="#ffffff" />
<rect x="199" y="563" width="11" height="2" fill="#ffffff" />
<rect x="237" y="552" width="23" height="17" fill="#3a96dd" />
<circle cx="242" cy="557" r="3" fill="none" stroke="#ffffff"/>
<rect x="249" y="555" width="8" height="3" fill="#ffffff" />
<rect x="249" y="560" width="8" height="3" fill="#ffffff" />
<ellipse cx="248" cy="571" rx="5" ry="2.5" fill="#c8d8f0"/>
<rect x="271.5" y="546.5" width="40" height="28" fill="#a87358" stroke="#b88a6e" stroke-width="1" />
<circle cx="292" cy="561" r="11" fill="#db4437"/>
<path d="M292,561 L281.5,557 A11,11 0 0 0 292,572 Z" fill="#0f9d58" />
<path d="M292,561 L292,572 A11,11 0 0 0 302.5,557 Z" fill="#f4b400" />
<circle cx="292" cy="561" r="5" fill="#ffffff"/><circle cx="292" cy="561" r="4" fill="#4285f4"/>
<rect x="315.5" y="546.5" width="40" height="28" fill="#a87358" stroke="#b88a6e" stroke-width="1" />
<path d="M324,566 L336,552 L345,556 L343,571 Z" fill="#5ab4e8" />
<path d="M336,552 L345,556 L343,571 Z" fill="#a8d8f0" />
<rect x="359.5" y="546.5" width="39" height="28" fill="#b88a6e" stroke="#b88a6e" stroke-width="1" />
<rect x="377" y="553" width="13" height="15" fill="#ffffff" stroke="#d24726" stroke-width="1" />
<rect x="368" y="551" width="14" height="21" fill="#d24726" />
<text x="371" y="566" font-family="Liberation Sans" font-size="11" fill="#ffffff" font-weight="700" >P</text>
<rect x="419" y="553" width="14" height="15" fill="#ffffff" />
<path d="M411,552 L423,550 V573 L411,571 Z" fill="#2b579a" />
<text x="412" y="566" font-family="Liberation Sans" font-size="10" fill="#ffffff" font-weight="700" >W</text>
<rect x="462" y="553" width="14" height="15" fill="#ffffff" />
<path d="M454,552 L466,550 V573 L454,571 Z" fill="#217346" />
<text x="456" y="566" font-family="Liberation Sans" font-size="10" fill="#ffffff" font-weight="700" >X</text>
<rect x="499" y="551" width="21" height="19" fill="#1b1b1b" stroke="#e8e050" stroke-width="1.5" />
<text x="502" y="565" font-family="Liberation Sans" font-size="10" fill="#e8e050" font-weight="700" >Br</text>
<rect x="543" y="551" width="21" height="19" fill="#2b1b0b" stroke="#ff9a00" stroke-width="1.5" />
<text x="546" y="565" font-family="Liberation Sans" font-size="10" fill="#ff9a00" font-weight="700" >Ai</text>
<rect x="587" y="551" width="17" height="21" fill="#4aa0e0" />
<rect x="589" y="553" width="13" height="5" fill="#d0e8f8" />
<ellipse cx="637" cy="557" rx="9" ry="6" fill="#f8d0d8" stroke="#c04060"/>
<path d="M636,560 L646,571 M642,560 L634,571" fill="none" stroke="#2080d0" stroke-width="2" />
<rect x="671" y="549" width="24" height="23" fill="#ffffff" />
<path d="M688,555 h-9 v11 h9" fill="none" stroke="#1a8a3a" stroke-width="3" />
<ellipse cx="727" cy="561" rx="10" ry="6" fill="#8a7a6a"/>
<circle cx="722" cy="558" r="3" fill="#ffffff"/>
<rect x="750.5" y="546.5" width="40" height="28" fill="#a87358" stroke="#b88a6e" stroke-width="1" />
<circle cx="770.5" cy="561" r="11" fill="#00aff0"/>
<text x="765" y="566" font-family="Liberation Sans" font-size="13" fill="#ffffff" font-weight="700" >S</text>
<rect x="800" y="550" width="1.2" height="1.2" fill="#402010" />
<rect x="802.5" y="550" width="1.2" height="1.2" fill="#402010" />
<rect x="805" y="550" width="1.2" height="1.2" fill="#402010" />
<rect x="800" y="552" width="1.2" height="1.2" fill="#402010" />
<rect x="802.5" y="552" width="1.2" height="1.2" fill="#402010" />
<rect x="805" y="552" width="1.2" height="1.2" fill="#402010" />
<rect x="800" y="554" width="1.2" height="1.2" fill="#402010" />
<rect x="802.5" y="554" width="1.2" height="1.2" fill="#402010" />
<rect x="805" y="554" width="1.2" height="1.2" fill="#402010" />
<rect x="800" y="556" width="1.2" height="1.2" fill="#402010" />
<rect x="802.5" y="556" width="1.2" height="1.2" fill="#402010" />
<rect x="805" y="556" width="1.2" height="1.2" fill="#402010" />
<rect x="800" y="558" width="1.2" height="1.2" fill="#402010" />
<rect x="802.5" y="558" width="1.2" height="1.2" fill="#402010" />
<rect x="805" y="558" width="1.2" height="1.2" fill="#402010" />
<rect x="800" y="560" width="1.2" height="1.2" fill="#402010" />
<rect x="802.5" y="560" width="1.2" height="1.2" fill="#402010" />
<rect x="805" y="560" width="1.2" height="1.2" fill="#402010" />
<rect x="800" y="562" width="1.2" height="1.2" fill="#402010" />
<rect x="802.5" y="562" width="1.2" height="1.2" fill="#402010" />
<rect x="805" y="562" width="1.2" height="1.2" fill="#402010" />
<rect x="800" y="564" width="1.2" height="1.2" fill="#402010" />
<rect x="802.5" y="564" width="1.2" height="1.2" fill="#402010" />
<rect x="805" y="564" width="1.2" height="1.2" fill="#402010" />
<rect x="800" y="566" width="1.2" height="1.2" fill="#402010" />
<rect x="802.5" y="566" width="1.2" height="1.2" fill="#402010" />
<rect x="805" y="566" width="1.2" height="1.2" fill="#402010" />
<rect x="800" y="568" width="1.2" height="1.2" fill="#402010" />
<rect x="802.5" y="568" width="1.2" height="1.2" fill="#402010" />
<rect x="805" y="568" width="1.2" height="1.2" fill="#402010" />
<rect x="800" y="570" width="1.2" height="1.2" fill="#402010" />
<rect x="802.5" y="570" width="1.2" height="1.2" fill="#402010" />
<rect x="805" y="570" width="1.2" height="1.2" fill="#402010" />
<rect x="815.5" y="555.5" width="22" height="13" fill="none" stroke="#e0e8f0" stroke-width="1.2" />
<rect x="818.0" y="558.0" width="1.5" height="1.5" fill="#e0e8f0" />
<rect x="820.5" y="558.0" width="1.5" height="1.5" fill="#e0e8f0" />
<rect x="823.0" y="558.0" width="1.5" height="1.5" fill="#e0e8f0" />
<rect x="825.5" y="558.0" width="1.5" height="1.5" fill="#e0e8f0" />
<rect x="828.0" y="558.0" width="1.5" height="1.5" fill="#e0e8f0" />
<rect x="830.5" y="558.0" width="1.5" height="1.5" fill="#e0e8f0" />
<rect x="833.0" y="558.0" width="1.5" height="1.5" fill="#e0e8f0" />
<rect x="835.5" y="558.0" width="1.5" height="1.5" fill="#e0e8f0" />
<rect x="818.0" y="560.5" width="1.5" height="1.5" fill="#e0e8f0" />
<rect x="820.5" y="560.5" width="1.5" height="1.5" fill="#e0e8f0" />
<rect x="823.0" y="560.5" width="1.5" height="1.5" fill="#e0e8f0" />
<rect x="825.5" y="560.5" width="1.5" height="1.5" fill="#e0e8f0" />
<rect x="828.0" y="560.5" width="1.5" height="1.5" fill="#e0e8f0" />
<rect x="830.5" y="560.5" width="1.5" height="1.5" fill="#e0e8f0" />
<rect x="833.0" y="560.5" width="1.5" height="1.5" fill="#e0e8f0" />
<rect x="835.5" y="560.5" width="1.5" height="1.5" fill="#e0e8f0" />
<rect x="818.0" y="563.0" width="1.5" height="1.5" fill="#e0e8f0" />
<rect x="820.5" y="563.0" width="1.5" height="1.5" fill="#e0e8f0" />
<rect x="823.0" y="563.0" width="1.5" height="1.5" fill="#e0e8f0" />
<rect x="825.5" y="563.0" width="1.5" height="1.5" fill="#e0e8f0" />
<rect x="828.0" y="563.0" width="1.5" height="1.5" fill="#e0e8f0" />
<rect x="830.5" y="563.0" width="1.5" height="1.5" fill="#e0e8f0" />
<rect x="833.0" y="563.0" width="1.5" height="1.5" fill="#e0e8f0" />
<rect x="835.5" y="563.0" width="1.5" height="1.5" fill="#e0e8f0" />
<path d="M849,564 L851,561 L853,564 Z" fill="#e0e8f0" />
<path d="M864,573 V556 M864,556 h8 l2,2 l-2,2 h-8" fill="#e0e8f0" stroke="#e0e8f0" stroke-width="1" />
<rect x="883" y="557" width="10" height="14" fill="none" stroke="#e0e8f0" stroke-width="1" />
<rect x="887" y="555" width="2" height="3" fill="#e0e8f0" />
<rect x="885" y="560" width="6" height="10" fill="#e0e8f0" />
<rect x="900.0" y="570.0" width="1.5" height="2.0" fill="#e0e8f0" />
<rect x="902.3" y="567.5" width="1.5" height="4.5" fill="#e0e8f0" />
<rect x="904.6" y="565.0" width="1.5" height="7.0" fill="#e0e8f0" />
<rect x="906.9" y="562.5" width="1.5" height="9.5" fill="#e0e8f0" />
<rect x="909.2" y="560.0" width="1.5" height="12.0" fill="#e0e8f0" />
<path d="M919,558 h3 l4,-3 v14 l-4,-3 h-3 Z" fill="#e0e8f0" />
<path d="M928,558 q2,3 0,6" fill="none" stroke="#e0e8f0" stroke-width="1" />
<text x="941" y="566" font-family="Liberation Sans" font-size="10" fill="#e0e8f0" textLength="19" lengthAdjust="spacingAndGlyphs" stroke="#e0e8f0" stroke-width="0.2" >РУС</text>
<text x="1002" y="561" font-family="Liberation Sans" font-size="10" fill="#e0e8f0" text-anchor="end" textLength="21" lengthAdjust="spacingAndGlyphs" stroke="#e0e8f0" stroke-width="0.2" >16:14</text>
<text x="1011" y="573" font-family="Liberation Sans" font-size="10" fill="#e0e8f0" text-anchor="end" textLength="41" lengthAdjust="spacingAndGlyphs" stroke="#e0e8f0" stroke-width="0.2" >28.03.2016</text>
<line x1="796.5" y1="40" x2="796.5" y2="104" stroke="#e1e1e1" stroke-width="1" />
<rect x="800" y="40" width="38" height="51" fill="#f8cdb8" />
<rect x="808.5" y="44.5" width="11" height="11" fill="#ffffff" stroke="#9a9a9a" stroke-width="1" />
<path d="M809,55 L811.5,51 L813.5,53 L815.5,50 L819,55 Z" fill="#3d7cc9" />
<circle cx="815.5" cy="47.5" r="1" fill="#f0b030"/>
<path d="M808.5,55.5 V63.5 H822 M820,44.5 H827.5 V57" fill="none" stroke="#777" stroke-width="1" stroke-dasharray="1.5,1"/>
<path d="M825,57 V64.5 H830 M822,61.5 H827.5 V66.5" fill="none" stroke="#555" stroke-width="1.3" />
<text x="801.9" y="77.5" font-family="Liberation Sans" font-size="10" fill="#505050" textLength="33.5" lengthAdjust="spacingAndGlyphs" stroke="#505050" stroke-width="0.2" >Обрезка</text>
<path d="M817,85 L821,85 L819,87 Z" fill="#444" />
<path d="M842.5,48 V60 M840.5,50 L842.5,48 L844.5,50 M840.5,58 L842.5,60 L844.5,58" fill="none" stroke="#3d7cc9" stroke-width="1.3" />
<rect x="849.5" y="48.5" width="3" height="11" fill="#ffffff" stroke="#777" stroke-width="1" />
<rect x="854.5" y="46.5" width="53" height="16" fill="#ffffff" stroke="#c6c6c6" stroke-width="1" />
<text x="857" y="57.3" font-family="Liberation Sans" font-size="10" fill="#444444" textLength="34" lengthAdjust="spacingAndGlyphs" stroke="#444444" stroke-width="0.2" >23,05 см</text>
<path d="M899,52 L901.5,49 L904,52 Z" fill="#666" />
<path d="M899,56.5 L901.5,59.5 L904,56.5 Z" fill="#666" />
<rect x="840.5" y="71.5" width="12" height="4" fill="#ffffff" stroke="#777" stroke-width="1" />
<path d="M840,80 H852 M842,78 L840,80 L842,82 M850,78 L852,80 L850,82" fill="none" stroke="#3d7cc9" stroke-width="1.3" />
<rect x="854.5" y="69.5" width="53" height="16" fill="#ffffff" stroke="#c6c6c6" stroke-width="1" />
<text x="857" y="80.8" font-family="Liberation Sans" font-size="10" fill="#444444" textLength="34" lengthAdjust="spacingAndGlyphs" stroke="#444444" stroke-width="0.2" >34,58 см</text>
<path d="M899,75 L901.5,72 L904,75 Z" fill="#666" />
<path d="M899,79.5 L901.5,82.5 L904,79.5 Z" fill="#666" />
<line x1="911.5" y1="40" x2="911.5" y2="104" stroke="#e1e1e1" stroke-width="1" />
<rect x="802" y="94" width="125" height="94" fill="#000" opacity="0.08"/>
<rect x="800.5" y="92.5" width="125" height="93" fill="#ffffff" stroke="#c6c6c6" stroke-width="1" />
<path d="M808.5,96 V105 H817 M805,99.5 H813.5 V108" fill="none" stroke="#444" stroke-width="1.5" />
<text x="824.8" y="106" font-family="Liberation Sans" font-size="10" fill="#505050" textLength="34" lengthAdjust="spacingAndGlyphs" stroke="#505050" stroke-width="0.2" >Обрезка</text>
<rect x="801" y="111" width="124" height="17.5" fill="#fce4dc" />
<path d="M805.5,113.5 h7 v6 h-7 Z" fill="none" stroke="#3d7cc9" stroke-width="1.2" />
<circle cx="812" cy="115.5" r="3.6" fill="#fce4dc" stroke="#3d7cc9" stroke-width="1.2"/>
<path d="M810.5,117 l3,3 l-3,3 l-3,-3 Z" fill="#ffffff" stroke="#3d7cc9" stroke-width="1.2" />
<text x="824.8" y="124" font-family="Liberation Sans" font-size="10" fill="#505050" textLength="83" lengthAdjust="spacingAndGlyphs" stroke="#505050" stroke-width="0.2" >Обрезать по фигуре</text>
<path d="M915,117 L918,120 L915,123 Z" fill="#555" />
<text x="824.8" y="142" font-family="Liberation Sans" font-size="10" fill="#505050" textLength="46" lengthAdjust="spacingAndGlyphs" stroke="#505050" stroke-width="0.2" >Пропорции</text>
<path d="M915,135 L918,138 L915,141 Z" fill="#555" />
<line x1="824" y1="147.5" x2="925" y2="147.5" stroke="#e1e1e1" stroke-width="1" />
<rect x="804" y="152" width="12" height="10" fill="#ffffff" />
<path d="M804,162 L808,156 L811,159 L813,157 L816,162 Z" fill="#3d7cc9" />
<path d="M804.5,152.5 h2 M813.5,152.5 h2 M804.5,161.5 h2 M813.5,161.5 h2" fill="none" stroke="#777" stroke-width="1" />
<circle cx="812" cy="154.5" r="1" fill="#f0b030"/>
<text x="824.8" y="161" font-family="Liberation Sans" font-size="10" fill="#505050" textLength="36" lengthAdjust="spacingAndGlyphs" stroke="#505050" stroke-width="0.2" >Заливка</text>
<rect x="804.5" y="170.5" width="11" height="9" fill="none" stroke="#777" stroke-width="1" stroke-dasharray="1,1"/>
<path d="M808,179 L810,176 L812,179 Z" fill="#3d7cc9" />
<rect x="807" y="172" width="6" height="7" fill="none" stroke="#888" stroke-width="1" />
<text x="824.8" y="179" font-family="Liberation Sans" font-size="10" fill="#505050" textLength="34" lengthAdjust="spacingAndGlyphs" stroke="#505050" stroke-width="0.2" >Вписать</text>
<line x1="833" y1="108" x2="838" y2="108" stroke="#444" stroke-width="1" />
<line x1="877.5" y1="126" x2="883.5" y2="126" stroke="#444" stroke-width="1" />
<line x1="825" y1="144" x2="830" y2="144" stroke="#444" stroke-width="1" />
<line x1="825" y1="163" x2="830" y2="163" stroke="#444" stroke-width="1" />
<line x1="825" y1="181" x2="830" y2="181" stroke="#444" stroke-width="1" />
<rect x="800" y="185" width="26" height="5" fill="#f4f4f4" />
<line x1="801" y1="190.5" x2="817" y2="190.5" stroke="#bcbcbc" stroke-width="1" />
<circle cx="816.5" cy="190" r="3.5" fill="#ffffff" stroke="#9a9a9a"/>
<rect x="607" y="113" width="197" height="404" fill="#000" opacity="0.10"/>
<rect x="605.5" y="111.5" width="195" height="402" fill="#ffffff" stroke="#c6c6c6" stroke-width="1" />
<rect x="606" y="113" width="181" height="16" fill="#ececec" />
<text x="613.5" y="124.5" font-family="Liberation Sans" font-size="9" fill="#666666" font-weight="700" textLength="75" lengthAdjust="spacingAndGlyphs" >Прямоугольники</text>
<rect x="606" y="146" width="181" height="16" fill="#ececec" />
<text x="613.5" y="157.5" font-family="Liberation Sans" font-size="9" fill="#666666" font-weight="700" textLength="77" lengthAdjust="spacingAndGlyphs" >Основные фигуры</text>
<rect x="606" y="223" width="181" height="16" fill="#ececec" />
<text x="613.5" y="234.5" font-family="Liberation Sans" font-size="9" fill="#666666" font-weight="700" textLength="82" lengthAdjust="spacingAndGlyphs" >Фигурные стрелки</text>
<rect x="606" y="285" width="181" height="16" fill="#ececec" />
<text x="613.5" y="296.5" font-family="Liberation Sans" font-size="9" fill="#666666" font-weight="700" textLength="101" lengthAdjust="spacingAndGlyphs" >Фигуры для уравнений</text>
<rect x="606" y="317" width="181" height="16" fill="#ececec" />
<text x="613.5" y="328.5" font-family="Liberation Sans" font-size="9" fill="#666666" font-weight="700" textLength="52" lengthAdjust="spacingAndGlyphs" >Блок-схема</text>
<rect x="606" y="380" width="181" height="16" fill="#ececec" />
<text x="613.5" y="391.5" font-family="Liberation Sans" font-size="9" fill="#666666" font-weight="700" textLength="70" lengthAdjust="spacingAndGlyphs" >Звезды и ленты</text>
<rect x="606" y="427" width="181" height="16" fill="#ececec" />
<text x="613.5" y="438.5" font-family="Liberation Sans" font-size="9" fill="#666666" font-weight="700" textLength="40" lengthAdjust="spacingAndGlyphs" >Выноски</text>
<rect x="606" y="474" width="181" height="16" fill="#ececec" />
<text x="613.5" y="485.5" font-family="Liberation Sans" font-size="9" fill="#666666" font-weight="700" textLength="94" lengthAdjust="spacingAndGlyphs" >Управляющие кнопки</text>
<path d="M608.5,133.0 H620.5 V142.0 H608.5 Z" fill="none" stroke="#7c7c7c" stroke-width="1" stroke-linejoin="round"/>
<path d="M625.5,133.0 H633.5 Q635.5,133.0 635.5,135.0 V140.0 Q635.5,142.0 633.5,142.0 H625.5 Q623.5,142.0 623.5,140.0 V135.0 Q623.5,133.0 625.5,133.0 Z" fill="none" stroke="#7c7c7c" stroke-width="1" stroke-linejoin="round"/>
<path d="M638.5,133.0 H647.5 L650.5,136.0 V142.0 H638.5 Z" fill="none" stroke="#7c7c7c" stroke-width="1" stroke-linejoin="round"/>
<path d="M656.5,133.0 H662.5 L665.5,136.0 V142.0 H653.5 V136.0 Z" fill="none" stroke="#7c7c7c" stroke-width="1" stroke-linejoin="round"/>
<path d="M668.5,133.0 H677.5 L680.5,136.0 V142.0 H671.5 L668.5,139.0 Z" fill="none" stroke="#7c7c7c" stroke-width="1" stroke-linejoin="round"/>
<path d="M685.5,133.0 H692.5 L695.5,136.0 V142.0 H683.5 V135.0 Q683.5,133.0 685.5,133.0 Z" fill="none" stroke="#7c7c7c" stroke-width="1" stroke-linejoin="round"/>
<path d="M698.5,133.0 H707.5 Q710.5,133.0 710.5,136.0 V142.0 H698.5 Z" fill="none" stroke="#7c7c7c" stroke-width="1" stroke-linejoin="round"/>
<path d="M716.5,133.0 H722.5 Q725.5,133.0 725.5,136.0 V142.0 H713.5 V136.0 Q713.5,133.0 716.5,133.0 Z" fill="none" stroke="#7c7c7c" stroke-width="1" stroke-linejoin="round"/>
<path d="M731.5,133.0 H740.5 V139.0 Q740.5,142.0 737.5,142.0 H728.5 V136.0 Q728.5,133.0 731.5,133.0 Z" fill="none" stroke="#7c7c7c" stroke-width="1" stroke-linejoin="round"/>
<rect x="607.5" y="163" width="14" height="14" fill="#fbe0d8" />
<path d="M608.5,169.5 A6,4.5 0 1 1 620.5,169.5 A6,4.5 0 1 1 608.5,169.5 Z" fill="none" stroke="#7c7c7c" stroke-width="1" stroke-linejoin="round"/>
<path d="M629.5,163.5 L635.5,174.5 H623.5 Z" fill="none" stroke="#7c7c7c" stroke-width="1" stroke-linejoin="round"/>
<path d="M638.5,163.5 L650.5,174.5 H638.5 Z" fill="none" stroke="#7c7c7c" stroke-width="1" stroke-linejoin="round"/>
<path d="M656.5,164.5 H666.5 L662.5,174.5 H652.5 Z" fill="none" stroke="#7c7c7c" stroke-width="1" stroke-linejoin="round"/>
<path d="M671.5,164.5 H677.5 L680.5,174.5 H668.5 Z" fill="none" stroke="#7c7c7c" stroke-width="1" stroke-linejoin="round"/>
<path d="M689.5,163.5 L695.5,169.5 L689.5,175.5 L683.5,169.5 Z" fill="none" stroke="#7c7c7c" stroke-width="1" stroke-linejoin="round"/>
<path d="M704.5,163.7 L710.5,168.1 L708.2,175.1 L700.8,175.1 L698.5,168.1 Z" fill="none" stroke="#7c7c7c" stroke-width="1" stroke-linejoin="round"/>
<path d="M725.8,169.5 L722.6,175.0 L716.4,175.0 L713.2,169.5 L716.4,164.0 L722.6,164.0 Z" fill="none" stroke="#7c7c7c" stroke-width="1" stroke-linejoin="round"/>
<path d="M734.5,163.2 L739.4,165.6 L740.6,170.9 L737.2,175.2 L731.8,175.2 L728.4,170.9 L729.6,165.6 Z" fill="none" stroke="#7c7c7c" stroke-width="1" stroke-linejoin="round"/>
<text x="734.5" y="171.3" font-family="Liberation Sans" font-size="5" fill="#7c7c7c" text-anchor="middle">7</text>
<path d="M749.5,163.2 L754.0,165.0 L755.8,169.5 L754.0,174.0 L749.5,175.8 L745.0,174.0 L743.2,169.5 L745.0,165.0 Z" fill="none" stroke="#7c7c7c" stroke-width="1" stroke-linejoin="round"/>
<text x="749.5" y="171.3" font-family="Liberation Sans" font-size="5" fill="#7c7c7c" text-anchor="middle">8</text>
<path d="M764.5,163.2 L768.2,164.4 L770.5,167.6 L770.5,171.4 L768.2,174.6 L764.5,175.8 L760.8,174.6 L758.5,171.4 L758.5,167.6 L760.8,164.4 Z" fill="none" stroke="#7c7c7c" stroke-width="1" stroke-linejoin="round"/>
<text x="764.5" y="171.3" font-family="Liberation Sans" font-size="5" fill="#7c7c7c" text-anchor="middle">10</text>
<path d="M779.5,163.2 L782.6,164.0 L785.0,166.3 L785.8,169.5 L785.0,172.7 L782.6,175.0 L779.5,175.8 L776.4,175.0 L774.0,172.7 L773.2,169.5 L774.0,166.3 L776.4,164.0 Z" fill="none" stroke="#7c7c7c" stroke-width="1" stroke-linejoin="round"/>
<text x="779.5" y="171.3" font-family="Liberation Sans" font-size="5" fill="#7c7c7c" text-anchor="middle">12</text>
<path d="M614.5,184.5 H620.5 A6,6 0 1 1 614.5,178.5 Z" fill="none" stroke="#7c7c7c" stroke-width="1" stroke-linejoin="round"/>
<path d="M633.5,180.0 A6,6 0 1 0 634.0,188.5 Z" fill="none" stroke="#7c7c7c" stroke-width="1" stroke-linejoin="round"/>
<path d="M644.5,178.5 H650.5 V184.5 A6,6 0 1 1 644.5,178.5 Z" fill="none" stroke="#7c7c7c" stroke-width="1" stroke-linejoin="round"/>
<path d="M653.5,178.5 H665.5 V190.5 H653.5 Z M655.5,180.5 H663.5 V188.5 H655.5 Z" fill="none" stroke="#7c7c7c" stroke-width="1" stroke-linejoin="round"/>
<path d="M668.5,178.5 H680.5 L678.5,180.5 H670.5 V188.5 L668.5,190.5 Z" fill="none" stroke="#7c7c7c" stroke-width="1" stroke-linejoin="round"/>
<path d="M684.5,178.5 H687.5 V186.5 H695.5 V190.5 H684.5 Z" fill="none" stroke="#7c7c7c" stroke-width="1" stroke-linejoin="round"/>
<path d="M707.5,178.5 H710.5 L701.5,190.5 H698.5 Z" fill="none" stroke="#7c7c7c" stroke-width="1" stroke-linejoin="round"/>
<path d="M717.5,178.5 H721.5 V182.5 H725.5 V186.5 H721.5 V190.5 H717.5 V186.5 H713.5 V182.5 H717.5 Z" fill="none" stroke="#7c7c7c" stroke-width="1" stroke-linejoin="round"/>
<path d="M731.5,178.5 H737.5 Q737.5,181.5 740.5,181.5 V187.5 Q737.5,187.5 737.5,190.5 H731.5 Q731.5,187.5 728.5,187.5 V181.5 Q731.5,181.5 731.5,178.5 Z" fill="none" stroke="#7c7c7c" stroke-width="1" stroke-linejoin="round"/>
<path d="M745.5,180.5 A4,2 0 0 1 753.5,180.5 V188.5 A4,2 0 0 1 745.5,188.5 Z M745.5,180.5 A4,2 0 0 0 753.5,180.5" fill="none" stroke="#7c7c7c" stroke-width="1" stroke-linejoin="round"/>
<path d="M758.5,181.5 L761.5,178.5 H770.5 V187.5 L767.5,190.5 H758.5 Z M758.5,181.5 H767.5 V190.5 M767.5,181.5 L770.5,178.5" fill="none" stroke="#7c7c7c" stroke-width="1" stroke-linejoin="round"/>
<path d="M773.5,178.5 H785.5 V190.5 H773.5 Z M775.5,180.5 H783.5 V188.5 H775.5 Z M773.5,178.5 L775.5,180.5 M785.5,178.5 L783.5,180.5 M773.5,190.5 L775.5,188.5 M785.5,190.5 L783.5,188.5" fill="none" stroke="#7c7c7c" stroke-width="1" stroke-linejoin="round"/>
<circle cx="614.5" cy="199.5" r="6" fill="none" stroke="#7c7c7c"/><circle cx="614.5" cy="199.5" r="3.5" fill="none" stroke="#7c7c7c"/>
<circle cx="629.5" cy="199.5" r="6" fill="none" stroke="#7c7c7c"/><circle cx="629.5" cy="199.5" r="3.8" fill="none" stroke="#7c7c7c"/>
<path d="M627.0,196.5 L632.5,202.0 M626.5,197.5 L631.5,202.5" fill="none" stroke="#7c7c7c" stroke-width="1" stroke-linejoin="round"/>
<path d="M638.5,202.5 A6,6 0 0 1 650.5,202.5 H648.0 A3.5,3.5 0 0 0 641.0,202.5 Z" fill="none" stroke="#7c7c7c" stroke-width="1" stroke-linejoin="round"/>
<path d="M654.5,194.5 H664.5 V201.5 L661.5,204.5 H654.5 Z M661.5,204.5 L662.0,202.0 L664.5,201.5" fill="none" stroke="#7c7c7c" stroke-width="1" stroke-linejoin="round"/>
<circle cx="674.5" cy="199.5" r="6" fill="none" stroke="#7c7c7c"/>
<path d="M671.5,201.5 Q674.5,204.5 677.5,201.5 M672.5,197.5 h0.5 M676.5,197.5 h0.5" fill="none" stroke="#7c7c7c" stroke-width="1.2" stroke-linejoin="round"/>
<path d="M689.5,205.5 L684.0,199.0 A3,3 0 0 1 689.5,195.5 A3,3 0 0 1 695.0,199.0 Z" fill="none" stroke="#7c7c7c" stroke-width="1" stroke-linejoin="round"/>
<path d="M699.5,194.5 L703.5,193.5 L705.5,198.5 L704.5,199.0 L707.5,202.5 L706.5,203.0 L710.5,205.5 L704.5,201.5 L705.5,201.0 L701.5,198.5 L702.5,198.0 Z" fill="none" stroke="#7c7c7c" stroke-width="1" stroke-linejoin="round"/>
<circle cx="719.5" cy="199.5" r="3" fill="none" stroke="#7c7c7c"/>
<path d="M723.7,199.5 L725.8,199.5 M722.5,202.5 L724.0,204.0 M719.5,203.7 L719.5,205.8 M716.5,202.5 L715.0,204.0 M715.3,199.5 L713.2,199.5 M716.5,196.5 L715.0,195.0 M719.5,195.3 L719.5,193.2 M722.5,196.5 L724.0,195.0" fill="none" stroke="#7c7c7c" stroke-width="1" stroke-linejoin="round"/>
<path d="M737.5,193.5 A6,6 0 1 0 737.5,205.5 A4.5,6 0 0 1 737.5,193.5 Z" fill="none" stroke="#7c7c7c" stroke-width="1" stroke-linejoin="round"/>
<path d="M745.5,203.5 Q742.5,201.5 744.5,198.5 Q744.5,194.5 748.5,195.5 Q750.5,193.5 752.5,195.5 Q756.5,195.5 755.5,199.5 Q756.5,203.5 752.5,203.5 Q749.5,205.5 745.5,203.5 Z" fill="none" stroke="#7c7c7c" stroke-width="1" stroke-linejoin="round"/>
<path d="M758.5,194.5 Q767.5,194.5 770.5,204.5" fill="none" stroke="#7c7c7c" stroke-width="1" stroke-linejoin="round"/>
<path d="M776.5,193.5 Q773.5,193.5 773.5,196.5 V202.5 Q773.5,205.5 776.5,205.5 M782.5,193.5 Q785.5,193.5 785.5,196.5 V202.5 Q785.5,205.5 782.5,205.5" fill="none" stroke="#7c7c7c" stroke-width="1" stroke-linejoin="round"/>
<path d="M611.5,208.5 Q609.5,208.5 609.5,211.5 V213.5 L608.0,214.5 L609.5,215.5 V217.5 Q609.5,220.5 611.5,220.5 M617.5,208.5 Q619.5,208.5 619.5,211.5 V213.5 L621.0,214.5 L619.5,215.5 V217.5 Q619.5,220.5 617.5,220.5" fill="none" stroke="#7c7c7c" stroke-width="1" stroke-linejoin="round"/>
<path d="M631.5,208.5 Q628.5,208.5 628.5,211.5 V217.5 Q628.5,220.5 631.5,220.5" fill="none" stroke="#7c7c7c" stroke-width="1" stroke-linejoin="round"/>
<path d="M642.5,208.5 Q645.5,208.5 645.5,211.5 V217.5 Q645.5,220.5 642.5,220.5" fill="none" stroke="#7c7c7c" stroke-width="1" stroke-linejoin="round"/>
<path d="M661.0,209.5 Q659.0,209.5 659.0,212.5 L657.5,214.5 L659.0,215.5 Q659.0,219.5 661.0,219.5" fill="none" stroke="#7c7c7c" stroke-width="1" stroke-linejoin="round"/>
<path d="M673.0,209.5 Q675.0,209.5 675.0,212.5 L676.5,214.5 L675.0,215.5 Q675.0,219.5 673.0,219.5" fill="none" stroke="#7c7c7c" stroke-width="1" stroke-linejoin="round"/>
<path d="M608.5,244.5 H614.5 V241 L620.5,247 L614.5,253 V249.5 H608.5 Z" fill="none" stroke="#7c7c7c" stroke-width="1" stroke-linejoin="round"/>
<path d="M635.5,244.5 H629.5 V241 L623.5,247 L629.5,253 V249.5 H635.5 Z" fill="none" stroke="#7c7c7c" stroke-width="1" stroke-linejoin="round"/>
<path d="M642.0,253 V247 H638.5 L644.5,241 L650.5,247 H647.0 V253 Z" fill="none" stroke="#7c7c7c" stroke-width="1" stroke-linejoin="round"/>
<path d="M657.0,241 V247 H653.5 L659.5,253 L665.5,247 H662.0 V241 Z" fill="none" stroke="#7c7c7c" stroke-width="1" stroke-linejoin="round"/>
<path d="M668.5,247 L672.0,242 V245 H677.0 V242 L680.5,247 L677.0,252 V249 H672.0 V252 Z" fill="none" stroke="#7c7c7c" stroke-width="1" stroke-linejoin="round"/>
<path d="M689.5,241 L694.5,244.5 H691.5 V249.5 H694.5 L689.5,253 L684.5,249.5 H687.5 V244.5 H684.5 Z" fill="none" stroke="#7c7c7c" stroke-width="1" stroke-linejoin="round"/>
<path d="M704.5,241 L707.0,243.5 H705.5 V246 H708.0 V244.5 L710.5,247 L708.0,249.5 V248 H705.5 V250.5 H707.0 L704.5,253 L702.0,250.5 H703.5 V248 H701.0 V249.5 L698.5,247 L701.0,244.5 V246 H703.5 V243.5 H702.0 Z" fill="none" stroke="#7c7c7c" stroke-width="1" stroke-linejoin="round"/>
<path d="M719.5,241 L722.0,244 H720.5 V248 H723.0 V246 L725.5,249 L723.0,252 V250 H716.0 V252 L713.5,249 L716.0,246 V248 H718.5 V244 H717.0 Z" fill="none" stroke="#7c7c7c" stroke-width="1" stroke-linejoin="round"/>
<path d="M728.5,253 V246 Q728.5,244 730.5,244 H736.5 V241 L740.5,245 L736.5,249 V247 H731.5 V253 Z" fill="none" stroke="#7c7c7c" stroke-width="1" stroke-linejoin="round"/>
<path d="M744.5,253 V245 A4,4 0 0 1 752.5,245 V247 H754.5 L751.0,251 L747.5,247 H749.5 V245 A1.5,1.5 0 0 0 747.5,245 V253 Z" fill="none" stroke="#7c7c7c" stroke-width="1" stroke-linejoin="round"/>
<path d="M758.5,250 L761.5,247 V248.5 H765.5 V244 H763.5 L767.0,241 L770.5,244 H768.5 V251.5 H761.5 V253 Z" fill="none" stroke="#7c7c7c" stroke-width="1" stroke-linejoin="round"/>
<path d="M773.5,249 H780.5 V245 H778.5 L782.0,241 L785.5,245 H783.5 V252 H773.5 Z" fill="none" stroke="#7c7c7c" stroke-width="1" stroke-linejoin="round"/>
<path d="M615.5,256 Q608.5,258 609.5,263 Q611.5,267 616.5,267 L615.5,268.5 L619.5,266 L616.5,263 L616.5,265 Q612.5,265 611.5,262 Q611.5,258 615.5,256" fill="none" stroke="#7c7c7c" stroke-width="1" stroke-linejoin="round"/>
<path d="M628.5,256 Q635.5,258 634.5,263 Q632.5,267 627.5,267 L628.5,268.5 L624.5,266 L627.5,263 L627.5,265 Q631.5,265 632.5,262 Q632.5,258 628.5,256" fill="none" stroke="#7c7c7c" stroke-width="1" stroke-linejoin="round"/>
<path d="M638.5,257 Q640.5,266 645.5,265 L647.5,263 L650.5,257 L645.5,259 L646.5,261 Q642.5,263 641.5,257" fill="none" stroke="#7c7c7c" stroke-width="1" stroke-linejoin="round"/>
<path d="M653.5,267 Q655.5,258 660.5,259 L662.5,261 L665.5,267 L660.5,265 L661.5,263 Q657.5,261 656.5,267" fill="none" stroke="#7c7c7c" stroke-width="1" stroke-linejoin="round"/>
<path d="M671.5,259.5 H674.5 V256 L680.5,262 L674.5,268 V264.5 H671.5 Z M668.5,259.5 H669.5 V264.5 H668.5 Z" fill="none" stroke="#7c7c7c" stroke-width="1" stroke-linejoin="round"/>
<path d="M683.5,259.5 H689.5 V256 L695.5,262 L689.5,268 V264.5 H683.5 L685.5,262 Z" fill="none" stroke="#7c7c7c" stroke-width="1" stroke-linejoin="round"/>
<path d="M698.5,258 H707.5 L710.5,262 L707.5,266 H698.5 Z" fill="none" stroke="#7c7c7c" stroke-width="1" stroke-linejoin="round"/>
<path d="M713.5,258 H721.5 L725.5,262 L721.5,266 H713.5 L717.5,262 Z" fill="none" stroke="#7c7c7c" stroke-width="1" stroke-linejoin="round"/>
<path d="M728.5,256 H734.5 V260 H737.5 V258 L741.0,262 L737.5,266 V264 H734.5 V268 H728.5 Z" fill="none" stroke="#7c7c7c" stroke-width="1" stroke-linejoin="round"/>
<path d="M743.5,256 H755.5 V262 H751.5 V264 H753.5 L749.5,268 L745.5,264 H747.5 V262 H743.5 Z" fill="none" stroke="#7c7c7c" stroke-width="1" stroke-linejoin="round"/>
<path d="M770.5,256 H764.5 V260 H761.5 V258 L758.0,262 L761.5,266 V264 H764.5 V268 H770.5 Z" fill="none" stroke="#7c7c7c" stroke-width="1" stroke-linejoin="round"/>
<path d="M773.5,268 H785.5 V262 H781.5 V260 H783.5 L779.5,256 L775.5,260 H777.5 V262 H773.5 Z" fill="none" stroke="#7c7c7c" stroke-width="1" stroke-linejoin="round"/>
<path d="M612.5,271 H616.5 V274 H618.5 V276 H620.5 V278 H618.5 V280 H616.5 V283 H612.5 V280 H610.5 V278 H608.5 V276 H610.5 V274 H612.5 Z" fill="none" stroke="#7c7c7c" stroke-width="1" stroke-linejoin="round"/>
<path d="M629.5,270.5 L631.6,274.9 L636.0,277.0 L631.6,279.1 L629.5,283.5 L627.4,279.1 L623.0,277.0 L627.4,274.9 Z" fill="none" stroke="#7c7c7c" stroke-width="1" stroke-linejoin="round"/>
<path d="M639.5,281 V276 A4,4 0 0 1 647.5,276 V278 H649.5 L646.5,282 L643.5,278 H645.5 V276 A2,2 0 0 0 641.5,276 V281 Z" fill="none" stroke="#7c7c7c" stroke-width="1" stroke-linejoin="round"/>
<path d="M612.7,303 H616.3 V307.2 H620.5 V310.8 H616.3 V315 H612.7 V310.8 H608.5 V307.2 H612.7 Z" fill="none" stroke="#7c7c7c" stroke-width="1" stroke-linejoin="round"/>
<path d="M623.5,307.2 H635.5 V310.8 H623.5 Z" fill="none" stroke="#7c7c7c" stroke-width="1" stroke-linejoin="round"/>
<path d="M640.0,303 L644.5,307.5 L649.0,303 L650.5,304.5 L646.0,309 L650.5,313.5 L649.0,315 L644.5,310.5 L640.0,315 L638.5,313.5 L643.0,309 L638.5,304.5 Z" fill="none" stroke="#7c7c7c" stroke-width="1" stroke-linejoin="round"/>
<path d="M653.5,307.5 H665.5 V310.5 H653.5 Z M658.0,303 h3 v3 h-3 Z M658.0,312 h3 v3 h-3 Z" fill="none" stroke="#7c7c7c" stroke-width="1" stroke-linejoin="round"/>
<path d="M668.5,304 H680.5 V308 H668.5 Z M668.5,310 H680.5 V314 H668.5 Z" fill="none" stroke="#7c7c7c" stroke-width="1" stroke-linejoin="round"/>
<path d="M683.5,304 H695.5 V308 H683.5 Z M683.5,310 H695.5 V314 H683.5 Z M693.5,302 L685.5,316" fill="none" stroke="#7c7c7c" stroke-width="1" stroke-linejoin="round"/>
<path d="M608.5,337 H620.5 V347 H608.5 Z" fill="none" stroke="#7c7c7c" stroke-width="1" stroke-linejoin="round"/>
<path d="M625.5,337 H633.5 Q635.5,337 635.5,339 V345 Q635.5,347 633.5,347 H625.5 Q623.5,347 623.5,345 V339 Q623.5,337 625.5,337 Z" fill="none" stroke="#7c7c7c" stroke-width="1" stroke-linejoin="round"/>
<path d="M638.5,342 L644.5,338 L650.5,342 L644.5,346 Z" fill="none" stroke="#7c7c7c" stroke-width="1" stroke-linejoin="round"/>
<path d="M656.5,337 H665.5 L662.5,347 H653.5 Z" fill="none" stroke="#7c7c7c" stroke-width="1" stroke-linejoin="round"/>
<path d="M668.5,337 H680.5 V347 H668.5 Z M670.5,337 V347 M678.5,337 V347" fill="none" stroke="#7c7c7c" stroke-width="1" stroke-linejoin="round"/>
<path d="M683.5,337 H695.5 V347 H683.5 Z M685.5,337 V347 M683.5,339 H695.5" fill="none" stroke="#7c7c7c" stroke-width="1" stroke-linejoin="round"/>
<path d="M698.5,337 H710.5 V345 Q706.5,344 704.5,346 Q701.5,348 698.5,346 Z" fill="none" stroke="#7c7c7c" stroke-width="1" stroke-linejoin="round"/>
<path d="M713.5,339 H723.5 V346 Q719.5,345 717.5,347 Q715.5,348 713.5,347 Z M715.5,339 V337 H725.5 V344 H723.5" fill="none" stroke="#7c7c7c" stroke-width="1" stroke-linejoin="round"/>
<path d="M731.5,339 H737.5 A3,3 0 0 1 737.5,345 H731.5 A3,3 0 0 1 731.5,339 Z" fill="none" stroke="#7c7c7c" stroke-width="1" stroke-linejoin="round"/>
<path d="M743.5,342 L746.5,338 H752.5 L755.5,342 L752.5,346 H746.5 Z" fill="none" stroke="#7c7c7c" stroke-width="1" stroke-linejoin="round"/>
<path d="M758.5,340 L770.5,337 V347 H758.5 Z" fill="none" stroke="#7c7c7c" stroke-width="1" stroke-linejoin="round"/>
<path d="M773.5,337 H785.5 L782.5,347 H776.5 Z" fill="none" stroke="#7c7c7c" stroke-width="1" stroke-linejoin="round"/>
<circle cx="614.5" cy="356.5" r="3.5" fill="none" stroke="#7c7c7c"/>
<path d="M625.5,351.5 H633.5 V358.5 L629.5,361.5 L625.5,358.5 Z" fill="none" stroke="#7c7c7c" stroke-width="1" stroke-linejoin="round"/>
<path d="M641.5,351.5 H650.5 V361.5 H638.5 V354.5 Z" fill="none" stroke="#7c7c7c" stroke-width="1" stroke-linejoin="round"/>
<path d="M653.5,352.5 Q656.5,355.5 659.5,352.5 Q662.5,349.5 665.5,352.5 V360.5 Q662.5,357.5 659.5,360.5 Q656.5,363.5 653.5,360.5 Z" fill="none" stroke="#7c7c7c" stroke-width="1" stroke-linejoin="round"/>
<circle cx="674.5" cy="356.5" r="6" fill="none" stroke="#7c7c7c"/>
<path d="M670.3,352.3 L678.7,360.7 M678.7,352.3 L670.3,360.7" fill="none" stroke="#7c7c7c" stroke-width="1" stroke-linejoin="round"/>
<circle cx="689.5" cy="356.5" r="6" fill="none" stroke="#7c7c7c"/>
<path d="M683.5,356.5 H695.5 M689.5,350.5 V362.5" fill="none" stroke="#7c7c7c" stroke-width="1" stroke-linejoin="round"/>
<path d="M701.0,350.5 H708.0 L701.0,362.5 H708.0 Z" fill="none" stroke="#7c7c7c" stroke-width="1" stroke-linejoin="round"/>
<path d="M719.5,350.5 L723.0,356.5 L719.5,362.5 L716.0,356.5 Z M716.0,356.5 H723.0" fill="none" stroke="#7c7c7c" stroke-width="1" stroke-linejoin="round"/>
<path d="M734.5,351.5 L739.5,361.5 H729.5 Z" fill="none" stroke="#7c7c7c" stroke-width="1" stroke-linejoin="round"/>
<path d="M744.5,351.5 H754.5 L749.5,361.5 Z" fill="none" stroke="#7c7c7c" stroke-width="1" stroke-linejoin="round"/>
<path d="M761.5,351.5 H770.5 Q767.5,351.5 767.5,356.5 Q767.5,361.5 770.5,361.5 H761.5 Q758.5,361.5 758.5,356.5 Q758.5,351.5 761.5,351.5 Z" fill="none" stroke="#7c7c7c" stroke-width="1" stroke-linejoin="round"/>
<path d="M773.5,351.5 H779.5 A5,5 0 0 1 779.5,361.5 H773.5 Z" fill="none" stroke="#7c7c7c" stroke-width="1" stroke-linejoin="round"/>
<path d="M618.4,374.9 A5.5,5.5 0 1 0 614.5,376.5 H620.5" fill="none" stroke="#7c7c7c" stroke-width="1" stroke-linejoin="round"/>
<path d="M623.5,368 A6,2 0 0 1 635.5,368 V374 A6,2 0 0 1 623.5,374 Z M623.5,368 A6,2 0 0 0 635.5,368" fill="none" stroke="#7c7c7c" stroke-width="1" stroke-linejoin="round"/>
<path d="M641.5,365 H647.5 A2,6 0 0 1 647.5,377 H641.5 A2,6 0 0 1 641.5,365 Z M647.5,365 A2,6 0 0 0 647.5,377" fill="none" stroke="#7c7c7c" stroke-width="1" stroke-linejoin="round"/>
<path d="M653.5,371 L656.5,365 H661.5 A4,6 0 0 1 661.5,377 H656.5 Z" fill="none" stroke="#7c7c7c" stroke-width="1" stroke-linejoin="round"/>
<path d="M615.6,396.6 L616.1,399.9 L619.2,398.5 L617.6,401.5 L620.9,402.1 L617.9,403.6 L620.2,406.1 L616.9,405.5 L617.3,408.8 L615.0,406.5 L613.4,409.4 L612.9,406.1 L609.8,407.5 L611.4,404.5 L608.1,403.9 L611.1,402.4 L608.8,399.9 L612.1,400.5 L611.7,397.2 L614.0,399.5 Z" fill="none" stroke="#7c7c7c" stroke-width="1" stroke-linejoin="round"/>
<path d="M632.8,397.4 L632.4,400.2 L635.3,400.0 L633.4,402.2 L636.0,403.6 L633.2,404.5 L634.6,407.0 L631.8,406.3 L631.6,409.1 L629.7,407.0 L628.0,409.3 L627.5,406.5 L624.8,407.5 L625.9,404.8 L623.1,404.2 L625.5,402.6 L623.5,400.6 L626.4,400.5 L625.7,397.7 L628.2,399.2 L629.2,396.5 L630.4,399.1 Z" fill="none" stroke="#7c7c7c" stroke-width="1" stroke-linejoin="round"/>
<path d="M644.5,396.5 L645.8,401.7 L651.0,403.0 L645.8,404.3 L644.5,409.5 L643.2,404.3 L638.0,403.0 L643.2,401.7 Z" fill="none" stroke="#7c7c7c" stroke-width="1" stroke-linejoin="round"/>
<path d="M659.5,397.0 L661.1,401.2 L665.7,401.5 L662.2,404.4 L663.3,408.8 L659.5,406.3 L655.7,408.8 L656.8,404.4 L653.3,401.5 L657.9,401.2 Z" fill="none" stroke="#7c7c7c" stroke-width="1" stroke-linejoin="round"/>
<path d="M674.5,396.5 L676.4,399.7 L680.1,399.8 L678.3,403.0 L680.1,406.2 L676.4,406.3 L674.5,409.5 L672.6,406.3 L668.9,406.2 L670.7,403.0 L668.9,399.8 L672.6,399.7 Z" fill="none" stroke="#7c7c7c" stroke-width="1" stroke-linejoin="round"/>
<path d="M689.5,396.5 L691.2,399.4 L694.6,398.9 L693.4,402.1 L695.8,404.4 L692.6,405.5 L692.3,408.9 L689.5,407.0 L686.7,408.9 L686.4,405.5 L683.2,404.4 L685.6,402.1 L684.4,398.9 L687.8,399.4 Z" fill="none" stroke="#7c7c7c" stroke-width="1" stroke-linejoin="round"/>
<path d="M704.5,396.5 L706.5,398.2 L709.1,398.4 L709.3,401.0 L711.0,403.0 L709.3,405.0 L709.1,407.6 L706.5,407.8 L704.5,409.5 L702.5,407.8 L699.9,407.6 L699.7,405.0 L698.0,403.0 L699.7,401.0 L699.9,398.4 L702.5,398.2 Z" fill="none" stroke="#7c7c7c" stroke-width="1" stroke-linejoin="round"/>
<circle cx="704.5" cy="403" r="3.6" fill="none" stroke="#7c7c7c" stroke-width="0.8"/>
<text x="704.5" y="404.8" font-family="Liberation Sans" font-size="5" fill="#7c7c7c" text-anchor="middle">8</text>
<path d="M719.5,396.5 L721.1,398.1 L723.3,397.7 L723.7,399.9 L725.7,401.0 L724.7,403.0 L725.7,405.0 L723.7,406.1 L723.3,408.3 L721.1,407.9 L719.5,409.5 L717.9,407.9 L715.7,408.3 L715.3,406.1 L713.3,405.0 L714.3,403.0 L713.3,401.0 L715.3,399.9 L715.7,397.7 L717.9,398.1 Z" fill="none" stroke="#7c7c7c" stroke-width="1" stroke-linejoin="round"/>
<circle cx="719.5" cy="403" r="3.6" fill="none" stroke="#7c7c7c" stroke-width="0.8"/>
<text x="719.5" y="404.8" font-family="Liberation Sans" font-size="5" fill="#7c7c7c" text-anchor="middle">10</text>
<path d="M734.5,396.5 L735.8,398.0 L737.8,397.4 L738.2,399.3 L740.1,399.8 L739.5,401.7 L741.0,403.0 L739.5,404.3 L740.1,406.2 L738.2,406.7 L737.8,408.6 L735.8,408.0 L734.5,409.5 L733.2,408.0 L731.2,408.6 L730.8,406.7 L728.9,406.2 L729.5,404.3 L728.0,403.0 L729.5,401.7 L728.9,399.8 L730.8,399.3 L731.2,397.4 L733.2,398.0 Z" fill="none" stroke="#7c7c7c" stroke-width="1" stroke-linejoin="round"/>
<circle cx="734.5" cy="403" r="3.6" fill="none" stroke="#7c7c7c" stroke-width="0.8"/>
<text x="734.5" y="404.8" font-family="Liberation Sans" font-size="5" fill="#7c7c7c" text-anchor="middle">12</text>
<path d="M749.5,396.5 L750.5,397.9 L752.0,397.0 L752.4,398.7 L754.1,398.4 L753.8,400.1 L755.5,400.5 L754.6,402.0 L756.0,403.0 L754.6,404.0 L755.5,405.5 L753.8,405.9 L754.1,407.6 L752.4,407.3 L752.0,409.0 L750.5,408.1 L749.5,409.5 L748.5,408.1 L747.0,409.0 L746.6,407.3 L744.9,407.6 L745.2,405.9 L743.5,405.5 L744.4,404.0 L743.0,403.0 L744.4,402.0 L743.5,400.5 L745.2,400.1 L744.9,398.4 L746.6,398.7 L747.0,397.0 L748.5,397.9 Z" fill="none" stroke="#7c7c7c" stroke-width="1" stroke-linejoin="round"/>
<circle cx="749.5" cy="403" r="3.6" fill="none" stroke="#7c7c7c" stroke-width="0.8"/>
<text x="749.5" y="404.8" font-family="Liberation Sans" font-size="5" fill="#7c7c7c" text-anchor="middle">16</text>
<path d="M764.5,396.5 L765.2,397.8 L766.2,396.7 L766.5,398.2 L767.8,397.4 L767.7,398.9 L769.1,398.4 L768.6,399.8 L770.1,399.8 L769.3,401.0 L770.8,401.3 L769.7,402.3 L771.0,403.0 L769.7,403.7 L770.8,404.7 L769.3,405.0 L770.1,406.2 L768.6,406.2 L769.1,407.6 L767.7,407.1 L767.8,408.6 L766.5,407.8 L766.2,409.3 L765.2,408.2 L764.5,409.5 L763.8,408.2 L762.8,409.3 L762.5,407.8 L761.2,408.6 L761.3,407.1 L759.9,407.6 L760.4,406.2 L758.9,406.2 L759.7,405.0 L758.2,404.7 L759.3,403.7 L758.0,403.0 L759.3,402.3 L758.2,401.3 L759.7,401.0 L758.9,399.8 L760.4,399.8 L759.9,398.4 L761.3,398.9 L761.2,397.4 L762.5,398.2 L762.8,396.7 L763.8,397.8 Z" fill="none" stroke="#7c7c7c" stroke-width="1" stroke-linejoin="round"/>
<circle cx="764.5" cy="403" r="3.6" fill="none" stroke="#7c7c7c" stroke-width="0.8"/>
<text x="764.5" y="404.8" font-family="Liberation Sans" font-size="5" fill="#7c7c7c" text-anchor="middle">24</text>
<path d="M779.5,396.5 L780.0,397.8 L780.8,396.6 L781.0,398.0 L782.0,397.0 L782.0,398.4 L783.1,397.6 L782.8,399.0 L784.1,398.4 L783.5,399.7 L784.9,399.4 L784.1,400.5 L785.5,400.5 L784.5,401.5 L785.9,401.7 L784.7,402.5 L786.0,403.0 L784.7,403.5 L785.9,404.3 L784.5,404.5 L785.5,405.5 L784.1,405.5 L784.9,406.6 L783.5,406.3 L784.1,407.6 L782.8,407.0 L783.1,408.4 L782.0,407.6 L782.0,409.0 L781.0,408.0 L780.8,409.4 L780.0,408.2 L779.5,409.5 L779.0,408.2 L778.2,409.4 L778.0,408.0 L777.0,409.0 L777.0,407.6 L775.9,408.4 L776.2,407.0 L774.9,407.6 L775.5,406.3 L774.1,406.6 L774.9,405.5 L773.5,405.5 L774.5,404.5 L773.1,404.3 L774.3,403.5 L773.0,403.0 L774.3,402.5 L773.1,401.7 L774.5,401.5 L773.5,400.5 L774.9,400.5 L774.1,399.4 L775.5,399.7 L774.9,398.4 L776.2,399.0 L775.9,397.6 L777.0,398.4 L777.0,397.0 L778.0,398.0 L778.2,396.6 L779.0,397.8 Z" fill="none" stroke="#7c7c7c" stroke-width="1" stroke-linejoin="round"/>
<circle cx="779.5" cy="403" r="3.6" fill="none" stroke="#7c7c7c" stroke-width="0.8"/>
<text x="779.5" y="404.8" font-family="Liberation Sans" font-size="5" fill="#7c7c7c" text-anchor="middle">32</text>
<path d="M608.5,416 H611.5 V413 H617.5 V416 H620.5 L618.5,419 L620.5,422 H617.5 V420 H611.5 V422 H608.5 L610.5,419 Z" fill="none" stroke="#7c7c7c" stroke-width="1" stroke-linejoin="round"/>
<path d="M623.5,420 H626.5 V423 H632.5 V420 H635.5 L633.5,417 L635.5,414 H632.5 V416 H626.5 V414 H623.5 L625.5,417 Z" fill="none" stroke="#7c7c7c" stroke-width="1" stroke-linejoin="round"/>
<path d="M638.5,417 Q640.5,415 641.5,415 V412 Q644.5,414 647.5,412 V415 Q648.5,415 650.5,417 L648.5,420 L650.5,423 Q648.5,421 647.5,421 Q644.5,423 641.5,421 Q640.5,421 638.5,423 L640.5,420 Z" fill="none" stroke="#7c7c7c" stroke-width="1" stroke-linejoin="round"/>
<path d="M653.5,419 Q655.5,421 656.5,421 V424 Q659.5,422 662.5,424 V421 Q663.5,421 665.5,419 L663.5,416 L665.5,413 Q663.5,415 662.5,415 Q659.5,413 656.5,415 Q655.5,415 653.5,413 L655.5,416 Z" fill="none" stroke="#7c7c7c" stroke-width="1" stroke-linejoin="round"/>
<path d="M670.5,414 Q670.5,412 672.5,412 H678.5 Q680.5,412 678.5,414 V422 Q678.5,424 676.5,424 H670.5 Q668.5,424 670.5,422 Z M672.5,412 Q670.5,412 670.5,414" fill="none" stroke="#7c7c7c" stroke-width="1" stroke-linejoin="round"/>
<path d="M683.5,415 Q683.5,413 685.5,413 H693.5 V412 Q695.5,412 695.5,414 V421 Q695.5,423 693.5,423 H685.5 V424 Q683.5,424 683.5,422 Z" fill="none" stroke="#7c7c7c" stroke-width="1" stroke-linejoin="round"/>
<path d="M698.5,414 Q701.5,411 704.5,414 Q707.5,417 710.5,414 V422 Q707.5,425 704.5,422 Q701.5,419 698.5,422 Z" fill="none" stroke="#7c7c7c" stroke-width="1" stroke-linejoin="round"/>
<path d="M713.5,414 Q715.5,412 717.5,414 Q719.5,416 721.5,414 Q723.5,412 725.5,414 V422 Q723.5,424 721.5,422 Q719.5,420 717.5,422 Q715.5,424 713.5,422 Z" fill="none" stroke="#7c7c7c" stroke-width="1" stroke-linejoin="round"/>
<path d="M608.5,445 H620.5 V452 H613.5 L610.5,456 L611.5,452 H608.5 Z" fill="none" stroke="#7c7c7c" stroke-width="1" stroke-linejoin="round"/>
<path d="M625.5,445 H633.5 Q635.5,445 635.5,447 V450 Q635.5,452 633.5,452 H628.5 L625.5,456 L626.5,452 Q623.5,452 623.5,450 V447 Q623.5,445 625.5,445 Z" fill="none" stroke="#7c7c7c" stroke-width="1" stroke-linejoin="round"/>
<path d="M641.5,452 A6,4 0 1 1 644.5,452.5 L639.5,456 Z" fill="none" stroke="#7c7c7c" stroke-width="1" stroke-linejoin="round"/>
<path d="M656.5,452 Q652.5,452 654.5,449 Q653.5,445 657.5,446 Q659.5,444 661.5,446 Q665.5,445 664.5,449 Q666.5,453 661.5,452 Q659.5,454 656.5,452 Z M654.5,455 h0.5 M653.0,456.5 h0.5" fill="none" stroke="#7c7c7c" stroke-width="1" stroke-linejoin="round"/>
<rect x="673.0" y="445.5" width="7" height="6" fill="none" stroke="#7c7c7c" />
<path d="M668.5,455 L672.5,449" fill="none" stroke="#7c7c7c" stroke-width="1" stroke-linejoin="round"/>
<rect x="688.0" y="445.5" width="7" height="6" fill="none" stroke="#7c7c7c" />
<path d="M683.5,455 L685.5,450 H687.5" fill="none" stroke="#7c7c7c" stroke-width="1" stroke-linejoin="round"/>
<rect x="703.0" y="445.5" width="7" height="6" fill="none" stroke="#7c7c7c" />
<path d="M698.5,456 V453 H700.5 V450" fill="none" stroke="#7c7c7c" stroke-width="1" stroke-linejoin="round"/>
<rect x="718.0" y="445.5" width="7" height="6" fill="none" stroke="#7c7c7c" stroke-dasharray="1.2,1"/>
<path d="M713.5,455 L717.5,449 M717.5,446 V451.5" fill="none" stroke="#7c7c7c" stroke-width="1" stroke-linejoin="round"/>
<rect x="733.0" y="445.5" width="7" height="6" fill="none" stroke="#7c7c7c" stroke-dasharray="1.2,1"/>
<path d="M728.5,455 L730.5,450 H732.5" fill="none" stroke="#7c7c7c" stroke-width="1" stroke-linejoin="round"/>
<rect x="748.0" y="445.5" width="7" height="6" fill="none" stroke="#7c7c7c" stroke-dasharray="1.2,1"/>
<path d="M743.5,456 V453 H745.5 V450" fill="none" stroke="#7c7c7c" stroke-width="1" stroke-linejoin="round"/>
<rect x="763.0" y="445.5" width="7" height="6" fill="none" stroke="#7c7c7c" stroke-dasharray="1.2,1"/>
<path d="M758.5,455 L762.5,449 M762.5,446 V451.5" fill="none" stroke="#7c7c7c" stroke-width="1" stroke-linejoin="round"/>
<rect x="778.0" y="445.5" width="7" height="6" fill="none" stroke="#7c7c7c" stroke-dasharray="1.2,1"/>
<path d="M773.5,455 L775.5,450 H777.5" fill="none" stroke="#7c7c7c" stroke-width="1" stroke-linejoin="round"/>
<rect x="613.0" y="461.0" width="7" height="6" fill="none" stroke="#7c7c7c" stroke-dasharray="1.2,1"/>
<path d="M608.5,471.5 V468.5 H610.5 V465.5" fill="none" stroke="#7c7c7c" stroke-width="1" stroke-linejoin="round"/>
<rect x="628.0" y="461.0" width="7" height="6" fill="none" stroke="#7c7c7c" />
<path d="M623.5,470.5 L626.5,465.5 H627.5 M627.0,461.0 V467.0" fill="none" stroke="#7c7c7c" stroke-width="1" stroke-linejoin="round"/>
<rect x="643.0" y="461.0" width="7" height="6" fill="none" stroke="#7c7c7c" />
<path d="M638.5,470.5 L641.5,465.5 H642.5 M642.0,461.0 V467.0" fill="none" stroke="#7c7c7c" stroke-width="1" stroke-linejoin="round"/>
<rect x="658.0" y="461.0" width="7" height="6" fill="none" stroke="#7c7c7c" />
<path d="M653.5,471.5 V468.5 H655.5 V465.5 M656.5,461.0 V467.0" fill="none" stroke="#7c7c7c" stroke-width="1" stroke-linejoin="round"/>
<rect x="608.5" y="493.0" width="12" height="11" fill="none" stroke="#7c7c7c" stroke-width="1" />
<path d="M617.5,495.0 V502.0 L611.5,498.5 Z" fill="none" stroke="#7c7c7c" stroke-width="1" stroke-linejoin="round"/>
<rect x="623.5" y="493.0" width="12" height="11" fill="none" stroke="#7c7c7c" stroke-width="1" />
<path d="M626.5,495.0 V502.0 L632.5,498.5 Z" fill="none" stroke="#7c7c7c" stroke-width="1" stroke-linejoin="round"/>
<rect x="638.5" y="493.0" width="12" height="11" fill="none" stroke="#7c7c7c" stroke-width="1" />
<path d="M647.5,495.0 V502.0 L643.5,498.5 Z M641.5,495.0 V502.0" fill="none" stroke="#7c7c7c" stroke-width="1" stroke-linejoin="round"/>
<rect x="653.5" y="493.0" width="12" height="11" fill="none" stroke="#7c7c7c" stroke-width="1" />
<path d="M656.5,495.0 V502.0 L660.5,498.5 Z M662.5,495.0 V502.0" fill="none" stroke="#7c7c7c" stroke-width="1" stroke-linejoin="round"/>
<rect x="668.5" y="493.0" width="12" height="11" fill="none" stroke="#7c7c7c" stroke-width="1" />
<path d="M670.5,498.5 L674.5,494.5 L678.5,498.5 M671.5,497.5 V502.5 H677.5 V497.5 M673.5,502.5 V499.5 H675.5 V502.5" fill="none" stroke="#7c7c7c" stroke-width="1" stroke-linejoin="round"/>
<rect x="683.5" y="493.0" width="12" height="11" fill="none" stroke="#7c7c7c" stroke-width="1" />
<circle cx="689.5" cy="498.5" r="4" fill="none" stroke="#7c7c7c"/>
<path d="M689.5,497.5 V501.0 M689.5,495.7 V496.5" fill="none" stroke="#7c7c7c" stroke-width="1" stroke-linejoin="round"/>
<rect x="698.5" y="493.0" width="12" height="11" fill="none" stroke="#7c7c7c" stroke-width="1" />
<path d="M701.5,495.5 V499.5 Q701.5,501.5 704.5,501.5 Q707.5,501.5 707.5,498.5 M705.5,497.5 L707.5,495.5 L709.5,497.5" fill="none" stroke="#7c7c7c" stroke-width="1" stroke-linejoin="round"/>
<rect x="713.5" y="493.0" width="12" height="11" fill="none" stroke="#7c7c7c" stroke-width="1" />
<path d="M715.5,496.5 H723.5 V499.5 Q719.5,502.5 715.5,499.5 Z" fill="none" stroke="#7c7c7c" stroke-width="1" stroke-linejoin="round"/>
<rect x="728.5" y="493.0" width="12" height="11" fill="none" stroke="#7c7c7c" stroke-width="1" />
<path d="M731.5,494.5 H735.5 L737.5,496.5 V502.5 H731.5 Z" fill="none" stroke="#7c7c7c" stroke-width="1" stroke-linejoin="round"/>
<rect x="743.5" y="493.0" width="12" height="11" fill="none" stroke="#7c7c7c" stroke-width="1" />
<path d="M745.5,497.0 h2 l3,-3 v9 l-3,-3 h-2 Z M752.0,496.5 l2,-1 M752.0,498.5 h2 M752.0,500.5 l2,1" fill="none" stroke="#7c7c7c" stroke-width="1" stroke-linejoin="round"/>
<rect x="758.5" y="493.0" width="12" height="11" fill="none" stroke="#7c7c7c" stroke-width="1" />
<text x="761.5" y="502.5" font-family="Liberation Sans" font-size="10" fill="#7c7c7c" font-weight="700" textLength="6" lengthAdjust="spacingAndGlyphs" >?</text>
<rect x="773.5" y="493.0" width="12" height="11" fill="none" stroke="#7c7c7c" stroke-width="1" />
<rect x="796" y="510" width="1" height="1" fill="#888" />
<rect x="798" y="508" width="1" height="1" fill="#888" />
<rect x="798" y="510" width="1" height="1" fill="#888" />
<path d="M0,0 H1024 V576 H0 Z M596.5,98.5 L788.5,98.5 L788.5,2.5 L927.5,2.5 L927.5,195.5 L817.5,195.5 L817.5,525.5 L596.5,525.5 Z" fill="rgba(19,71,107,0.75)" fill-rule="evenodd"/>
<path d="M596.5,98.5 L788.5,98.5 L788.5,2.5 L927.5,2.5 L927.5,195.5 L817.5,195.5 L817.5,525.5 L596.5,525.5 Z" fill="none" stroke="#ffc000" stroke-width="3.2" stroke-linejoin="miter"/>
</svg>
</body></html>
